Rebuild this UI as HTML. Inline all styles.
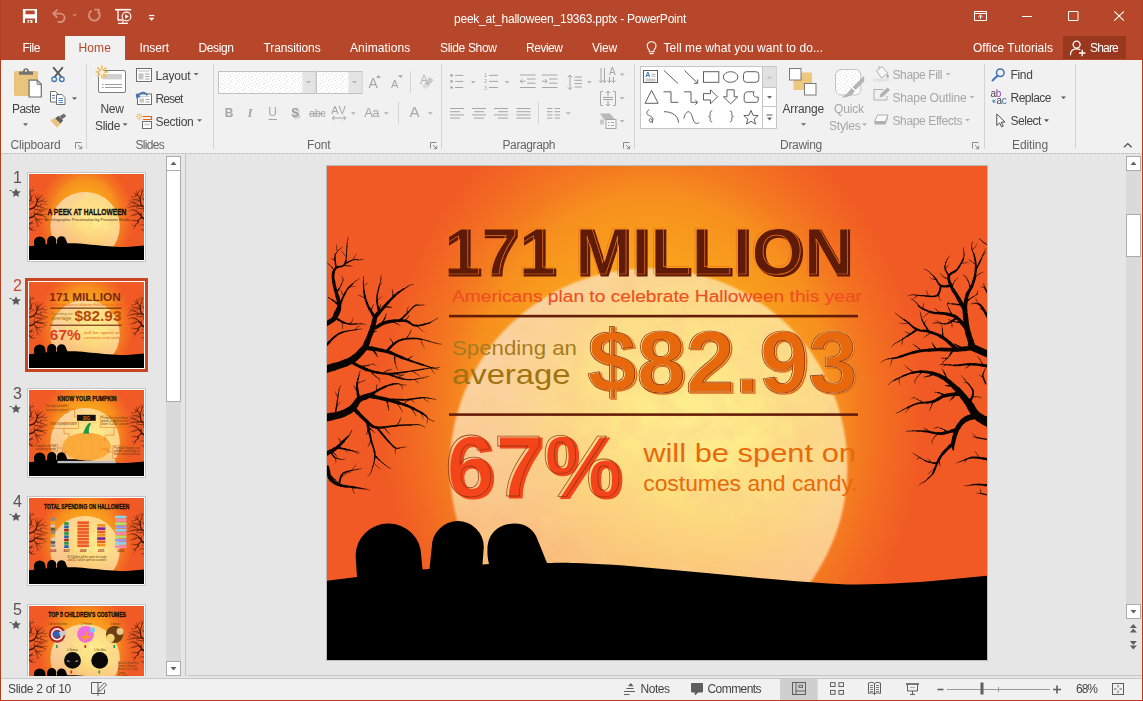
<!DOCTYPE html>
<html lang="en"><head><meta charset="utf-8"><title>peek_at_halloween_19363.pptx - PowerPoint</title>
<style>
html,body{margin:0;padding:0}
body{width:1143px;height:701px;overflow:hidden;background:#e6e6e6;font-family:"Liberation Sans",sans-serif;font-size:12px}
#app{position:relative;width:1143px;height:701px;overflow:hidden;background:#e6e6e6}
.a{position:absolute}
.t{position:absolute;white-space:nowrap;line-height:16px;height:16px}
#tb{left:0;top:0;width:1143px;height:60px;background:#b7472a}
#hometab{left:65px;top:36px;width:60px;height:24px;background:#f1f1f1}
#share{left:1063px;top:36px;width:63px;height:23px;background:#99371f}
#rib{left:0;top:60px;width:1143px;height:93px;background:#f1f1f1}
#ribline{left:1px;top:153px;width:1141px;height:1px;background:repeating-linear-gradient(90deg,#c4c4c4 0 3px,#dedede 3px 4px)}
#status{left:0;top:678px;width:1143px;height:22px;background:#f1f1f1;border-top:1px solid #c8c8c8}
#stline{left:188px;top:675px;width:955px;height:1px;background:#c6c6c6}
#stgap{left:0;top:676px;width:1143px;height:2px;background:#e6e6e6}
.bl{left:0;top:0;width:1px;height:701px;background:#b43f1f}
.br{left:1142px;top:0;width:1px;height:701px;background:#b43f1f}
.bb{left:0;top:700px;width:1143px;height:1px;background:#b43f1f}
.sep{position:absolute;width:1px;background:#d4d4d4}
.thumb{position:absolute;background:#fff;border:1px solid #c9c9c9;box-sizing:border-box}
.thumb svg{position:absolute;left:0;top:0;display:block}
svg text{font-family:"Liberation Sans",sans-serif}
</style></head><body><div id="app">
<div class="a" id="tb"></div><div class="a" id="hometab"></div><div class="a" id="share"></div>
<div class="a" id="rib"></div><div class="a" id="ribline"></div>

<div class="sep" style="left:86px;top:64px;height:85px"></div>
<div class="sep" style="left:213px;top:64px;height:85px"></div>
<div class="sep" style="left:441px;top:64px;height:85px"></div>
<div class="sep" style="left:634px;top:64px;height:85px"></div>
<div class="sep" style="left:984px;top:64px;height:85px"></div>
<div class="sep" style="left:1075px;top:64px;height:85px"></div>
<div class="sep" style="left:410px;top:71px;height:22px"></div>
<div class="sep" style="left:398px;top:102px;height:22px"></div>
<div class="sep" style="left:538px;top:102px;height:22px"></div>

<div class="a" style="left:27px;top:172px;width:119px;height:90px;background:#fff;border:1px solid #c4c4c4;box-sizing:border-box"></div><svg class="a" style="left:29px;top:174px" width="115" height="86" viewBox="0 0 660 493.6"><defs>
<radialGradient id="t0bg" gradientUnits="userSpaceOnUse" cx="325" cy="250" r="272" gradientTransform="translate(325 250) scale(1 1.21) translate(-325 -250)">
<stop offset="0" stop-color="#fbb034"/><stop offset="0.47" stop-color="#f9a11c"/><stop offset="0.667" stop-color="#f7901e"/><stop offset="0.765" stop-color="#f47b20"/><stop offset="0.86" stop-color="#f36c22"/><stop offset="1" stop-color="#f15a24"/>
</radialGradient>
<radialGradient id="t0mo" gradientUnits="userSpaceOnUse" cx="365" cy="262" r="215">
<stop offset="0" stop-color="#feef90"/><stop offset="0.3" stop-color="#fee988"/><stop offset="0.6" stop-color="#fdde84" stop-opacity="0.85"/><stop offset="0.85" stop-color="#fcd58c" stop-opacity="0.35"/><stop offset="1" stop-color="#fbd3a0" stop-opacity="0"/>
</radialGradient>
<linearGradient id="t0mv" gradientUnits="userSpaceOnUse" x1="360" y1="285" x2="295" y2="500">
<stop offset="0" stop-color="#f6923a" stop-opacity="0"/><stop offset="0.4" stop-color="#f6923a" stop-opacity="0.18"/><stop offset="0.75" stop-color="#f68e36" stop-opacity="0.42"/><stop offset="1" stop-color="#f58a32" stop-opacity="0.62"/>
</linearGradient>
<filter id="t0bl" x="-5%" y="-5%" width="110%" height="110%"><feGaussianBlur stdDeviation="1.2"/></filter>
<filter id="t0tx" x="0" y="0" width="100%" height="100%"><feTurbulence type="fractalNoise" baseFrequency="0.035" numOctaves="3" seed="4" result="n"/><feColorMatrix in="n" type="matrix" values="0 0 0 0 0.96  0 0 0 0 0.62  0 0 0 0 0.25  0.9 0.9 0 0 -0.72" result="c"/><feComposite in="c" in2="SourceGraphic" operator="in"/></filter>
</defs><rect x="0" y="0" width="660" height="495" fill="url(#t0bg)"/><g filter="url(#t0bl)"><circle cx="321.6" cy="301.3" r="198.7" fill="#fbd2a2"/><circle cx="321.6" cy="301.3" r="198.7" fill="url(#t0mo)"/><circle cx="321.6" cy="301.3" r="198.7" fill="url(#t0mv)"/></g><circle cx="321.6" cy="301.3" r="197" fill="#000" filter="url(#t0tx)"/><g opacity="0.8" fill="none" stroke="#0b0502" stroke-linecap="round" stroke-linejoin="round"><path d="M-2.0 203.8 L1.7 202.6 L7.1 201.0M7.1 201.0 L13.2 199.1 L19.1 197.0M-2.0 252.3 L0.6 251.7 L4.3 250.9M4.3 250.9 L8.5 250.0 L12.6 249.0 L16.0 247.9" stroke-width="7.5"/><path d="M19.1 197.0 L24.0 194.8 L27.7 192.2M16.0 247.9 L18.5 246.8 L20.7 245.7 L22.6 244.5" stroke-width="7.0"/><path d="M27.7 192.2 L31.1 189.3 L33.9 186.3M33.9 186.3 L36.2 183.6 L37.9 181.8M22.6 244.5 L24.3 243.3 L26.0 241.9M26.0 241.9 L27.3 240.4 L28.5 238.7" stroke-width="6.5"/><path d="M28.5 238.7 L29.5 236.9 L30.6 235.3 L31.9 233.9" stroke-width="6.0"/><path d="M37.9 181.8 L38.4 181.1 L39.1 180.2M37.9 181.8 L39.0 179.3 L40.4 175.6M40.4 175.6 L42.1 171.5 L43.7 167.3M31.9 233.9 L33.8 232.8 L36.1 231.9 L38.5 231.1M38.5 231.1 L40.5 230.4 L41.9 229.9" stroke-width="5.5"/><path d="M43.7 167.3 L44.9 163.8 L45.8 160.9M45.8 160.9 L46.6 158.0 L47.1 155.5M-2.0 158.8 L-0.5 158.0 L1.5 156.8 L3.9 155.3 L6.2 153.7" stroke-width="5.0"/><path d="M47.1 155.5 L47.6 153.4 L47.9 151.9M6.2 153.7 L8.0 151.9 L9.4 149.8 L10.5 147.6 L11.5 145.2 L12.1 142.6M41.9 229.9 L42.7 229.5 L43.7 228.9M0.0 301.8 L0.4 303.6 L1.0 306.0" stroke-width="4.5"/><path d="M39.1 180.2 L39.7 179.2 L40.3 178.2M37.9 181.8 L41.0 182.3 L45.2 182.9M47.9 151.9 L47.9 151.1 L47.9 150.1M12.1 142.6 L12.4 139.9 L12.1 136.9 L11.3 133.7 L10.3 130.3M41.9 229.9 L44.3 230.5 L47.7 231.2M47.7 231.2 L51.7 232.0 L55.9 232.9 L59.9 233.9M26.0 241.9 L27.9 244.0 L30.7 246.9M-2.0 288.8 L-0.3 287.9 L2.1 286.6M1.0 306.0 L1.8 308.9 L2.7 311.6 L4.0 313.8" stroke-width="4.0"/><path d="M45.2 182.9 L50.2 183.7 L55.3 184.7M47.9 151.9 L49.6 149.9 L51.9 147.1M44.9 163.8 L46.9 162.7 L49.7 161.1 L53.0 159.2M43.7 228.9 L44.7 228.2 L45.6 227.4M59.9 233.9 L63.8 235.0 L67.9 236.1 L72.1 237.3M30.7 246.9 L34.0 250.2 L37.2 253.4 L39.9 255.9M2.1 286.6 L4.9 285.1 L7.7 283.4M4.0 313.8 L5.5 315.5 L7.4 316.8 L9.4 318.0" stroke-width="3.5"/><path d="M40.3 178.2 L40.7 177.1 L41.1 176.3M55.3 184.7 L59.9 185.8 L64.0 187.1M47.9 150.1 L47.8 149.1 L47.8 148.0M47.9 151.9 L46.9 150.2 L45.5 147.9M51.9 147.1 L54.7 143.9 L57.4 140.6M53.0 159.2 L56.5 157.5 L59.9 156.3 L63.4 155.5M63.4 155.5 L67.3 154.9 L71.1 154.7 L74.7 154.6M10.3 130.3 L9.2 127.0 L8.4 123.9 L7.7 120.9 L7.0 117.9 L6.5 115.0M24.0 196.0 L26.1 197.1 L29.0 198.8M29.0 198.8 L32.5 200.7 L36.2 202.5 L39.9 204.0M72.1 237.3 L76.1 238.6 L79.9 239.9M31.9 233.9 L31.6 232.0 L31.1 229.2M39.9 255.9 L42.0 257.7 L43.7 259.3 L45.4 260.5M7.7 283.4 L10.0 281.9 L11.9 280.3M9.4 318.0 L11.6 319.0 L14.0 319.8" stroke-width="3.0"/><path d="M64.0 187.1 L67.8 188.7 L71.7 190.4 L75.7 192.1M45.5 147.9 L43.8 145.2 L42.2 142.5M42.2 142.5 L40.9 139.9 L40.0 137.5M57.4 140.6 L59.9 137.9 L62.0 135.6M62.0 135.6 L64.0 133.5 L66.0 131.5 L67.9 129.6M74.7 154.6 L77.9 154.9 L80.4 155.6 L82.3 156.7M59.9 185.0 L61.4 183.5 L63.5 181.3M63.5 181.3 L66.1 178.8 L68.9 176.5M6.5 115.0 L6.1 112.3 L6.0 109.9 L6.2 107.9 L6.6 106.1M8.0 151.9 L9.6 152.8 L11.8 154.1M-2.0 180.8 L-0.2 178.9 L2.4 176.1M39.9 204.0 L43.7 205.1 L47.6 206.2 L51.7 207.0M51.7 207.0 L55.8 207.6 L59.9 208.0M45.6 227.4 L46.5 226.6 L47.2 226.0M79.9 239.9 L83.5 241.5 L87.1 243.2M31.1 229.2 L30.6 225.9 L30.1 222.7M41.9 229.9 L43.9 228.8 L46.6 227.1M46.6 227.1 L49.8 225.2 L53.0 223.4M59.9 233.9 L62.7 234.0 L66.6 234.0M45.4 260.5 L47.3 261.3 L49.9 261.9M49.9 261.9 L53.3 262.0 L57.1 261.6M39.9 255.9 L40.5 258.4 L41.2 261.9M41.2 261.9 L42.1 266.0 L43.1 270.1M11.9 280.3 L13.6 278.6 L15.2 276.9 L16.7 275.3M14.0 319.8 L16.6 320.5 L19.5 320.9" stroke-width="2.5"/><path d="M75.7 192.1 L79.9 193.8 L84.8 195.5M45.2 182.9 L46.0 183.9 L47.0 185.3M43.7 167.3 L44.4 167.2 L45.5 167.0M47.6 153.4 L47.4 152.4 L47.2 150.9M47.8 148.0 L47.8 147.0 L47.8 146.3M40.0 137.5 L39.1 135.1 L38.4 132.7 L37.8 130.3M67.9 129.6 L69.9 127.9 L72.1 126.2M51.9 145.9 L51.5 144.0 L51.0 141.5M51.0 141.5 L50.4 138.4 L50.0 135.2M82.3 156.7 L84.1 158.0 L85.9 159.2 L87.9 159.8 L90.2 159.9M90.2 159.9 L92.8 159.6 L95.5 159.0 L97.9 158.4M71.9 155.5 L73.0 154.4 L74.5 153.0M68.9 176.5 L71.9 174.8 L75.1 173.8M6.6 106.1 L7.2 104.6 L8.1 103.2 L9.2 101.9 L10.7 101.1M6.2 153.7 L6.1 152.4 L6.1 150.5M12.4 139.9 L13.4 137.6 L14.8 134.3M14.8 134.3 L16.5 130.5 L18.3 126.9M11.8 154.1 L14.4 155.6 L17.2 156.9M2.4 176.1 L5.4 173.0 L8.7 170.1M59.9 208.0 L63.8 208.0 L67.7 207.7M59.9 208.0 L62.7 208.9 L66.6 210.3M87.1 243.2 L90.4 244.9 L93.4 246.5 L95.8 247.9M30.1 222.7 L30.0 220.0 L30.1 217.5M53.0 223.4 L55.9 222.0 L58.5 220.8M66.6 234.0 L71.2 234.1 L75.8 234.1M75.8 234.1 L79.9 233.9 L83.4 233.6M57.1 261.6 L61.3 261.0 L65.7 260.4 L69.9 259.9M43.1 270.1 L43.9 273.9 L44.8 277.2M49.9 261.9 L51.3 263.6 L53.3 266.0M53.3 266.0 L55.5 268.8 L57.8 271.5M16.7 275.3 L18.0 273.9 L19.2 272.7M10.0 281.9 L11.4 282.1 L13.3 282.5M13.3 282.5 L15.6 283.0 L17.9 283.4M19.5 320.9 L22.6 321.2 L25.5 321.5 L28.0 321.8M1.8 308.9 L2.5 310.1 L3.5 311.8M12.0 318.8 L12.4 317.2 L12.8 314.9M12.8 314.9 L13.5 312.2 L14.5 309.7" stroke-width="2.0"/><path d="M84.8 195.5 L90.3 197.4 L95.8 199.2M95.8 199.2 L100.5 200.7 L103.8 201.8M47.0 185.3 L48.0 186.7 L48.9 188.1M45.5 167.0 L46.5 166.6 L47.5 166.1M47.2 150.9 L47.0 149.5 L46.6 148.1M37.8 130.3 L37.3 127.9 L37.0 125.4M37.0 125.4 L36.7 122.7 L36.5 120.1M72.1 126.2 L74.5 124.6 L76.8 123.1M54.7 143.9 L55.9 143.2 L57.6 142.3M50.0 135.2 L49.9 131.9 L50.4 128.3M97.9 158.4 L99.8 157.8 L101.4 157.4 L102.6 157.0M53.0 159.2 L54.2 159.3 L55.9 159.4M74.5 153.0 L76.3 151.3 L78.1 149.5M78.1 149.5 L79.9 147.9 L81.5 146.2M81.5 146.2 L83.2 144.3 L84.9 142.5 L86.5 141.0M75.1 173.8 L78.6 173.1 L82.3 172.8 L86.1 172.7M86.1 172.7 L89.9 172.8 L93.9 173.4M10.7 101.1 L12.6 100.7 L14.7 100.4 L16.6 99.6 L18.0 97.9 L18.8 95.0M6.1 150.5 L6.2 148.6 L6.5 146.9M6.5 146.9 L7.0 145.3 L7.4 143.6 L7.5 141.8M9.2 127.0 L10.2 126.3 L11.6 125.2M18.3 126.9 L20.0 123.9 L21.7 121.6M17.2 156.9 L20.0 157.8 L22.9 158.2M8.7 170.1 L12.0 167.8 L15.6 166.4M15.6 166.4 L19.7 165.4 L23.9 164.7M9.2 101.9 L8.9 100.2 L8.5 97.7M8.5 97.7 L8.2 94.9 L7.9 92.2M18.0 97.9 L19.1 97.3 L20.7 96.4M20.7 96.4 L22.5 95.5 L24.4 94.6M67.7 207.7 L71.5 207.2 L75.6 206.6 L79.9 206.0M79.9 206.0 L84.9 205.2 L90.7 204.3 L96.4 203.4M66.6 210.3 L71.1 211.9 L75.8 213.2M75.8 213.2 L79.9 214.0 L83.7 214.0M95.8 247.9 L97.6 249.1 L98.9 250.1 L99.7 251.0M47.7 231.2 L48.5 232.3 L49.7 234.0M49.7 234.0 L50.7 235.7 L51.7 237.4M59.9 233.9 L61.0 233.5 L62.5 232.8M30.1 217.5 L30.6 215.2 L31.1 213.1M58.5 220.8 L61.1 219.8 L63.6 219.0 L65.9 218.4M65.9 218.4 L67.9 218.0 L69.6 217.9M83.4 233.6 L86.9 233.1 L90.2 232.6 L93.2 232.2M93.2 232.2 L95.8 231.9 L98.1 232.0M69.9 259.9 L74.4 259.6 L79.2 259.4 L83.9 259.2M34.0 250.2 L34.4 251.8 L35.0 254.0M44.8 277.2 L45.9 280.4 L46.9 283.5 L47.6 286.7M47.6 286.7 L47.9 289.8 L47.6 293.4M57.8 271.5 L59.9 273.9 L61.7 275.9M61.7 275.9 L63.5 277.9 L65.2 279.7 L66.8 281.2M47.9 289.8 L48.7 290.7 L49.9 291.9M49.9 291.9 L51.2 293.2 L52.6 294.6M8.0 249.9 L8.3 248.3 L8.6 246.1M8.6 246.1 L9.1 243.4 L9.6 240.6M19.2 272.7 L20.2 271.6 L21.1 270.7M4.9 285.1 L5.3 284.4 L5.8 283.4M17.9 283.4 L20.0 283.9 L21.9 284.3M4.0 286.9 L4.5 287.6 L5.2 288.6M5.2 288.6 L6.1 289.8 L7.0 291.0M28.0 321.8 L30.1 322.1 L32.1 322.5 L33.9 322.8M3.5 311.8 L4.7 313.4 L6.1 314.7M11.6 319.0 L12.8 318.5 L14.5 318.0M14.5 309.7 L16.0 307.8 L18.4 306.5" stroke-width="1.5"/><path d="M48.9 188.1 L49.8 189.6 L50.4 190.7M67.8 188.7 L67.8 190.4 L67.7 192.8M67.7 192.8 L67.9 195.1 L68.3 197.4M79.9 193.8 L80.5 195.1 L81.4 197.0M103.8 201.8 L104.7 202.2 L105.9 202.8M47.5 166.1 L48.4 165.6 L49.0 165.2M46.6 148.1 L46.2 146.6 L45.9 145.7M36.5 120.1 L36.4 117.9 L36.3 116.3M43.8 145.2 L43.8 144.2 L43.9 142.8M76.8 123.1 L78.9 121.8 L80.3 120.9M57.6 142.3 L59.4 141.4 L61.2 140.6M61.2 140.6 L63.0 139.8 L64.2 139.3M62.0 135.6 L62.2 134.4 L62.5 132.7M50.4 128.3 L51.3 124.1 L52.3 120.0M52.3 120.0 L53.3 116.4 L53.9 113.9M102.6 157.0 L103.5 156.5 L104.3 156.1 L104.8 155.9M55.9 159.4 L57.6 159.6 L59.3 160.0M59.3 160.0 L60.9 160.4 L62.1 160.8M86.5 141.0 L87.9 139.9 L89.1 139.3M89.1 139.3 L90.3 139.2 L91.4 139.2M91.4 139.2 L92.2 139.4 L92.9 139.5M93.9 173.4 L98.3 174.4 L102.6 175.6M102.6 175.6 L106.2 176.7 L108.8 177.4M66.1 178.8 L66.1 177.3 L66.3 175.2M66.3 175.2 L66.5 173.0 L67.1 171.0M18.8 95.0 L19.4 90.9 L19.6 86.5 L19.8 82.6 L20.0 80.0M7.5 141.8 L7.5 139.9 L7.5 138.5M11.6 125.2 L13.1 124.3 L14.6 123.5M7.0 117.9 L6.0 117.4 L4.6 116.7M4.6 116.7 L3.2 116.0 L1.8 115.3M7.2 104.6 L6.0 103.5 L4.2 102.0M21.7 121.6 L23.7 119.6 L25.6 117.9M25.6 117.9 L27.2 116.5 L28.4 115.5M22.9 158.2 L26.2 158.3 L29.5 158.1M29.5 158.1 L32.4 157.9 L34.3 157.8M11.8 154.1 L12.6 153.7 L13.9 153.1M23.9 164.7 L27.4 164.2 L30.0 163.8M5.4 173.0 L5.2 172.3 L4.9 171.2M7.9 92.2 L8.0 90.0 L8.5 88.3M8.5 88.3 L9.4 86.8 L10.4 85.6M10.4 85.6 L11.4 84.7 L12.0 84.0M24.4 94.6 L26.0 94.0 L27.4 93.7M27.4 93.7 L28.8 93.7 L30.1 93.8M30.1 93.8 L31.2 93.9 L31.9 94.0M96.4 203.4 L101.4 202.6 L104.8 202.0M43.7 205.1 L45.0 204.9 L46.9 204.5M46.9 204.5 L48.8 204.0 L50.5 203.7M55.8 207.6 L57.1 208.7 L58.8 210.2M58.8 210.2 L60.6 211.7 L62.4 213.2M71.5 207.2 L72.6 206.4 L74.3 205.2M83.7 214.0 L87.7 213.6 L91.4 213.0M91.4 213.0 L94.6 212.4 L96.8 212.0M99.7 251.0 L100.3 251.8 L100.8 252.3M51.7 237.4 L52.5 239.3 L53.0 240.6M62.5 232.8 L64.0 232.0 L65.4 231.3M67.9 236.1 L69.2 235.6 L71.0 234.9M71.0 234.9 L72.7 234.0 L74.2 232.9M31.1 213.1 L31.6 211.3 L31.9 210.0M30.6 225.9 L30.1 225.5 L29.3 224.8M29.3 224.8 L28.6 224.2 L27.8 223.6M69.6 217.9 L71.2 218.0 L72.5 218.4M72.5 218.4 L73.5 218.7 L74.3 219.0M49.8 225.2 L51.1 225.7 L52.9 226.3M98.1 232.0 L100.2 232.2 L101.8 232.5M101.8 232.5 L103.2 232.8 L104.2 232.9M83.9 259.2 L88.0 259.0 L90.9 258.9M35.0 254.0 L35.5 256.3 L35.8 258.6M35.8 258.6 L36.0 260.9 L36.1 262.5M43.7 259.3 L43.0 260.9 L41.9 263.3M41.9 263.3 L40.7 265.5 L39.1 267.5M57.1 261.6 L58.4 260.5 L60.1 258.9M47.6 293.4 L46.9 297.2 L45.9 300.8M45.9 300.8 L44.9 304.0 L44.3 306.2M42.1 266.0 L43.4 266.8 L45.2 268.1M45.2 268.1 L46.9 269.4 L48.5 270.9M44.8 277.2 L44.4 278.3 L43.9 279.8M66.8 281.2 L68.3 282.3 L69.7 282.7M69.7 282.7 L71.1 282.7 L72.4 282.4M72.4 282.4 L73.5 282.1 L74.3 281.9M52.6 294.6 L53.9 295.8 L55.2 297.0M55.2 297.0 L56.6 298.1 L57.9 299.2M57.9 299.2 L59.1 300.2 L59.9 300.8M9.6 240.6 L10.0 237.9 L10.4 235.0M10.4 235.0 L10.9 231.8 L11.3 228.6M11.3 228.6 L11.7 225.9 L12.0 224.0M21.1 270.7 L21.8 270.0 L22.4 269.5M5.8 283.4 L6.2 282.5 L6.4 281.4M6.4 281.4 L6.5 280.3 L6.5 279.6M11.9 280.3 L12.5 280.0 L13.5 279.6M13.5 279.6 L14.4 279.3 L15.4 279.2M21.9 284.3 L23.8 284.8 L25.7 285.2M25.7 285.2 L27.2 285.6 L28.4 285.9M7.0 291.0 L8.0 291.8 L9.2 292.5M9.2 292.5 L10.5 293.0 L11.9 293.3M11.9 293.3 L13.1 293.6 L14.0 293.8M33.9 322.8 L35.3 323.0 L36.3 323.2M6.1 314.7 L7.6 316.0 L8.7 316.9M14.5 318.0 L16.2 317.5 L17.9 317.3M18.4 306.5 L21.5 305.5 L24.9 304.8M24.9 304.8 L27.9 304.3 L30.0 303.8" stroke-width="1.0"/><path d="M68.3 197.4 L68.9 199.7 L69.3 201.3M81.4 197.0 L82.1 199.0 L82.6 201.0M82.6 201.0 L82.8 203.1 L83.0 204.6M105.9 202.8 L107.2 203.4 L108.5 203.8M108.5 203.8 L109.8 204.3 L110.7 204.6M43.9 142.8 L44.1 141.4 L44.4 140.0M44.4 140.0 L44.8 138.6 L45.2 137.6M62.5 132.7 L62.7 131.0 L62.5 129.3M62.5 129.3 L62.2 127.6 L61.9 126.4M67.1 171.0 L67.8 169.0 L68.3 167.6M14.6 123.5 L16.2 122.8 L17.4 122.3M1.8 115.3 L0.4 114.6 L-0.6 114.1M4.2 102.0 L2.5 100.4 L1.2 98.5M1.2 98.5 L0.0 96.5 L-0.8 95.1M13.9 153.1 L15.1 152.5 L16.3 152.0M16.3 152.0 L17.6 151.6 L18.5 151.3M4.9 171.2 L4.5 170.2 L3.9 169.3M3.9 169.3 L3.3 168.4 L2.8 167.8M50.5 203.7 L52.2 203.2 L53.8 202.7 L55.6 201.9M55.6 201.9 L57.3 200.9 L58.5 200.3M62.4 213.2 L64.2 214.7 L65.4 215.7M74.3 205.2 L75.9 204.2 L77.7 203.4M77.7 203.4 L79.6 202.7 L80.9 202.2M65.4 231.3 L66.8 230.4 L67.8 229.8M74.2 232.9 L75.7 231.6 L76.7 230.7M27.8 223.6 L26.9 223.1 L26.3 222.8M52.9 226.3 L54.6 227.0 L56.2 228.0M56.2 228.0 L57.8 229.0 L58.9 229.8M39.1 267.5 L37.4 269.5 L36.2 270.8M60.1 258.9 L61.7 257.2 L63.1 255.3M63.1 255.3 L64.3 253.3 L65.1 251.9M48.5 270.9 L50.1 272.4 L51.2 273.4M43.9 279.8 L43.3 281.3 L42.8 282.9M42.8 282.9 L42.2 284.4 L41.9 285.5M15.4 279.2 L16.4 279.2 L17.1 279.1M17.9 317.3 L19.7 317.2 L20.9 317.1" stroke-width="0.5"/></g><g opacity="0.8" fill="none" stroke="#0b0502" stroke-linecap="round" stroke-linejoin="round"><path d="M662.8 257.5 L661.0 256.5 L658.3 255.2" stroke-width="9.5"/><path d="M658.3 255.2 L655.3 253.6 L652.3 251.8" stroke-width="8.5"/><path d="M652.3 251.8 L649.8 249.9 L647.9 247.8" stroke-width="8.0"/><path d="M647.9 247.8 L646.3 245.3 L644.8 242.8 L643.4 240.3" stroke-width="7.5"/><path d="M661.8 188.8 L645.8 181.8M643.4 240.3 L641.9 237.9 L640.1 235.6" stroke-width="7.0"/><path d="M640.1 235.6 L638.3 233.3 L636.5 231.1" stroke-width="6.5"/><path d="M645.8 181.8 L645.3 181.5 L644.6 180.9M645.8 181.8 L645.0 179.4 L643.9 176.0M636.5 231.1 L635.0 229.3 L633.9 227.9M649.8 249.9 L648.1 250.4 L645.7 250.9" stroke-width="6.0"/><path d="M643.9 176.0 L642.5 172.0 L641.3 167.8M641.3 167.8 L640.3 163.8 L639.5 159.7M645.7 250.9 L642.9 251.7 L640.2 252.7M640.2 252.7 L637.9 253.9 L635.9 255.5" stroke-width="5.5"/><path d="M645.8 181.8 L643.7 182.1 L640.8 182.6 L637.3 183.1M639.5 159.7 L639.0 155.0 L638.5 150.5M638.5 150.5 L638.1 146.6 L637.9 143.9M633.9 227.9 L633.2 227.4 L632.4 226.7M633.9 227.9 L632.2 226.2 L629.9 223.8 L627.3 221.0M635.9 255.5 L634.2 257.3 L632.6 259.3 L631.2 261.5" stroke-width="5.0"/><path d="M644.6 180.9 L643.9 180.4 L643.2 179.8M637.3 183.1 L633.6 183.5 L629.9 183.8 L626.1 183.9M627.3 221.0 L624.5 218.2 L621.9 216.0 L619.5 214.2M631.2 261.5 L629.9 263.9 L628.8 266.7" stroke-width="4.5"/><path d="M626.1 183.9 L622.2 183.9 L618.1 183.8 L614.0 183.7M637.9 143.9 L637.6 143.2 L637.2 142.1M637.9 143.9 L638.1 141.9 L638.3 139.2 L638.7 136.0M637.9 143.9 L636.7 141.9 L635.1 139.1 L633.3 135.9 L631.5 132.7M640.3 163.8 L638.9 162.1 L636.9 159.5 L634.6 156.7M632.4 226.7 L631.6 225.9 L630.9 225.0M619.5 214.2 L617.2 212.6 L614.8 211.2 L612.4 210.0M633.9 227.9 L631.6 228.2 L628.4 228.4M628.8 266.7 L627.8 269.9 L627.0 273.1M627.0 273.1 L626.4 275.9 L625.9 277.9" stroke-width="4.0"/><path d="M638.7 136.0 L639.2 132.8 L639.9 129.9 L640.8 127.4M631.5 132.7 L629.9 129.9 L628.5 127.6 L627.1 125.6 L625.9 123.7M634.6 156.7 L632.2 153.9 L629.9 151.9 L627.6 150.5M629.9 183.8 L628.0 182.1 L625.3 179.6 L622.2 176.8M612.4 210.0 L609.9 209.0 L607.2 208.0 L604.5 207.3M628.4 228.4 L624.8 228.8 L621.1 229.3 L617.9 229.9M625.9 277.9 L625.6 278.6 L625.3 279.7M629.9 263.9 L627.7 264.5 L624.5 265.5" stroke-width="3.5"/><path d="M643.2 179.8 L642.6 179.1 L642.2 178.6M614.0 183.7 L609.9 183.8 L605.9 184.0 L601.9 184.3M637.2 142.1 L636.8 141.1 L636.5 140.0M640.8 127.4 L642.1 125.1 L643.5 122.8 L644.8 120.4M625.9 123.7 L624.8 121.8 L623.9 119.9 L623.1 117.8M627.6 150.5 L625.2 149.5 L622.8 148.9 L620.3 148.3M622.2 176.8 L618.9 174.0 L615.9 171.8 L613.1 170.2M613.1 170.2 L610.2 168.8 L607.4 167.7 L604.6 166.7M661.8 152.9 L660.7 150.9 L659.1 148.1M661.8 200.4 L659.3 200.1 L655.7 199.6M604.5 207.3 L601.6 206.6 L598.8 206.2 L595.9 206.0 L593.1 206.0M617.9 229.9 L615.3 230.9 L613.0 232.2 L610.8 233.6M625.9 277.9 L624.5 279.2 L622.4 281.1M622.4 281.1 L620.1 283.4 L617.8 285.7 L615.9 287.8M624.5 265.5 L620.9 266.5 L617.2 267.4" stroke-width="3.0"/><path d="M601.9 184.3 L597.9 184.6 L593.9 185.1 L589.9 185.8 L585.8 186.8M639.0 155.0 L639.8 154.3 L641.1 153.3M644.8 120.4 L645.8 117.9 L646.7 115.2 L647.5 112.4M647.5 112.4 L648.1 109.5 L648.5 106.6 L648.8 103.9 L648.9 101.4M623.1 117.8 L622.3 115.7 L621.8 113.6 L621.6 111.7 L621.9 109.9M621.9 109.9 L622.9 108.5 L624.5 107.4 L626.3 106.4 L628.2 105.3M623.9 119.9 L622.5 120.0 L620.4 120.3M620.3 148.3 L617.9 147.9 L615.5 147.5 L613.1 147.4M613.1 147.4 L610.7 147.4 L608.3 147.3 L605.9 146.9 L603.4 146.1M604.6 166.7 L601.9 165.8 L599.4 165.3 L596.9 165.0M659.1 148.1 L657.2 144.9 L655.4 142.0M655.7 199.6 L651.6 199.1 L647.5 198.6M647.5 198.6 L643.8 198.4 L640.8 198.5M630.9 225.0 L630.2 224.1 L629.8 223.4M593.1 206.0 L590.4 206.2 L587.6 206.6 L584.8 207.2M610.8 233.6 L608.5 234.9 L605.9 235.9M605.9 235.9 L602.9 236.5 L599.7 236.8M641.9 237.9 L642.7 236.3 L643.9 234.0M625.3 279.7 L624.9 280.7 L624.5 281.8M615.9 287.8 L614.4 289.8 L613.1 291.8 L612.0 293.8M612.0 293.8 L610.9 295.8 L609.9 297.8M617.2 267.4 L613.9 267.9 L611.0 267.8M611.0 267.8 L608.2 267.5 L605.4 266.9 L602.7 266.3M661.8 293.8 L659.6 293.5 L656.4 292.9" stroke-width="2.5"/><path d="M585.8 186.8 L581.4 188.1 L577.1 189.6 L573.2 190.8M637.3 183.1 L636.0 182.6 L634.1 181.9M636.5 140.0 L636.1 139.0 L635.9 138.3M648.9 101.4 L648.8 98.9 L648.6 96.4 L648.2 94.1M628.2 105.3 L629.9 103.9 L631.3 102.1 L632.6 100.0M620.4 120.3 L618.1 120.5 L615.8 120.4M615.8 120.4 L613.9 119.9 L612.5 118.8M613.9 119.9 L613.5 121.4 L613.1 123.7M613.1 123.7 L612.4 126.1 L611.4 128.4M603.4 146.1 L600.8 145.2 L598.2 144.1 L595.8 142.9M629.9 151.9 L628.5 152.8 L626.6 154.2M596.9 165.0 L594.5 164.9 L592.2 164.6 L589.9 163.8 L587.7 162.6M587.7 162.6 L585.6 160.9 L583.6 159.0 L581.7 157.3M601.9 165.8 L601.0 164.4 L599.8 162.4M589.9 163.8 L588.3 165.0 L585.9 166.6M655.4 142.0 L653.8 139.9 L652.6 138.7M640.8 198.5 L637.8 198.7 L635.1 199.1 L632.4 199.4M621.9 216.0 L620.2 216.3 L617.9 216.7M599.7 236.8 L596.4 237.0 L593.1 237.3 L589.9 237.9M643.9 234.0 L645.2 231.3 L646.1 228.5M627.8 269.9 L626.9 270.3 L625.7 271.0M609.9 297.8 L609.0 299.9 L608.4 301.9M602.7 266.3 L599.9 265.9 L596.8 265.6M609.9 297.8 L608.6 297.6 L606.6 297.4M656.4 292.9 L652.7 292.3 L649.0 291.9M661.8 319.8 L660.1 319.6 L657.7 319.4M657.7 319.4 L654.9 319.1 L652.2 318.9" stroke-width="2.0"/><path d="M573.2 190.8 L570.0 191.8 L567.4 192.4 L565.4 192.7M634.1 181.9 L632.3 181.1 L630.5 180.1M626.1 183.9 L625.5 185.1 L624.5 186.7M624.5 186.7 L623.5 188.3 L622.6 189.7M609.9 183.8 L608.6 183.4 L606.7 182.8M597.9 184.6 L597.3 185.8 L596.4 187.4M641.1 153.3 L642.2 152.2 L643.2 151.0M648.2 94.1 L647.8 92.0 L647.3 89.8 L646.6 87.7M642.1 125.1 L643.0 124.7 L644.4 124.3M632.6 100.0 L633.9 97.8 L635.0 95.7 L635.9 94.0 L636.4 92.6M628.5 127.6 L628.6 126.5 L628.8 125.0M612.5 118.8 L611.2 117.2 L610.1 115.4 L609.1 113.5M609.1 113.5 L607.9 111.9 L606.6 110.4M611.4 128.4 L609.9 129.9 L607.7 130.5M607.7 130.5 L604.8 130.7 L601.7 130.4 L598.6 130.1M621.9 109.9 L621.2 108.8 L620.3 107.3M620.3 107.3 L619.2 105.5 L618.4 103.7M595.8 142.9 L593.9 141.9 L592.5 140.8 L591.4 139.6M626.6 154.2 L624.4 155.7 L622.0 157.0M622.0 157.0 L619.9 157.8 L617.7 158.1M581.7 157.3 L580.0 155.9 L578.4 154.7 L577.0 153.8M622.2 176.8 L622.1 175.5 L622.2 173.7M599.8 162.4 L598.3 160.0 L597.0 157.8M597.0 157.8 L595.9 155.9 L595.2 154.3M585.9 166.6 L583.2 168.4 L580.4 170.2M580.4 170.2 L578.0 171.8 L575.7 173.2M648.8 103.9 L649.6 102.5 L650.6 100.5M650.6 100.5 L651.7 98.2 L652.9 95.9M652.6 138.7 L651.4 138.0 L650.3 137.8M661.8 129.9 L657.8 121.9M632.4 199.4 L629.9 199.6 L627.3 199.5M627.3 199.5 L624.7 199.4 L622.3 199.2M584.8 207.2 L581.9 208.0 L578.9 209.1 L575.5 210.5M617.9 216.7 L615.6 217.2 L613.3 217.8M609.9 209.0 L608.4 209.7 L606.2 210.6M589.9 237.9 L586.7 239.0 L583.4 240.5 L580.2 242.0M646.1 228.5 L646.2 225.9 L645.3 223.4M645.3 223.4 L643.4 220.6 L641.2 217.9M625.7 271.0 L624.5 271.6 L623.2 272.1M624.5 281.8 L624.2 282.8 L623.9 283.6M608.4 301.9 L607.7 304.0 L606.9 305.9 L605.9 307.8M605.9 307.8 L604.4 309.7 L602.6 311.5 L600.7 313.3M596.8 265.6 L593.5 265.4 L590.3 265.3M606.6 297.4 L604.4 297.0 L602.1 296.5M602.1 296.5 L599.9 295.8 L597.7 294.8M649.0 291.9 L645.8 291.8 L643.0 292.3M643.0 292.3 L640.2 293.2 L637.6 294.2M652.2 318.9 L649.8 318.8 L647.9 318.9M661.8 273.9 L649.8 271.9M661.8 329.8 L653.8 327.8M658.8 218.0 L658.3 216.8 L657.6 215.2M657.6 215.2 L656.8 213.4 L656.2 211.6" stroke-width="1.5"/><path d="M565.4 192.7 L563.8 192.8 L562.5 192.9 L561.6 193.0M630.5 180.1 L628.9 179.0 L627.7 178.3M622.6 189.7 L621.6 191.1 L620.5 192.4 L619.1 193.7M619.1 193.7 L617.6 194.9 L616.5 195.7M620.5 192.4 L619.7 192.5 L618.5 192.6M606.7 182.8 L604.9 182.2 L603.0 181.6M596.4 187.4 L595.7 189.1 L595.1 190.9M585.8 186.8 L585.2 187.9 L584.3 189.4M643.2 151.0 L644.2 149.6 L644.8 148.7M646.6 87.7 L645.9 85.8 L645.3 84.1 L644.8 83.0M644.4 124.3 L645.7 123.9 L647.1 123.7M646.7 115.2 L646.3 114.1 L645.6 112.5M636.4 92.6 L636.7 91.4 L636.9 90.4 L637.0 89.6 L637.1 89.0M628.8 125.0 L629.1 123.4 L629.6 121.9M623.1 117.8 L621.8 117.4 L620.0 116.8M620.0 116.8 L618.3 116.0 L616.8 114.9M606.6 110.4 L605.1 108.9 L603.6 107.6M603.6 107.6 L602.4 106.4 L601.5 105.5M615.8 120.4 L615.2 119.5 L614.4 118.2M598.6 130.1 L595.9 129.9 L593.5 129.7M593.5 129.7 L591.2 129.5 L589.0 129.3M589.0 129.3 L587.2 129.0 L585.9 128.9M612.4 126.1 L613.3 127.2 L614.5 128.6M618.4 103.7 L617.9 101.9 L617.9 100.2M617.9 100.2 L618.4 98.4 L618.9 96.6M618.9 96.6 L619.5 95.0 L619.9 94.0M591.4 139.6 L590.6 138.5 L590.0 137.6 L589.5 136.9M622.8 148.9 L622.5 147.8 L622.2 146.2M622.2 146.2 L621.8 144.6 L621.3 143.1M610.7 147.4 L609.8 148.2 L608.5 149.4M617.7 158.1 L615.4 157.9 L613.2 157.5M613.2 157.5 L611.3 157.1 L609.9 156.9M577.0 153.8 L575.7 153.0 L574.7 152.3 L574.0 151.9M622.2 173.7 L622.3 171.9 L622.8 170.1M613.1 170.2 L611.7 170.1 L609.8 170.0M609.8 170.0 L607.9 169.7 L606.0 169.3M604.6 166.7 L604.3 165.6 L604.0 164.0M604.0 164.0 L603.8 162.4 L603.8 160.8M595.2 154.3 L594.7 152.9 L594.4 151.6M594.4 151.6 L594.1 150.6 L593.9 149.9M575.7 173.2 L573.3 174.7 L571.2 175.9M571.2 175.9 L569.3 177.0 L568.0 177.8M652.9 95.9 L653.8 94.0 L654.6 92.3M654.6 92.3 L655.3 90.6 L655.9 89.1M655.9 89.1 L656.5 87.9 L656.8 87.0M650.3 137.8 L649.5 137.6 L648.8 137.5M657.2 144.9 L657.7 144.4 L658.5 143.6M661.8 80.0 L655.8 76.0M622.3 199.2 L620.3 198.9 L618.9 198.8M655.7 199.6 L655.2 198.9 L654.5 197.9M654.5 197.9 L653.9 196.9 L653.5 195.8M643.8 198.4 L642.9 199.1 L641.6 200.2M575.5 210.5 L572.3 212.1 L569.5 213.4 L567.6 214.4M613.3 217.8 L611.0 218.4 L609.4 218.9M606.2 210.6 L604.0 211.4 L601.7 212.0M580.2 242.0 L577.5 243.4 L575.6 244.3M615.3 230.9 L614.0 230.3 L612.2 229.4M612.2 229.4 L610.3 228.4 L608.5 227.5M602.9 236.5 L601.8 235.8 L600.3 234.7M641.2 217.9 L639.2 215.6 L637.9 214.0M645.2 231.3 L644.6 230.4 L643.7 229.2M623.2 272.1 L621.8 272.5 L620.9 272.7M600.7 313.3 L599.1 314.8 L597.9 315.8M620.1 283.4 L618.6 284.0 L616.6 284.9M616.6 284.9 L614.6 286.0 L612.7 287.2M613.1 291.8 L613.5 292.7 L613.9 293.9M590.3 265.3 L587.5 265.2 L585.5 265.1M611.0 267.8 L610.4 268.4 L609.5 269.2M609.5 269.2 L608.7 270.1 L607.8 270.9M597.7 294.8 L595.3 293.4 L593.0 292.0M593.0 292.0 L591.0 290.7 L589.5 289.8M637.6 294.2 L635.4 295.2 L633.9 295.8M647.9 318.9 L646.0 319.1 L644.3 319.4M644.3 319.4 L642.9 319.6 L641.9 319.8M656.2 211.6 L655.8 210.0 L655.9 208.6M655.9 208.6 L656.4 207.1 L656.9 205.9M656.9 205.9 L657.5 204.8 L657.8 204.0" stroke-width="1.0"/><path d="M618.5 192.6 L617.4 192.6 L616.2 192.5M616.2 192.5 L615.1 192.4 L614.3 192.2M603.0 181.6 L601.1 181.0 L599.8 180.6M595.1 190.9 L594.6 192.7 L594.3 194.0M584.3 189.4 L583.6 190.9 L583.1 192.5M583.1 192.5 L582.8 194.2 L582.5 195.4M647.1 123.7 L648.4 123.5 L649.4 123.3M645.6 112.5 L645.0 110.9 L644.3 109.3M644.3 109.3 L643.6 107.7 L643.1 106.6M629.6 121.9 L630.1 120.4 L630.5 119.3M616.8 114.9 L615.3 113.6 L614.3 112.7M614.4 118.2 L613.6 116.8 L612.8 115.5M612.8 115.5 L612.0 114.2 L611.4 113.2M614.5 128.6 L615.8 130.1 L617.0 131.6M617.0 131.6 L618.2 133.1 L619.0 134.2M621.3 143.1 L620.8 141.6 L620.4 140.5M608.5 149.4 L607.3 150.5 L606.0 151.6M606.0 151.6 L604.6 152.7 L603.7 153.5M622.8 170.1 L623.4 168.4 L623.9 167.2M606.0 169.3 L604.2 168.8 L602.9 168.4M603.8 160.8 L603.9 159.2 L604.0 158.0M658.5 143.6 L659.4 142.8 L660.2 142.1M660.2 142.1 L661.1 141.5 L661.8 141.0M653.5 195.8 L653.1 194.6 L652.9 193.8M641.6 200.2 L640.3 201.2 L639.0 202.2M639.0 202.2 L637.6 203.2 L636.7 203.9M601.7 212.0 L599.4 212.4 L597.8 212.7M608.5 227.5 L606.6 226.7 L605.3 226.0M600.3 234.7 L598.7 233.5 L597.3 232.2M597.3 232.2 L596.0 230.9 L595.1 229.9M643.7 229.2 L642.9 227.9 L642.3 226.5M642.3 226.5 L641.6 225.1 L641.2 224.1M612.7 287.2 L610.9 288.5 L609.6 289.4M613.9 293.9 L614.5 295.1 L615.0 296.3M615.0 296.3 L615.5 297.5 L615.9 298.3M607.8 270.9 L606.9 271.7 L606.3 272.3" stroke-width="0.5"/></g><path d="M-2 415.5 L30 411.5 L28.6 390 A32.8 32 0 0 1 94.2 390 L95.5 404 L102.5 403.5 L104.800 381.500 A26 26 0 0 1 156.800 381.500 L155.5 399 L162 398.5 C160.500 392 160.300 388 160.500 385 C160 368 172 358 187.5 358 C199 358 206 364 209.5 371.5 L220 397.5 C232 397 240 397 246 397.5 C270 398 300 400 330 403 C400 409 470 417 520 419 C580 419 620 414 662 410 L662 497 L-2 497Z" fill="#000"/><text x="105.6" y="235.3" font-size="48.2" font-weight="bold" fill="#120a05" textLength="453.4" lengthAdjust="spacingAndGlyphs" stroke="#120a05" stroke-width="1.6">A PEEK AT HALLOWEEN</text><text x="90.1" y="271.5" font-size="19.5" font-weight="normal" fill="#5a3212" textLength="489.6" lengthAdjust="spacingAndGlyphs" >An Infographic Presentation by Presenter Media</text></svg><div class="a" style="left:25px;top:278px;width:123px;height:94px;background:#c8451f"></div><div class="a" style="left:28px;top:281px;width:117px;height:88px;background:#fff"></div><svg class="a" style="left:29px;top:282px" width="115" height="86" viewBox="0 0 660 493.6"><defs>
<radialGradient id="t1bg" gradientUnits="userSpaceOnUse" cx="325" cy="250" r="272" gradientTransform="translate(325 250) scale(1 1.21) translate(-325 -250)">
<stop offset="0" stop-color="#fbb034"/><stop offset="0.47" stop-color="#f9a11c"/><stop offset="0.667" stop-color="#f7901e"/><stop offset="0.765" stop-color="#f47b20"/><stop offset="0.86" stop-color="#f36c22"/><stop offset="1" stop-color="#f15a24"/>
</radialGradient>
<radialGradient id="t1mo" gradientUnits="userSpaceOnUse" cx="365" cy="262" r="215">
<stop offset="0" stop-color="#feef90"/><stop offset="0.3" stop-color="#fee988"/><stop offset="0.6" stop-color="#fdde84" stop-opacity="0.85"/><stop offset="0.85" stop-color="#fcd58c" stop-opacity="0.35"/><stop offset="1" stop-color="#fbd3a0" stop-opacity="0"/>
</radialGradient>
<linearGradient id="t1mv" gradientUnits="userSpaceOnUse" x1="360" y1="285" x2="295" y2="500">
<stop offset="0" stop-color="#f6923a" stop-opacity="0"/><stop offset="0.4" stop-color="#f6923a" stop-opacity="0.18"/><stop offset="0.75" stop-color="#f68e36" stop-opacity="0.42"/><stop offset="1" stop-color="#f58a32" stop-opacity="0.62"/>
</linearGradient>
<filter id="t1bl" x="-5%" y="-5%" width="110%" height="110%"><feGaussianBlur stdDeviation="1.2"/></filter>
<filter id="t1tx" x="0" y="0" width="100%" height="100%"><feTurbulence type="fractalNoise" baseFrequency="0.035" numOctaves="3" seed="4" result="n"/><feColorMatrix in="n" type="matrix" values="0 0 0 0 0.96  0 0 0 0 0.62  0 0 0 0 0.25  0.9 0.9 0 0 -0.72" result="c"/><feComposite in="c" in2="SourceGraphic" operator="in"/></filter>
</defs><rect x="0" y="0" width="660" height="495" fill="url(#t1bg)"/><g filter="url(#t1bl)"><circle cx="321.6" cy="301.3" r="198.7" fill="#fbd2a2"/><circle cx="321.6" cy="301.3" r="198.7" fill="url(#t1mo)"/><circle cx="321.6" cy="301.3" r="198.7" fill="url(#t1mv)"/></g><circle cx="321.6" cy="301.3" r="197" fill="#000" filter="url(#t1tx)"/><g opacity="0.8" fill="none" stroke="#0b0502" stroke-linecap="round" stroke-linejoin="round"><path d="M-2.0 203.8 L1.7 202.6 L7.1 201.0M7.1 201.0 L13.2 199.1 L19.1 197.0M-2.0 252.3 L0.6 251.7 L4.3 250.9M4.3 250.9 L8.5 250.0 L12.6 249.0 L16.0 247.9" stroke-width="7.5"/><path d="M19.1 197.0 L24.0 194.8 L27.7 192.2M16.0 247.9 L18.5 246.8 L20.7 245.7 L22.6 244.5" stroke-width="7.0"/><path d="M27.7 192.2 L31.1 189.3 L33.9 186.3M33.9 186.3 L36.2 183.6 L37.9 181.8M22.6 244.5 L24.3 243.3 L26.0 241.9M26.0 241.9 L27.3 240.4 L28.5 238.7" stroke-width="6.5"/><path d="M28.5 238.7 L29.5 236.9 L30.6 235.3 L31.9 233.9" stroke-width="6.0"/><path d="M37.9 181.8 L38.4 181.1 L39.1 180.2M37.9 181.8 L39.0 179.3 L40.4 175.6M40.4 175.6 L42.1 171.5 L43.7 167.3M31.9 233.9 L33.8 232.8 L36.1 231.9 L38.5 231.1M38.5 231.1 L40.5 230.4 L41.9 229.9" stroke-width="5.5"/><path d="M43.7 167.3 L44.9 163.8 L45.8 160.9M45.8 160.9 L46.6 158.0 L47.1 155.5M-2.0 158.8 L-0.5 158.0 L1.5 156.8 L3.9 155.3 L6.2 153.7" stroke-width="5.0"/><path d="M47.1 155.5 L47.6 153.4 L47.9 151.9M6.2 153.7 L8.0 151.9 L9.4 149.8 L10.5 147.6 L11.5 145.2 L12.1 142.6M41.9 229.9 L42.7 229.5 L43.7 228.9M0.0 301.8 L0.4 303.6 L1.0 306.0" stroke-width="4.5"/><path d="M39.1 180.2 L39.7 179.2 L40.3 178.2M37.9 181.8 L41.0 182.3 L45.2 182.9M47.9 151.9 L47.9 151.1 L47.9 150.1M12.1 142.6 L12.4 139.9 L12.1 136.9 L11.3 133.7 L10.3 130.3M41.9 229.9 L44.3 230.5 L47.7 231.2M47.7 231.2 L51.7 232.0 L55.9 232.9 L59.9 233.9M26.0 241.9 L27.9 244.0 L30.7 246.9M-2.0 288.8 L-0.3 287.9 L2.1 286.6M1.0 306.0 L1.8 308.9 L2.7 311.6 L4.0 313.8" stroke-width="4.0"/><path d="M45.2 182.9 L50.2 183.7 L55.3 184.7M47.9 151.9 L49.6 149.9 L51.9 147.1M44.9 163.8 L46.9 162.7 L49.7 161.1 L53.0 159.2M43.7 228.9 L44.7 228.2 L45.6 227.4M59.9 233.9 L63.8 235.0 L67.9 236.1 L72.1 237.3M30.7 246.9 L34.0 250.2 L37.2 253.4 L39.9 255.9M2.1 286.6 L4.9 285.1 L7.7 283.4M4.0 313.8 L5.5 315.5 L7.4 316.8 L9.4 318.0" stroke-width="3.5"/><path d="M40.3 178.2 L40.7 177.1 L41.1 176.3M55.3 184.7 L59.9 185.8 L64.0 187.1M47.9 150.1 L47.8 149.1 L47.8 148.0M47.9 151.9 L46.9 150.2 L45.5 147.9M51.9 147.1 L54.7 143.9 L57.4 140.6M53.0 159.2 L56.5 157.5 L59.9 156.3 L63.4 155.5M63.4 155.5 L67.3 154.9 L71.1 154.7 L74.7 154.6M10.3 130.3 L9.2 127.0 L8.4 123.9 L7.7 120.9 L7.0 117.9 L6.5 115.0M24.0 196.0 L26.1 197.1 L29.0 198.8M29.0 198.8 L32.5 200.7 L36.2 202.5 L39.9 204.0M72.1 237.3 L76.1 238.6 L79.9 239.9M31.9 233.9 L31.6 232.0 L31.1 229.2M39.9 255.9 L42.0 257.7 L43.7 259.3 L45.4 260.5M7.7 283.4 L10.0 281.9 L11.9 280.3M9.4 318.0 L11.6 319.0 L14.0 319.8" stroke-width="3.0"/><path d="M64.0 187.1 L67.8 188.7 L71.7 190.4 L75.7 192.1M45.5 147.9 L43.8 145.2 L42.2 142.5M42.2 142.5 L40.9 139.9 L40.0 137.5M57.4 140.6 L59.9 137.9 L62.0 135.6M62.0 135.6 L64.0 133.5 L66.0 131.5 L67.9 129.6M74.7 154.6 L77.9 154.9 L80.4 155.6 L82.3 156.7M59.9 185.0 L61.4 183.5 L63.5 181.3M63.5 181.3 L66.1 178.8 L68.9 176.5M6.5 115.0 L6.1 112.3 L6.0 109.9 L6.2 107.9 L6.6 106.1M8.0 151.9 L9.6 152.8 L11.8 154.1M-2.0 180.8 L-0.2 178.9 L2.4 176.1M39.9 204.0 L43.7 205.1 L47.6 206.2 L51.7 207.0M51.7 207.0 L55.8 207.6 L59.9 208.0M45.6 227.4 L46.5 226.6 L47.2 226.0M79.9 239.9 L83.5 241.5 L87.1 243.2M31.1 229.2 L30.6 225.9 L30.1 222.7M41.9 229.9 L43.9 228.8 L46.6 227.1M46.6 227.1 L49.8 225.2 L53.0 223.4M59.9 233.9 L62.7 234.0 L66.6 234.0M45.4 260.5 L47.3 261.3 L49.9 261.9M49.9 261.9 L53.3 262.0 L57.1 261.6M39.9 255.9 L40.5 258.4 L41.2 261.9M41.2 261.9 L42.1 266.0 L43.1 270.1M11.9 280.3 L13.6 278.6 L15.2 276.9 L16.7 275.3M14.0 319.8 L16.6 320.5 L19.5 320.9" stroke-width="2.5"/><path d="M75.7 192.1 L79.9 193.8 L84.8 195.5M45.2 182.9 L46.0 183.9 L47.0 185.3M43.7 167.3 L44.4 167.2 L45.5 167.0M47.6 153.4 L47.4 152.4 L47.2 150.9M47.8 148.0 L47.8 147.0 L47.8 146.3M40.0 137.5 L39.1 135.1 L38.4 132.7 L37.8 130.3M67.9 129.6 L69.9 127.9 L72.1 126.2M51.9 145.9 L51.5 144.0 L51.0 141.5M51.0 141.5 L50.4 138.4 L50.0 135.2M82.3 156.7 L84.1 158.0 L85.9 159.2 L87.9 159.8 L90.2 159.9M90.2 159.9 L92.8 159.6 L95.5 159.0 L97.9 158.4M71.9 155.5 L73.0 154.4 L74.5 153.0M68.9 176.5 L71.9 174.8 L75.1 173.8M6.6 106.1 L7.2 104.6 L8.1 103.2 L9.2 101.9 L10.7 101.1M6.2 153.7 L6.1 152.4 L6.1 150.5M12.4 139.9 L13.4 137.6 L14.8 134.3M14.8 134.3 L16.5 130.5 L18.3 126.9M11.8 154.1 L14.4 155.6 L17.2 156.9M2.4 176.1 L5.4 173.0 L8.7 170.1M59.9 208.0 L63.8 208.0 L67.7 207.7M59.9 208.0 L62.7 208.9 L66.6 210.3M87.1 243.2 L90.4 244.9 L93.4 246.5 L95.8 247.9M30.1 222.7 L30.0 220.0 L30.1 217.5M53.0 223.4 L55.9 222.0 L58.5 220.8M66.6 234.0 L71.2 234.1 L75.8 234.1M75.8 234.1 L79.9 233.9 L83.4 233.6M57.1 261.6 L61.3 261.0 L65.7 260.4 L69.9 259.9M43.1 270.1 L43.9 273.9 L44.8 277.2M49.9 261.9 L51.3 263.6 L53.3 266.0M53.3 266.0 L55.5 268.8 L57.8 271.5M16.7 275.3 L18.0 273.9 L19.2 272.7M10.0 281.9 L11.4 282.1 L13.3 282.5M13.3 282.5 L15.6 283.0 L17.9 283.4M19.5 320.9 L22.6 321.2 L25.5 321.5 L28.0 321.8M1.8 308.9 L2.5 310.1 L3.5 311.8M12.0 318.8 L12.4 317.2 L12.8 314.9M12.8 314.9 L13.5 312.2 L14.5 309.7" stroke-width="2.0"/><path d="M84.8 195.5 L90.3 197.4 L95.8 199.2M95.8 199.2 L100.5 200.7 L103.8 201.8M47.0 185.3 L48.0 186.7 L48.9 188.1M45.5 167.0 L46.5 166.6 L47.5 166.1M47.2 150.9 L47.0 149.5 L46.6 148.1M37.8 130.3 L37.3 127.9 L37.0 125.4M37.0 125.4 L36.7 122.7 L36.5 120.1M72.1 126.2 L74.5 124.6 L76.8 123.1M54.7 143.9 L55.9 143.2 L57.6 142.3M50.0 135.2 L49.9 131.9 L50.4 128.3M97.9 158.4 L99.8 157.8 L101.4 157.4 L102.6 157.0M53.0 159.2 L54.2 159.3 L55.9 159.4M74.5 153.0 L76.3 151.3 L78.1 149.5M78.1 149.5 L79.9 147.9 L81.5 146.2M81.5 146.2 L83.2 144.3 L84.9 142.5 L86.5 141.0M75.1 173.8 L78.6 173.1 L82.3 172.8 L86.1 172.7M86.1 172.7 L89.9 172.8 L93.9 173.4M10.7 101.1 L12.6 100.7 L14.7 100.4 L16.6 99.6 L18.0 97.9 L18.8 95.0M6.1 150.5 L6.2 148.6 L6.5 146.9M6.5 146.9 L7.0 145.3 L7.4 143.6 L7.5 141.8M9.2 127.0 L10.2 126.3 L11.6 125.2M18.3 126.9 L20.0 123.9 L21.7 121.6M17.2 156.9 L20.0 157.8 L22.9 158.2M8.7 170.1 L12.0 167.8 L15.6 166.4M15.6 166.4 L19.7 165.4 L23.9 164.7M9.2 101.9 L8.9 100.2 L8.5 97.7M8.5 97.7 L8.2 94.9 L7.9 92.2M18.0 97.9 L19.1 97.3 L20.7 96.4M20.7 96.4 L22.5 95.5 L24.4 94.6M67.7 207.7 L71.5 207.2 L75.6 206.6 L79.9 206.0M79.9 206.0 L84.9 205.2 L90.7 204.3 L96.4 203.4M66.6 210.3 L71.1 211.9 L75.8 213.2M75.8 213.2 L79.9 214.0 L83.7 214.0M95.8 247.9 L97.6 249.1 L98.9 250.1 L99.7 251.0M47.7 231.2 L48.5 232.3 L49.7 234.0M49.7 234.0 L50.7 235.7 L51.7 237.4M59.9 233.9 L61.0 233.5 L62.5 232.8M30.1 217.5 L30.6 215.2 L31.1 213.1M58.5 220.8 L61.1 219.8 L63.6 219.0 L65.9 218.4M65.9 218.4 L67.9 218.0 L69.6 217.9M83.4 233.6 L86.9 233.1 L90.2 232.6 L93.2 232.2M93.2 232.2 L95.8 231.9 L98.1 232.0M69.9 259.9 L74.4 259.6 L79.2 259.4 L83.9 259.2M34.0 250.2 L34.4 251.8 L35.0 254.0M44.8 277.2 L45.9 280.4 L46.9 283.5 L47.6 286.7M47.6 286.7 L47.9 289.8 L47.6 293.4M57.8 271.5 L59.9 273.9 L61.7 275.9M61.7 275.9 L63.5 277.9 L65.2 279.7 L66.8 281.2M47.9 289.8 L48.7 290.7 L49.9 291.9M49.9 291.9 L51.2 293.2 L52.6 294.6M8.0 249.9 L8.3 248.3 L8.6 246.1M8.6 246.1 L9.1 243.4 L9.6 240.6M19.2 272.7 L20.2 271.6 L21.1 270.7M4.9 285.1 L5.3 284.4 L5.8 283.4M17.9 283.4 L20.0 283.9 L21.9 284.3M4.0 286.9 L4.5 287.6 L5.2 288.6M5.2 288.6 L6.1 289.8 L7.0 291.0M28.0 321.8 L30.1 322.1 L32.1 322.5 L33.9 322.8M3.5 311.8 L4.7 313.4 L6.1 314.7M11.6 319.0 L12.8 318.5 L14.5 318.0M14.5 309.7 L16.0 307.8 L18.4 306.5" stroke-width="1.5"/><path d="M48.9 188.1 L49.8 189.6 L50.4 190.7M67.8 188.7 L67.8 190.4 L67.7 192.8M67.7 192.8 L67.9 195.1 L68.3 197.4M79.9 193.8 L80.5 195.1 L81.4 197.0M103.8 201.8 L104.7 202.2 L105.9 202.8M47.5 166.1 L48.4 165.6 L49.0 165.2M46.6 148.1 L46.2 146.6 L45.9 145.7M36.5 120.1 L36.4 117.9 L36.3 116.3M43.8 145.2 L43.8 144.2 L43.9 142.8M76.8 123.1 L78.9 121.8 L80.3 120.9M57.6 142.3 L59.4 141.4 L61.2 140.6M61.2 140.6 L63.0 139.8 L64.2 139.3M62.0 135.6 L62.2 134.4 L62.5 132.7M50.4 128.3 L51.3 124.1 L52.3 120.0M52.3 120.0 L53.3 116.4 L53.9 113.9M102.6 157.0 L103.5 156.5 L104.3 156.1 L104.8 155.9M55.9 159.4 L57.6 159.6 L59.3 160.0M59.3 160.0 L60.9 160.4 L62.1 160.8M86.5 141.0 L87.9 139.9 L89.1 139.3M89.1 139.3 L90.3 139.2 L91.4 139.2M91.4 139.2 L92.2 139.4 L92.9 139.5M93.9 173.4 L98.3 174.4 L102.6 175.6M102.6 175.6 L106.2 176.7 L108.8 177.4M66.1 178.8 L66.1 177.3 L66.3 175.2M66.3 175.2 L66.5 173.0 L67.1 171.0M18.8 95.0 L19.4 90.9 L19.6 86.5 L19.8 82.6 L20.0 80.0M7.5 141.8 L7.5 139.9 L7.5 138.5M11.6 125.2 L13.1 124.3 L14.6 123.5M7.0 117.9 L6.0 117.4 L4.6 116.7M4.6 116.7 L3.2 116.0 L1.8 115.3M7.2 104.6 L6.0 103.5 L4.2 102.0M21.7 121.6 L23.7 119.6 L25.6 117.9M25.6 117.9 L27.2 116.5 L28.4 115.5M22.9 158.2 L26.2 158.3 L29.5 158.1M29.5 158.1 L32.4 157.9 L34.3 157.8M11.8 154.1 L12.6 153.7 L13.9 153.1M23.9 164.7 L27.4 164.2 L30.0 163.8M5.4 173.0 L5.2 172.3 L4.9 171.2M7.9 92.2 L8.0 90.0 L8.5 88.3M8.5 88.3 L9.4 86.8 L10.4 85.6M10.4 85.6 L11.4 84.7 L12.0 84.0M24.4 94.6 L26.0 94.0 L27.4 93.7M27.4 93.7 L28.8 93.7 L30.1 93.8M30.1 93.8 L31.2 93.9 L31.9 94.0M96.4 203.4 L101.4 202.6 L104.8 202.0M43.7 205.1 L45.0 204.9 L46.9 204.5M46.9 204.5 L48.8 204.0 L50.5 203.7M55.8 207.6 L57.1 208.7 L58.8 210.2M58.8 210.2 L60.6 211.7 L62.4 213.2M71.5 207.2 L72.6 206.4 L74.3 205.2M83.7 214.0 L87.7 213.6 L91.4 213.0M91.4 213.0 L94.6 212.4 L96.8 212.0M99.7 251.0 L100.3 251.8 L100.8 252.3M51.7 237.4 L52.5 239.3 L53.0 240.6M62.5 232.8 L64.0 232.0 L65.4 231.3M67.9 236.1 L69.2 235.6 L71.0 234.9M71.0 234.9 L72.7 234.0 L74.2 232.9M31.1 213.1 L31.6 211.3 L31.9 210.0M30.6 225.9 L30.1 225.5 L29.3 224.8M29.3 224.8 L28.6 224.2 L27.8 223.6M69.6 217.9 L71.2 218.0 L72.5 218.4M72.5 218.4 L73.5 218.7 L74.3 219.0M49.8 225.2 L51.1 225.7 L52.9 226.3M98.1 232.0 L100.2 232.2 L101.8 232.5M101.8 232.5 L103.2 232.8 L104.2 232.9M83.9 259.2 L88.0 259.0 L90.9 258.9M35.0 254.0 L35.5 256.3 L35.8 258.6M35.8 258.6 L36.0 260.9 L36.1 262.5M43.7 259.3 L43.0 260.9 L41.9 263.3M41.9 263.3 L40.7 265.5 L39.1 267.5M57.1 261.6 L58.4 260.5 L60.1 258.9M47.6 293.4 L46.9 297.2 L45.9 300.8M45.9 300.8 L44.9 304.0 L44.3 306.2M42.1 266.0 L43.4 266.8 L45.2 268.1M45.2 268.1 L46.9 269.4 L48.5 270.9M44.8 277.2 L44.4 278.3 L43.9 279.8M66.8 281.2 L68.3 282.3 L69.7 282.7M69.7 282.7 L71.1 282.7 L72.4 282.4M72.4 282.4 L73.5 282.1 L74.3 281.9M52.6 294.6 L53.9 295.8 L55.2 297.0M55.2 297.0 L56.6 298.1 L57.9 299.2M57.9 299.2 L59.1 300.2 L59.9 300.8M9.6 240.6 L10.0 237.9 L10.4 235.0M10.4 235.0 L10.9 231.8 L11.3 228.6M11.3 228.6 L11.7 225.9 L12.0 224.0M21.1 270.7 L21.8 270.0 L22.4 269.5M5.8 283.4 L6.2 282.5 L6.4 281.4M6.4 281.4 L6.5 280.3 L6.5 279.6M11.9 280.3 L12.5 280.0 L13.5 279.6M13.5 279.6 L14.4 279.3 L15.4 279.2M21.9 284.3 L23.8 284.8 L25.7 285.2M25.7 285.2 L27.2 285.6 L28.4 285.9M7.0 291.0 L8.0 291.8 L9.2 292.5M9.2 292.5 L10.5 293.0 L11.9 293.3M11.9 293.3 L13.1 293.6 L14.0 293.8M33.9 322.8 L35.3 323.0 L36.3 323.2M6.1 314.7 L7.6 316.0 L8.7 316.9M14.5 318.0 L16.2 317.5 L17.9 317.3M18.4 306.5 L21.5 305.5 L24.9 304.8M24.9 304.8 L27.9 304.3 L30.0 303.8" stroke-width="1.0"/><path d="M68.3 197.4 L68.9 199.7 L69.3 201.3M81.4 197.0 L82.1 199.0 L82.6 201.0M82.6 201.0 L82.8 203.1 L83.0 204.6M105.9 202.8 L107.2 203.4 L108.5 203.8M108.5 203.8 L109.8 204.3 L110.7 204.6M43.9 142.8 L44.1 141.4 L44.4 140.0M44.4 140.0 L44.8 138.6 L45.2 137.6M62.5 132.7 L62.7 131.0 L62.5 129.3M62.5 129.3 L62.2 127.6 L61.9 126.4M67.1 171.0 L67.8 169.0 L68.3 167.6M14.6 123.5 L16.2 122.8 L17.4 122.3M1.8 115.3 L0.4 114.6 L-0.6 114.1M4.2 102.0 L2.5 100.4 L1.2 98.5M1.2 98.5 L0.0 96.5 L-0.8 95.1M13.9 153.1 L15.1 152.5 L16.3 152.0M16.3 152.0 L17.6 151.6 L18.5 151.3M4.9 171.2 L4.5 170.2 L3.9 169.3M3.9 169.3 L3.3 168.4 L2.8 167.8M50.5 203.7 L52.2 203.2 L53.8 202.7 L55.6 201.9M55.6 201.9 L57.3 200.9 L58.5 200.3M62.4 213.2 L64.2 214.7 L65.4 215.7M74.3 205.2 L75.9 204.2 L77.7 203.4M77.7 203.4 L79.6 202.7 L80.9 202.2M65.4 231.3 L66.8 230.4 L67.8 229.8M74.2 232.9 L75.7 231.6 L76.7 230.7M27.8 223.6 L26.9 223.1 L26.3 222.8M52.9 226.3 L54.6 227.0 L56.2 228.0M56.2 228.0 L57.8 229.0 L58.9 229.8M39.1 267.5 L37.4 269.5 L36.2 270.8M60.1 258.9 L61.7 257.2 L63.1 255.3M63.1 255.3 L64.3 253.3 L65.1 251.9M48.5 270.9 L50.1 272.4 L51.2 273.4M43.9 279.8 L43.3 281.3 L42.8 282.9M42.8 282.9 L42.2 284.4 L41.9 285.5M15.4 279.2 L16.4 279.2 L17.1 279.1M17.9 317.3 L19.7 317.2 L20.9 317.1" stroke-width="0.5"/></g><g opacity="0.8" fill="none" stroke="#0b0502" stroke-linecap="round" stroke-linejoin="round"><path d="M662.8 257.5 L661.0 256.5 L658.3 255.2" stroke-width="9.5"/><path d="M658.3 255.2 L655.3 253.6 L652.3 251.8" stroke-width="8.5"/><path d="M652.3 251.8 L649.8 249.9 L647.9 247.8" stroke-width="8.0"/><path d="M647.9 247.8 L646.3 245.3 L644.8 242.8 L643.4 240.3" stroke-width="7.5"/><path d="M661.8 188.8 L645.8 181.8M643.4 240.3 L641.9 237.9 L640.1 235.6" stroke-width="7.0"/><path d="M640.1 235.6 L638.3 233.3 L636.5 231.1" stroke-width="6.5"/><path d="M645.8 181.8 L645.3 181.5 L644.6 180.9M645.8 181.8 L645.0 179.4 L643.9 176.0M636.5 231.1 L635.0 229.3 L633.9 227.9M649.8 249.9 L648.1 250.4 L645.7 250.9" stroke-width="6.0"/><path d="M643.9 176.0 L642.5 172.0 L641.3 167.8M641.3 167.8 L640.3 163.8 L639.5 159.7M645.7 250.9 L642.9 251.7 L640.2 252.7M640.2 252.7 L637.9 253.9 L635.9 255.5" stroke-width="5.5"/><path d="M645.8 181.8 L643.7 182.1 L640.8 182.6 L637.3 183.1M639.5 159.7 L639.0 155.0 L638.5 150.5M638.5 150.5 L638.1 146.6 L637.9 143.9M633.9 227.9 L633.2 227.4 L632.4 226.7M633.9 227.9 L632.2 226.2 L629.9 223.8 L627.3 221.0M635.9 255.5 L634.2 257.3 L632.6 259.3 L631.2 261.5" stroke-width="5.0"/><path d="M644.6 180.9 L643.9 180.4 L643.2 179.8M637.3 183.1 L633.6 183.5 L629.9 183.8 L626.1 183.9M627.3 221.0 L624.5 218.2 L621.9 216.0 L619.5 214.2M631.2 261.5 L629.9 263.9 L628.8 266.7" stroke-width="4.5"/><path d="M626.1 183.9 L622.2 183.9 L618.1 183.8 L614.0 183.7M637.9 143.9 L637.6 143.2 L637.2 142.1M637.9 143.9 L638.1 141.9 L638.3 139.2 L638.7 136.0M637.9 143.9 L636.7 141.9 L635.1 139.1 L633.3 135.9 L631.5 132.7M640.3 163.8 L638.9 162.1 L636.9 159.5 L634.6 156.7M632.4 226.7 L631.6 225.9 L630.9 225.0M619.5 214.2 L617.2 212.6 L614.8 211.2 L612.4 210.0M633.9 227.9 L631.6 228.2 L628.4 228.4M628.8 266.7 L627.8 269.9 L627.0 273.1M627.0 273.1 L626.4 275.9 L625.9 277.9" stroke-width="4.0"/><path d="M638.7 136.0 L639.2 132.8 L639.9 129.9 L640.8 127.4M631.5 132.7 L629.9 129.9 L628.5 127.6 L627.1 125.6 L625.9 123.7M634.6 156.7 L632.2 153.9 L629.9 151.9 L627.6 150.5M629.9 183.8 L628.0 182.1 L625.3 179.6 L622.2 176.8M612.4 210.0 L609.9 209.0 L607.2 208.0 L604.5 207.3M628.4 228.4 L624.8 228.8 L621.1 229.3 L617.9 229.9M625.9 277.9 L625.6 278.6 L625.3 279.7M629.9 263.9 L627.7 264.5 L624.5 265.5" stroke-width="3.5"/><path d="M643.2 179.8 L642.6 179.1 L642.2 178.6M614.0 183.7 L609.9 183.8 L605.9 184.0 L601.9 184.3M637.2 142.1 L636.8 141.1 L636.5 140.0M640.8 127.4 L642.1 125.1 L643.5 122.8 L644.8 120.4M625.9 123.7 L624.8 121.8 L623.9 119.9 L623.1 117.8M627.6 150.5 L625.2 149.5 L622.8 148.9 L620.3 148.3M622.2 176.8 L618.9 174.0 L615.9 171.8 L613.1 170.2M613.1 170.2 L610.2 168.8 L607.4 167.7 L604.6 166.7M661.8 152.9 L660.7 150.9 L659.1 148.1M661.8 200.4 L659.3 200.1 L655.7 199.6M604.5 207.3 L601.6 206.6 L598.8 206.2 L595.9 206.0 L593.1 206.0M617.9 229.9 L615.3 230.9 L613.0 232.2 L610.8 233.6M625.9 277.9 L624.5 279.2 L622.4 281.1M622.4 281.1 L620.1 283.4 L617.8 285.7 L615.9 287.8M624.5 265.5 L620.9 266.5 L617.2 267.4" stroke-width="3.0"/><path d="M601.9 184.3 L597.9 184.6 L593.9 185.1 L589.9 185.8 L585.8 186.8M639.0 155.0 L639.8 154.3 L641.1 153.3M644.8 120.4 L645.8 117.9 L646.7 115.2 L647.5 112.4M647.5 112.4 L648.1 109.5 L648.5 106.6 L648.8 103.9 L648.9 101.4M623.1 117.8 L622.3 115.7 L621.8 113.6 L621.6 111.7 L621.9 109.9M621.9 109.9 L622.9 108.5 L624.5 107.4 L626.3 106.4 L628.2 105.3M623.9 119.9 L622.5 120.0 L620.4 120.3M620.3 148.3 L617.9 147.9 L615.5 147.5 L613.1 147.4M613.1 147.4 L610.7 147.4 L608.3 147.3 L605.9 146.9 L603.4 146.1M604.6 166.7 L601.9 165.8 L599.4 165.3 L596.9 165.0M659.1 148.1 L657.2 144.9 L655.4 142.0M655.7 199.6 L651.6 199.1 L647.5 198.6M647.5 198.6 L643.8 198.4 L640.8 198.5M630.9 225.0 L630.2 224.1 L629.8 223.4M593.1 206.0 L590.4 206.2 L587.6 206.6 L584.8 207.2M610.8 233.6 L608.5 234.9 L605.9 235.9M605.9 235.9 L602.9 236.5 L599.7 236.8M641.9 237.9 L642.7 236.3 L643.9 234.0M625.3 279.7 L624.9 280.7 L624.5 281.8M615.9 287.8 L614.4 289.8 L613.1 291.8 L612.0 293.8M612.0 293.8 L610.9 295.8 L609.9 297.8M617.2 267.4 L613.9 267.9 L611.0 267.8M611.0 267.8 L608.2 267.5 L605.4 266.9 L602.7 266.3M661.8 293.8 L659.6 293.5 L656.4 292.9" stroke-width="2.5"/><path d="M585.8 186.8 L581.4 188.1 L577.1 189.6 L573.2 190.8M637.3 183.1 L636.0 182.6 L634.1 181.9M636.5 140.0 L636.1 139.0 L635.9 138.3M648.9 101.4 L648.8 98.9 L648.6 96.4 L648.2 94.1M628.2 105.3 L629.9 103.9 L631.3 102.1 L632.6 100.0M620.4 120.3 L618.1 120.5 L615.8 120.4M615.8 120.4 L613.9 119.9 L612.5 118.8M613.9 119.9 L613.5 121.4 L613.1 123.7M613.1 123.7 L612.4 126.1 L611.4 128.4M603.4 146.1 L600.8 145.2 L598.2 144.1 L595.8 142.9M629.9 151.9 L628.5 152.8 L626.6 154.2M596.9 165.0 L594.5 164.9 L592.2 164.6 L589.9 163.8 L587.7 162.6M587.7 162.6 L585.6 160.9 L583.6 159.0 L581.7 157.3M601.9 165.8 L601.0 164.4 L599.8 162.4M589.9 163.8 L588.3 165.0 L585.9 166.6M655.4 142.0 L653.8 139.9 L652.6 138.7M640.8 198.5 L637.8 198.7 L635.1 199.1 L632.4 199.4M621.9 216.0 L620.2 216.3 L617.9 216.7M599.7 236.8 L596.4 237.0 L593.1 237.3 L589.9 237.9M643.9 234.0 L645.2 231.3 L646.1 228.5M627.8 269.9 L626.9 270.3 L625.7 271.0M609.9 297.8 L609.0 299.9 L608.4 301.9M602.7 266.3 L599.9 265.9 L596.8 265.6M609.9 297.8 L608.6 297.6 L606.6 297.4M656.4 292.9 L652.7 292.3 L649.0 291.9M661.8 319.8 L660.1 319.6 L657.7 319.4M657.7 319.4 L654.9 319.1 L652.2 318.9" stroke-width="2.0"/><path d="M573.2 190.8 L570.0 191.8 L567.4 192.4 L565.4 192.7M634.1 181.9 L632.3 181.1 L630.5 180.1M626.1 183.9 L625.5 185.1 L624.5 186.7M624.5 186.7 L623.5 188.3 L622.6 189.7M609.9 183.8 L608.6 183.4 L606.7 182.8M597.9 184.6 L597.3 185.8 L596.4 187.4M641.1 153.3 L642.2 152.2 L643.2 151.0M648.2 94.1 L647.8 92.0 L647.3 89.8 L646.6 87.7M642.1 125.1 L643.0 124.7 L644.4 124.3M632.6 100.0 L633.9 97.8 L635.0 95.7 L635.9 94.0 L636.4 92.6M628.5 127.6 L628.6 126.5 L628.8 125.0M612.5 118.8 L611.2 117.2 L610.1 115.4 L609.1 113.5M609.1 113.5 L607.9 111.9 L606.6 110.4M611.4 128.4 L609.9 129.9 L607.7 130.5M607.7 130.5 L604.8 130.7 L601.7 130.4 L598.6 130.1M621.9 109.9 L621.2 108.8 L620.3 107.3M620.3 107.3 L619.2 105.5 L618.4 103.7M595.8 142.9 L593.9 141.9 L592.5 140.8 L591.4 139.6M626.6 154.2 L624.4 155.7 L622.0 157.0M622.0 157.0 L619.9 157.8 L617.7 158.1M581.7 157.3 L580.0 155.9 L578.4 154.7 L577.0 153.8M622.2 176.8 L622.1 175.5 L622.2 173.7M599.8 162.4 L598.3 160.0 L597.0 157.8M597.0 157.8 L595.9 155.9 L595.2 154.3M585.9 166.6 L583.2 168.4 L580.4 170.2M580.4 170.2 L578.0 171.8 L575.7 173.2M648.8 103.9 L649.6 102.5 L650.6 100.5M650.6 100.5 L651.7 98.2 L652.9 95.9M652.6 138.7 L651.4 138.0 L650.3 137.8M661.8 129.9 L657.8 121.9M632.4 199.4 L629.9 199.6 L627.3 199.5M627.3 199.5 L624.7 199.4 L622.3 199.2M584.8 207.2 L581.9 208.0 L578.9 209.1 L575.5 210.5M617.9 216.7 L615.6 217.2 L613.3 217.8M609.9 209.0 L608.4 209.7 L606.2 210.6M589.9 237.9 L586.7 239.0 L583.4 240.5 L580.2 242.0M646.1 228.5 L646.2 225.9 L645.3 223.4M645.3 223.4 L643.4 220.6 L641.2 217.9M625.7 271.0 L624.5 271.6 L623.2 272.1M624.5 281.8 L624.2 282.8 L623.9 283.6M608.4 301.9 L607.7 304.0 L606.9 305.9 L605.9 307.8M605.9 307.8 L604.4 309.7 L602.6 311.5 L600.7 313.3M596.8 265.6 L593.5 265.4 L590.3 265.3M606.6 297.4 L604.4 297.0 L602.1 296.5M602.1 296.5 L599.9 295.8 L597.7 294.8M649.0 291.9 L645.8 291.8 L643.0 292.3M643.0 292.3 L640.2 293.2 L637.6 294.2M652.2 318.9 L649.8 318.8 L647.9 318.9M661.8 273.9 L649.8 271.9M661.8 329.8 L653.8 327.8M658.8 218.0 L658.3 216.8 L657.6 215.2M657.6 215.2 L656.8 213.4 L656.2 211.6" stroke-width="1.5"/><path d="M565.4 192.7 L563.8 192.8 L562.5 192.9 L561.6 193.0M630.5 180.1 L628.9 179.0 L627.7 178.3M622.6 189.7 L621.6 191.1 L620.5 192.4 L619.1 193.7M619.1 193.7 L617.6 194.9 L616.5 195.7M620.5 192.4 L619.7 192.5 L618.5 192.6M606.7 182.8 L604.9 182.2 L603.0 181.6M596.4 187.4 L595.7 189.1 L595.1 190.9M585.8 186.8 L585.2 187.9 L584.3 189.4M643.2 151.0 L644.2 149.6 L644.8 148.7M646.6 87.7 L645.9 85.8 L645.3 84.1 L644.8 83.0M644.4 124.3 L645.7 123.9 L647.1 123.7M646.7 115.2 L646.3 114.1 L645.6 112.5M636.4 92.6 L636.7 91.4 L636.9 90.4 L637.0 89.6 L637.1 89.0M628.8 125.0 L629.1 123.4 L629.6 121.9M623.1 117.8 L621.8 117.4 L620.0 116.8M620.0 116.8 L618.3 116.0 L616.8 114.9M606.6 110.4 L605.1 108.9 L603.6 107.6M603.6 107.6 L602.4 106.4 L601.5 105.5M615.8 120.4 L615.2 119.5 L614.4 118.2M598.6 130.1 L595.9 129.9 L593.5 129.7M593.5 129.7 L591.2 129.5 L589.0 129.3M589.0 129.3 L587.2 129.0 L585.9 128.9M612.4 126.1 L613.3 127.2 L614.5 128.6M618.4 103.7 L617.9 101.9 L617.9 100.2M617.9 100.2 L618.4 98.4 L618.9 96.6M618.9 96.6 L619.5 95.0 L619.9 94.0M591.4 139.6 L590.6 138.5 L590.0 137.6 L589.5 136.9M622.8 148.9 L622.5 147.8 L622.2 146.2M622.2 146.2 L621.8 144.6 L621.3 143.1M610.7 147.4 L609.8 148.2 L608.5 149.4M617.7 158.1 L615.4 157.9 L613.2 157.5M613.2 157.5 L611.3 157.1 L609.9 156.9M577.0 153.8 L575.7 153.0 L574.7 152.3 L574.0 151.9M622.2 173.7 L622.3 171.9 L622.8 170.1M613.1 170.2 L611.7 170.1 L609.8 170.0M609.8 170.0 L607.9 169.7 L606.0 169.3M604.6 166.7 L604.3 165.6 L604.0 164.0M604.0 164.0 L603.8 162.4 L603.8 160.8M595.2 154.3 L594.7 152.9 L594.4 151.6M594.4 151.6 L594.1 150.6 L593.9 149.9M575.7 173.2 L573.3 174.7 L571.2 175.9M571.2 175.9 L569.3 177.0 L568.0 177.8M652.9 95.9 L653.8 94.0 L654.6 92.3M654.6 92.3 L655.3 90.6 L655.9 89.1M655.9 89.1 L656.5 87.9 L656.8 87.0M650.3 137.8 L649.5 137.6 L648.8 137.5M657.2 144.9 L657.7 144.4 L658.5 143.6M661.8 80.0 L655.8 76.0M622.3 199.2 L620.3 198.9 L618.9 198.8M655.7 199.6 L655.2 198.9 L654.5 197.9M654.5 197.9 L653.9 196.9 L653.5 195.8M643.8 198.4 L642.9 199.1 L641.6 200.2M575.5 210.5 L572.3 212.1 L569.5 213.4 L567.6 214.4M613.3 217.8 L611.0 218.4 L609.4 218.9M606.2 210.6 L604.0 211.4 L601.7 212.0M580.2 242.0 L577.5 243.4 L575.6 244.3M615.3 230.9 L614.0 230.3 L612.2 229.4M612.2 229.4 L610.3 228.4 L608.5 227.5M602.9 236.5 L601.8 235.8 L600.3 234.7M641.2 217.9 L639.2 215.6 L637.9 214.0M645.2 231.3 L644.6 230.4 L643.7 229.2M623.2 272.1 L621.8 272.5 L620.9 272.7M600.7 313.3 L599.1 314.8 L597.9 315.8M620.1 283.4 L618.6 284.0 L616.6 284.9M616.6 284.9 L614.6 286.0 L612.7 287.2M613.1 291.8 L613.5 292.7 L613.9 293.9M590.3 265.3 L587.5 265.2 L585.5 265.1M611.0 267.8 L610.4 268.4 L609.5 269.2M609.5 269.2 L608.7 270.1 L607.8 270.9M597.7 294.8 L595.3 293.4 L593.0 292.0M593.0 292.0 L591.0 290.7 L589.5 289.8M637.6 294.2 L635.4 295.2 L633.9 295.8M647.9 318.9 L646.0 319.1 L644.3 319.4M644.3 319.4 L642.9 319.6 L641.9 319.8M656.2 211.6 L655.8 210.0 L655.9 208.6M655.9 208.6 L656.4 207.1 L656.9 205.9M656.9 205.9 L657.5 204.8 L657.8 204.0" stroke-width="1.0"/><path d="M618.5 192.6 L617.4 192.6 L616.2 192.5M616.2 192.5 L615.1 192.4 L614.3 192.2M603.0 181.6 L601.1 181.0 L599.8 180.6M595.1 190.9 L594.6 192.7 L594.3 194.0M584.3 189.4 L583.6 190.9 L583.1 192.5M583.1 192.5 L582.8 194.2 L582.5 195.4M647.1 123.7 L648.4 123.5 L649.4 123.3M645.6 112.5 L645.0 110.9 L644.3 109.3M644.3 109.3 L643.6 107.7 L643.1 106.6M629.6 121.9 L630.1 120.4 L630.5 119.3M616.8 114.9 L615.3 113.6 L614.3 112.7M614.4 118.2 L613.6 116.8 L612.8 115.5M612.8 115.5 L612.0 114.2 L611.4 113.2M614.5 128.6 L615.8 130.1 L617.0 131.6M617.0 131.6 L618.2 133.1 L619.0 134.2M621.3 143.1 L620.8 141.6 L620.4 140.5M608.5 149.4 L607.3 150.5 L606.0 151.6M606.0 151.6 L604.6 152.7 L603.7 153.5M622.8 170.1 L623.4 168.4 L623.9 167.2M606.0 169.3 L604.2 168.8 L602.9 168.4M603.8 160.8 L603.9 159.2 L604.0 158.0M658.5 143.6 L659.4 142.8 L660.2 142.1M660.2 142.1 L661.1 141.5 L661.8 141.0M653.5 195.8 L653.1 194.6 L652.9 193.8M641.6 200.2 L640.3 201.2 L639.0 202.2M639.0 202.2 L637.6 203.2 L636.7 203.9M601.7 212.0 L599.4 212.4 L597.8 212.7M608.5 227.5 L606.6 226.7 L605.3 226.0M600.3 234.7 L598.7 233.5 L597.3 232.2M597.3 232.2 L596.0 230.9 L595.1 229.9M643.7 229.2 L642.9 227.9 L642.3 226.5M642.3 226.5 L641.6 225.1 L641.2 224.1M612.7 287.2 L610.9 288.5 L609.6 289.4M613.9 293.9 L614.5 295.1 L615.0 296.3M615.0 296.3 L615.5 297.5 L615.9 298.3M607.8 270.9 L606.9 271.7 L606.3 272.3" stroke-width="0.5"/></g><path d="M-2 415.5 L30 411.5 L28.6 390 A32.8 32 0 0 1 94.2 390 L95.5 404 L102.5 403.5 L104.800 381.500 A26 26 0 0 1 156.800 381.500 L155.5 399 L162 398.5 C160.500 392 160.300 388 160.500 385 C160 368 172 358 187.5 358 C199 358 206 364 209.5 371.5 L220 397.5 C232 397 240 397 246 397.5 C270 398 300 400 330 403 C400 409 470 417 520 419 C580 419 620 414 662 410 L662 497 L-2 497Z" fill="#000"/><text x="116.69999999999999" y="110.60000000000002" font-size="66" font-weight="bold" fill="#7a2a0a" textLength="409.3" lengthAdjust="spacingAndGlyphs" >171 MILLION</text><text x="125" y="136.60000000000002" font-size="17" font-weight="normal" fill="#f1592a" textLength="410.0" lengthAdjust="spacingAndGlyphs" >Americans plan to celebrate Halloween this year</text><rect x="122" y="147" width="409" height="6" fill="#651d0a"/><rect x="122" y="245" width="409" height="6" fill="#651d0a"/><text x="125" y="189.39999999999998" font-size="20" font-weight="normal" fill="#a67c1e" textLength="125.0" lengthAdjust="spacingAndGlyphs" >Spending an</text><text x="125" y="218.7" font-size="28.5" font-weight="normal" fill="#9f7212" textLength="118.5" lengthAdjust="spacingAndGlyphs" >average</text><text x="260.6" y="226.39999999999998" font-size="88" font-weight="bold" fill="#b5480c" textLength="270.2" lengthAdjust="spacingAndGlyphs" >$82.93</text><text x="119.80000000000001" y="331.1" font-size="88" font-weight="bold" fill="#d8401a" textLength="176.4" lengthAdjust="spacingAndGlyphs" >67%</text><text x="316.20000000000005" y="296.1" font-size="25" font-weight="normal" fill="#e8690b" textLength="212.8" lengthAdjust="spacingAndGlyphs" >will be spent on</text><text x="316.20000000000005" y="325.5" font-size="21.5" font-weight="normal" fill="#e8690b" textLength="214.4" lengthAdjust="spacingAndGlyphs" >costumes and candy.</text></svg><div class="a" style="left:27px;top:388px;width:119px;height:90px;background:#fff;border:1px solid #c4c4c4;box-sizing:border-box"></div><svg class="a" style="left:29px;top:390px" width="115" height="86" viewBox="0 0 660 493.6"><defs>
<radialGradient id="t2bg" gradientUnits="userSpaceOnUse" cx="325" cy="250" r="272" gradientTransform="translate(325 250) scale(1 1.21) translate(-325 -250)">
<stop offset="0" stop-color="#fbb034"/><stop offset="0.47" stop-color="#f9a11c"/><stop offset="0.667" stop-color="#f7901e"/><stop offset="0.765" stop-color="#f47b20"/><stop offset="0.86" stop-color="#f36c22"/><stop offset="1" stop-color="#f15a24"/>
</radialGradient>
<radialGradient id="t2mo" gradientUnits="userSpaceOnUse" cx="365" cy="262" r="215">
<stop offset="0" stop-color="#feef90"/><stop offset="0.3" stop-color="#fee988"/><stop offset="0.6" stop-color="#fdde84" stop-opacity="0.85"/><stop offset="0.85" stop-color="#fcd58c" stop-opacity="0.35"/><stop offset="1" stop-color="#fbd3a0" stop-opacity="0"/>
</radialGradient>
<linearGradient id="t2mv" gradientUnits="userSpaceOnUse" x1="360" y1="285" x2="295" y2="500">
<stop offset="0" stop-color="#f6923a" stop-opacity="0"/><stop offset="0.4" stop-color="#f6923a" stop-opacity="0.18"/><stop offset="0.75" stop-color="#f68e36" stop-opacity="0.42"/><stop offset="1" stop-color="#f58a32" stop-opacity="0.62"/>
</linearGradient>
<filter id="t2bl" x="-5%" y="-5%" width="110%" height="110%"><feGaussianBlur stdDeviation="1.2"/></filter>
<filter id="t2tx" x="0" y="0" width="100%" height="100%"><feTurbulence type="fractalNoise" baseFrequency="0.035" numOctaves="3" seed="4" result="n"/><feColorMatrix in="n" type="matrix" values="0 0 0 0 0.96  0 0 0 0 0.62  0 0 0 0 0.25  0.9 0.9 0 0 -0.72" result="c"/><feComposite in="c" in2="SourceGraphic" operator="in"/></filter>
</defs><rect x="0" y="0" width="660" height="495" fill="url(#t2bg)"/><g filter="url(#t2bl)"><circle cx="321.6" cy="301.3" r="198.7" fill="#fbd2a2"/><circle cx="321.6" cy="301.3" r="198.7" fill="url(#t2mo)"/><circle cx="321.6" cy="301.3" r="198.7" fill="url(#t2mv)"/></g><circle cx="321.6" cy="301.3" r="197" fill="#000" filter="url(#t2tx)"/><g opacity="0.8" fill="none" stroke="#0b0502" stroke-linecap="round" stroke-linejoin="round"><path d="M-2.0 203.8 L1.7 202.6 L7.1 201.0M7.1 201.0 L13.2 199.1 L19.1 197.0M-2.0 252.3 L0.6 251.7 L4.3 250.9M4.3 250.9 L8.5 250.0 L12.6 249.0 L16.0 247.9" stroke-width="7.5"/><path d="M19.1 197.0 L24.0 194.8 L27.7 192.2M16.0 247.9 L18.5 246.8 L20.7 245.7 L22.6 244.5" stroke-width="7.0"/><path d="M27.7 192.2 L31.1 189.3 L33.9 186.3M33.9 186.3 L36.2 183.6 L37.9 181.8M22.6 244.5 L24.3 243.3 L26.0 241.9M26.0 241.9 L27.3 240.4 L28.5 238.7" stroke-width="6.5"/><path d="M28.5 238.7 L29.5 236.9 L30.6 235.3 L31.9 233.9" stroke-width="6.0"/><path d="M37.9 181.8 L38.4 181.1 L39.1 180.2M37.9 181.8 L39.0 179.3 L40.4 175.6M40.4 175.6 L42.1 171.5 L43.7 167.3M31.9 233.9 L33.8 232.8 L36.1 231.9 L38.5 231.1M38.5 231.1 L40.5 230.4 L41.9 229.9" stroke-width="5.5"/><path d="M43.7 167.3 L44.9 163.8 L45.8 160.9M45.8 160.9 L46.6 158.0 L47.1 155.5M-2.0 158.8 L-0.5 158.0 L1.5 156.8 L3.9 155.3 L6.2 153.7" stroke-width="5.0"/><path d="M47.1 155.5 L47.6 153.4 L47.9 151.9M6.2 153.7 L8.0 151.9 L9.4 149.8 L10.5 147.6 L11.5 145.2 L12.1 142.6M41.9 229.9 L42.7 229.5 L43.7 228.9M0.0 301.8 L0.4 303.6 L1.0 306.0" stroke-width="4.5"/><path d="M39.1 180.2 L39.7 179.2 L40.3 178.2M37.9 181.8 L41.0 182.3 L45.2 182.9M47.9 151.9 L47.9 151.1 L47.9 150.1M12.1 142.6 L12.4 139.9 L12.1 136.9 L11.3 133.7 L10.3 130.3M41.9 229.9 L44.3 230.5 L47.7 231.2M47.7 231.2 L51.7 232.0 L55.9 232.9 L59.9 233.9M26.0 241.9 L27.9 244.0 L30.7 246.9M-2.0 288.8 L-0.3 287.9 L2.1 286.6M1.0 306.0 L1.8 308.9 L2.7 311.6 L4.0 313.8" stroke-width="4.0"/><path d="M45.2 182.9 L50.2 183.7 L55.3 184.7M47.9 151.9 L49.6 149.9 L51.9 147.1M44.9 163.8 L46.9 162.7 L49.7 161.1 L53.0 159.2M43.7 228.9 L44.7 228.2 L45.6 227.4M59.9 233.9 L63.8 235.0 L67.9 236.1 L72.1 237.3M30.7 246.9 L34.0 250.2 L37.2 253.4 L39.9 255.9M2.1 286.6 L4.9 285.1 L7.7 283.4M4.0 313.8 L5.5 315.5 L7.4 316.8 L9.4 318.0" stroke-width="3.5"/><path d="M40.3 178.2 L40.7 177.1 L41.1 176.3M55.3 184.7 L59.9 185.8 L64.0 187.1M47.9 150.1 L47.8 149.1 L47.8 148.0M47.9 151.9 L46.9 150.2 L45.5 147.9M51.9 147.1 L54.7 143.9 L57.4 140.6M53.0 159.2 L56.5 157.5 L59.9 156.3 L63.4 155.5M63.4 155.5 L67.3 154.9 L71.1 154.7 L74.7 154.6M10.3 130.3 L9.2 127.0 L8.4 123.9 L7.7 120.9 L7.0 117.9 L6.5 115.0M24.0 196.0 L26.1 197.1 L29.0 198.8M29.0 198.8 L32.5 200.7 L36.2 202.5 L39.9 204.0M72.1 237.3 L76.1 238.6 L79.9 239.9M31.9 233.9 L31.6 232.0 L31.1 229.2M39.9 255.9 L42.0 257.7 L43.7 259.3 L45.4 260.5M7.7 283.4 L10.0 281.9 L11.9 280.3M9.4 318.0 L11.6 319.0 L14.0 319.8" stroke-width="3.0"/><path d="M64.0 187.1 L67.8 188.7 L71.7 190.4 L75.7 192.1M45.5 147.9 L43.8 145.2 L42.2 142.5M42.2 142.5 L40.9 139.9 L40.0 137.5M57.4 140.6 L59.9 137.9 L62.0 135.6M62.0 135.6 L64.0 133.5 L66.0 131.5 L67.9 129.6M74.7 154.6 L77.9 154.9 L80.4 155.6 L82.3 156.7M59.9 185.0 L61.4 183.5 L63.5 181.3M63.5 181.3 L66.1 178.8 L68.9 176.5M6.5 115.0 L6.1 112.3 L6.0 109.9 L6.2 107.9 L6.6 106.1M8.0 151.9 L9.6 152.8 L11.8 154.1M-2.0 180.8 L-0.2 178.9 L2.4 176.1M39.9 204.0 L43.7 205.1 L47.6 206.2 L51.7 207.0M51.7 207.0 L55.8 207.6 L59.9 208.0M45.6 227.4 L46.5 226.6 L47.2 226.0M79.9 239.9 L83.5 241.5 L87.1 243.2M31.1 229.2 L30.6 225.9 L30.1 222.7M41.9 229.9 L43.9 228.8 L46.6 227.1M46.6 227.1 L49.8 225.2 L53.0 223.4M59.9 233.9 L62.7 234.0 L66.6 234.0M45.4 260.5 L47.3 261.3 L49.9 261.9M49.9 261.9 L53.3 262.0 L57.1 261.6M39.9 255.9 L40.5 258.4 L41.2 261.9M41.2 261.9 L42.1 266.0 L43.1 270.1M11.9 280.3 L13.6 278.6 L15.2 276.9 L16.7 275.3M14.0 319.8 L16.6 320.5 L19.5 320.9" stroke-width="2.5"/><path d="M75.7 192.1 L79.9 193.8 L84.8 195.5M45.2 182.9 L46.0 183.9 L47.0 185.3M43.7 167.3 L44.4 167.2 L45.5 167.0M47.6 153.4 L47.4 152.4 L47.2 150.9M47.8 148.0 L47.8 147.0 L47.8 146.3M40.0 137.5 L39.1 135.1 L38.4 132.7 L37.8 130.3M67.9 129.6 L69.9 127.9 L72.1 126.2M51.9 145.9 L51.5 144.0 L51.0 141.5M51.0 141.5 L50.4 138.4 L50.0 135.2M82.3 156.7 L84.1 158.0 L85.9 159.2 L87.9 159.8 L90.2 159.9M90.2 159.9 L92.8 159.6 L95.5 159.0 L97.9 158.4M71.9 155.5 L73.0 154.4 L74.5 153.0M68.9 176.5 L71.9 174.8 L75.1 173.8M6.6 106.1 L7.2 104.6 L8.1 103.2 L9.2 101.9 L10.7 101.1M6.2 153.7 L6.1 152.4 L6.1 150.5M12.4 139.9 L13.4 137.6 L14.8 134.3M14.8 134.3 L16.5 130.5 L18.3 126.9M11.8 154.1 L14.4 155.6 L17.2 156.9M2.4 176.1 L5.4 173.0 L8.7 170.1M59.9 208.0 L63.8 208.0 L67.7 207.7M59.9 208.0 L62.7 208.9 L66.6 210.3M87.1 243.2 L90.4 244.9 L93.4 246.5 L95.8 247.9M30.1 222.7 L30.0 220.0 L30.1 217.5M53.0 223.4 L55.9 222.0 L58.5 220.8M66.6 234.0 L71.2 234.1 L75.8 234.1M75.8 234.1 L79.9 233.9 L83.4 233.6M57.1 261.6 L61.3 261.0 L65.7 260.4 L69.9 259.9M43.1 270.1 L43.9 273.9 L44.8 277.2M49.9 261.9 L51.3 263.6 L53.3 266.0M53.3 266.0 L55.5 268.8 L57.8 271.5M16.7 275.3 L18.0 273.9 L19.2 272.7M10.0 281.9 L11.4 282.1 L13.3 282.5M13.3 282.5 L15.6 283.0 L17.9 283.4M19.5 320.9 L22.6 321.2 L25.5 321.5 L28.0 321.8M1.8 308.9 L2.5 310.1 L3.5 311.8M12.0 318.8 L12.4 317.2 L12.8 314.9M12.8 314.9 L13.5 312.2 L14.5 309.7" stroke-width="2.0"/><path d="M84.8 195.5 L90.3 197.4 L95.8 199.2M95.8 199.2 L100.5 200.7 L103.8 201.8M47.0 185.3 L48.0 186.7 L48.9 188.1M45.5 167.0 L46.5 166.6 L47.5 166.1M47.2 150.9 L47.0 149.5 L46.6 148.1M37.8 130.3 L37.3 127.9 L37.0 125.4M37.0 125.4 L36.7 122.7 L36.5 120.1M72.1 126.2 L74.5 124.6 L76.8 123.1M54.7 143.9 L55.9 143.2 L57.6 142.3M50.0 135.2 L49.9 131.9 L50.4 128.3M97.9 158.4 L99.8 157.8 L101.4 157.4 L102.6 157.0M53.0 159.2 L54.2 159.3 L55.9 159.4M74.5 153.0 L76.3 151.3 L78.1 149.5M78.1 149.5 L79.9 147.9 L81.5 146.2M81.5 146.2 L83.2 144.3 L84.9 142.5 L86.5 141.0M75.1 173.8 L78.6 173.1 L82.3 172.8 L86.1 172.7M86.1 172.7 L89.9 172.8 L93.9 173.4M10.7 101.1 L12.6 100.7 L14.7 100.4 L16.6 99.6 L18.0 97.9 L18.8 95.0M6.1 150.5 L6.2 148.6 L6.5 146.9M6.5 146.9 L7.0 145.3 L7.4 143.6 L7.5 141.8M9.2 127.0 L10.2 126.3 L11.6 125.2M18.3 126.9 L20.0 123.9 L21.7 121.6M17.2 156.9 L20.0 157.8 L22.9 158.2M8.7 170.1 L12.0 167.8 L15.6 166.4M15.6 166.4 L19.7 165.4 L23.9 164.7M9.2 101.9 L8.9 100.2 L8.5 97.7M8.5 97.7 L8.2 94.9 L7.9 92.2M18.0 97.9 L19.1 97.3 L20.7 96.4M20.7 96.4 L22.5 95.5 L24.4 94.6M67.7 207.7 L71.5 207.2 L75.6 206.6 L79.9 206.0M79.9 206.0 L84.9 205.2 L90.7 204.3 L96.4 203.4M66.6 210.3 L71.1 211.9 L75.8 213.2M75.8 213.2 L79.9 214.0 L83.7 214.0M95.8 247.9 L97.6 249.1 L98.9 250.1 L99.7 251.0M47.7 231.2 L48.5 232.3 L49.7 234.0M49.7 234.0 L50.7 235.7 L51.7 237.4M59.9 233.9 L61.0 233.5 L62.5 232.8M30.1 217.5 L30.6 215.2 L31.1 213.1M58.5 220.8 L61.1 219.8 L63.6 219.0 L65.9 218.4M65.9 218.4 L67.9 218.0 L69.6 217.9M83.4 233.6 L86.9 233.1 L90.2 232.6 L93.2 232.2M93.2 232.2 L95.8 231.9 L98.1 232.0M69.9 259.9 L74.4 259.6 L79.2 259.4 L83.9 259.2M34.0 250.2 L34.4 251.8 L35.0 254.0M44.8 277.2 L45.9 280.4 L46.9 283.5 L47.6 286.7M47.6 286.7 L47.9 289.8 L47.6 293.4M57.8 271.5 L59.9 273.9 L61.7 275.9M61.7 275.9 L63.5 277.9 L65.2 279.7 L66.8 281.2M47.9 289.8 L48.7 290.7 L49.9 291.9M49.9 291.9 L51.2 293.2 L52.6 294.6M8.0 249.9 L8.3 248.3 L8.6 246.1M8.6 246.1 L9.1 243.4 L9.6 240.6M19.2 272.7 L20.2 271.6 L21.1 270.7M4.9 285.1 L5.3 284.4 L5.8 283.4M17.9 283.4 L20.0 283.9 L21.9 284.3M4.0 286.9 L4.5 287.6 L5.2 288.6M5.2 288.6 L6.1 289.8 L7.0 291.0M28.0 321.8 L30.1 322.1 L32.1 322.5 L33.9 322.8M3.5 311.8 L4.7 313.4 L6.1 314.7M11.6 319.0 L12.8 318.5 L14.5 318.0M14.5 309.7 L16.0 307.8 L18.4 306.5" stroke-width="1.5"/><path d="M48.9 188.1 L49.8 189.6 L50.4 190.7M67.8 188.7 L67.8 190.4 L67.7 192.8M67.7 192.8 L67.9 195.1 L68.3 197.4M79.9 193.8 L80.5 195.1 L81.4 197.0M103.8 201.8 L104.7 202.2 L105.9 202.8M47.5 166.1 L48.4 165.6 L49.0 165.2M46.6 148.1 L46.2 146.6 L45.9 145.7M36.5 120.1 L36.4 117.9 L36.3 116.3M43.8 145.2 L43.8 144.2 L43.9 142.8M76.8 123.1 L78.9 121.8 L80.3 120.9M57.6 142.3 L59.4 141.4 L61.2 140.6M61.2 140.6 L63.0 139.8 L64.2 139.3M62.0 135.6 L62.2 134.4 L62.5 132.7M50.4 128.3 L51.3 124.1 L52.3 120.0M52.3 120.0 L53.3 116.4 L53.9 113.9M102.6 157.0 L103.5 156.5 L104.3 156.1 L104.8 155.9M55.9 159.4 L57.6 159.6 L59.3 160.0M59.3 160.0 L60.9 160.4 L62.1 160.8M86.5 141.0 L87.9 139.9 L89.1 139.3M89.1 139.3 L90.3 139.2 L91.4 139.2M91.4 139.2 L92.2 139.4 L92.9 139.5M93.9 173.4 L98.3 174.4 L102.6 175.6M102.6 175.6 L106.2 176.7 L108.8 177.4M66.1 178.8 L66.1 177.3 L66.3 175.2M66.3 175.2 L66.5 173.0 L67.1 171.0M18.8 95.0 L19.4 90.9 L19.6 86.5 L19.8 82.6 L20.0 80.0M7.5 141.8 L7.5 139.9 L7.5 138.5M11.6 125.2 L13.1 124.3 L14.6 123.5M7.0 117.9 L6.0 117.4 L4.6 116.7M4.6 116.7 L3.2 116.0 L1.8 115.3M7.2 104.6 L6.0 103.5 L4.2 102.0M21.7 121.6 L23.7 119.6 L25.6 117.9M25.6 117.9 L27.2 116.5 L28.4 115.5M22.9 158.2 L26.2 158.3 L29.5 158.1M29.5 158.1 L32.4 157.9 L34.3 157.8M11.8 154.1 L12.6 153.7 L13.9 153.1M23.9 164.7 L27.4 164.2 L30.0 163.8M5.4 173.0 L5.2 172.3 L4.9 171.2M7.9 92.2 L8.0 90.0 L8.5 88.3M8.5 88.3 L9.4 86.8 L10.4 85.6M10.4 85.6 L11.4 84.7 L12.0 84.0M24.4 94.6 L26.0 94.0 L27.4 93.7M27.4 93.7 L28.8 93.7 L30.1 93.8M30.1 93.8 L31.2 93.9 L31.9 94.0M96.4 203.4 L101.4 202.6 L104.8 202.0M43.7 205.1 L45.0 204.9 L46.9 204.5M46.9 204.5 L48.8 204.0 L50.5 203.7M55.8 207.6 L57.1 208.7 L58.8 210.2M58.8 210.2 L60.6 211.7 L62.4 213.2M71.5 207.2 L72.6 206.4 L74.3 205.2M83.7 214.0 L87.7 213.6 L91.4 213.0M91.4 213.0 L94.6 212.4 L96.8 212.0M99.7 251.0 L100.3 251.8 L100.8 252.3M51.7 237.4 L52.5 239.3 L53.0 240.6M62.5 232.8 L64.0 232.0 L65.4 231.3M67.9 236.1 L69.2 235.6 L71.0 234.9M71.0 234.9 L72.7 234.0 L74.2 232.9M31.1 213.1 L31.6 211.3 L31.9 210.0M30.6 225.9 L30.1 225.5 L29.3 224.8M29.3 224.8 L28.6 224.2 L27.8 223.6M69.6 217.9 L71.2 218.0 L72.5 218.4M72.5 218.4 L73.5 218.7 L74.3 219.0M49.8 225.2 L51.1 225.7 L52.9 226.3M98.1 232.0 L100.2 232.2 L101.8 232.5M101.8 232.5 L103.2 232.8 L104.2 232.9M83.9 259.2 L88.0 259.0 L90.9 258.9M35.0 254.0 L35.5 256.3 L35.8 258.6M35.8 258.6 L36.0 260.9 L36.1 262.5M43.7 259.3 L43.0 260.9 L41.9 263.3M41.9 263.3 L40.7 265.5 L39.1 267.5M57.1 261.6 L58.4 260.5 L60.1 258.9M47.6 293.4 L46.9 297.2 L45.9 300.8M45.9 300.8 L44.9 304.0 L44.3 306.2M42.1 266.0 L43.4 266.8 L45.2 268.1M45.2 268.1 L46.9 269.4 L48.5 270.9M44.8 277.2 L44.4 278.3 L43.9 279.8M66.8 281.2 L68.3 282.3 L69.7 282.7M69.7 282.7 L71.1 282.7 L72.4 282.4M72.4 282.4 L73.5 282.1 L74.3 281.9M52.6 294.6 L53.9 295.8 L55.2 297.0M55.2 297.0 L56.6 298.1 L57.9 299.2M57.9 299.2 L59.1 300.2 L59.9 300.8M9.6 240.6 L10.0 237.9 L10.4 235.0M10.4 235.0 L10.9 231.8 L11.3 228.6M11.3 228.6 L11.7 225.9 L12.0 224.0M21.1 270.7 L21.8 270.0 L22.4 269.5M5.8 283.4 L6.2 282.5 L6.4 281.4M6.4 281.4 L6.5 280.3 L6.5 279.6M11.9 280.3 L12.5 280.0 L13.5 279.6M13.5 279.6 L14.4 279.3 L15.4 279.2M21.9 284.3 L23.8 284.8 L25.7 285.2M25.7 285.2 L27.2 285.6 L28.4 285.9M7.0 291.0 L8.0 291.8 L9.2 292.5M9.2 292.5 L10.5 293.0 L11.9 293.3M11.9 293.3 L13.1 293.6 L14.0 293.8M33.9 322.8 L35.3 323.0 L36.3 323.2M6.1 314.7 L7.6 316.0 L8.7 316.9M14.5 318.0 L16.2 317.5 L17.9 317.3M18.4 306.5 L21.5 305.5 L24.9 304.8M24.9 304.8 L27.9 304.3 L30.0 303.8" stroke-width="1.0"/><path d="M68.3 197.4 L68.9 199.7 L69.3 201.3M81.4 197.0 L82.1 199.0 L82.6 201.0M82.6 201.0 L82.8 203.1 L83.0 204.6M105.9 202.8 L107.2 203.4 L108.5 203.8M108.5 203.8 L109.8 204.3 L110.7 204.6M43.9 142.8 L44.1 141.4 L44.4 140.0M44.4 140.0 L44.8 138.6 L45.2 137.6M62.5 132.7 L62.7 131.0 L62.5 129.3M62.5 129.3 L62.2 127.6 L61.9 126.4M67.1 171.0 L67.8 169.0 L68.3 167.6M14.6 123.5 L16.2 122.8 L17.4 122.3M1.8 115.3 L0.4 114.6 L-0.6 114.1M4.2 102.0 L2.5 100.4 L1.2 98.5M1.2 98.5 L0.0 96.5 L-0.8 95.1M13.9 153.1 L15.1 152.5 L16.3 152.0M16.3 152.0 L17.6 151.6 L18.5 151.3M4.9 171.2 L4.5 170.2 L3.9 169.3M3.9 169.3 L3.3 168.4 L2.8 167.8M50.5 203.7 L52.2 203.2 L53.8 202.7 L55.6 201.9M55.6 201.9 L57.3 200.9 L58.5 200.3M62.4 213.2 L64.2 214.7 L65.4 215.7M74.3 205.2 L75.9 204.2 L77.7 203.4M77.7 203.4 L79.6 202.7 L80.9 202.2M65.4 231.3 L66.8 230.4 L67.8 229.8M74.2 232.9 L75.7 231.6 L76.7 230.7M27.8 223.6 L26.9 223.1 L26.3 222.8M52.9 226.3 L54.6 227.0 L56.2 228.0M56.2 228.0 L57.8 229.0 L58.9 229.8M39.1 267.5 L37.4 269.5 L36.2 270.8M60.1 258.9 L61.7 257.2 L63.1 255.3M63.1 255.3 L64.3 253.3 L65.1 251.9M48.5 270.9 L50.1 272.4 L51.2 273.4M43.9 279.8 L43.3 281.3 L42.8 282.9M42.8 282.9 L42.2 284.4 L41.9 285.5M15.4 279.2 L16.4 279.2 L17.1 279.1M17.9 317.3 L19.7 317.2 L20.9 317.1" stroke-width="0.5"/></g><g opacity="0.8" fill="none" stroke="#0b0502" stroke-linecap="round" stroke-linejoin="round"><path d="M662.8 257.5 L661.0 256.5 L658.3 255.2" stroke-width="9.5"/><path d="M658.3 255.2 L655.3 253.6 L652.3 251.8" stroke-width="8.5"/><path d="M652.3 251.8 L649.8 249.9 L647.9 247.8" stroke-width="8.0"/><path d="M647.9 247.8 L646.3 245.3 L644.8 242.8 L643.4 240.3" stroke-width="7.5"/><path d="M661.8 188.8 L645.8 181.8M643.4 240.3 L641.9 237.9 L640.1 235.6" stroke-width="7.0"/><path d="M640.1 235.6 L638.3 233.3 L636.5 231.1" stroke-width="6.5"/><path d="M645.8 181.8 L645.3 181.5 L644.6 180.9M645.8 181.8 L645.0 179.4 L643.9 176.0M636.5 231.1 L635.0 229.3 L633.9 227.9M649.8 249.9 L648.1 250.4 L645.7 250.9" stroke-width="6.0"/><path d="M643.9 176.0 L642.5 172.0 L641.3 167.8M641.3 167.8 L640.3 163.8 L639.5 159.7M645.7 250.9 L642.9 251.7 L640.2 252.7M640.2 252.7 L637.9 253.9 L635.9 255.5" stroke-width="5.5"/><path d="M645.8 181.8 L643.7 182.1 L640.8 182.6 L637.3 183.1M639.5 159.7 L639.0 155.0 L638.5 150.5M638.5 150.5 L638.1 146.6 L637.9 143.9M633.9 227.9 L633.2 227.4 L632.4 226.7M633.9 227.9 L632.2 226.2 L629.9 223.8 L627.3 221.0M635.9 255.5 L634.2 257.3 L632.6 259.3 L631.2 261.5" stroke-width="5.0"/><path d="M644.6 180.9 L643.9 180.4 L643.2 179.8M637.3 183.1 L633.6 183.5 L629.9 183.8 L626.1 183.9M627.3 221.0 L624.5 218.2 L621.9 216.0 L619.5 214.2M631.2 261.5 L629.9 263.9 L628.8 266.7" stroke-width="4.5"/><path d="M626.1 183.9 L622.2 183.9 L618.1 183.8 L614.0 183.7M637.9 143.9 L637.6 143.2 L637.2 142.1M637.9 143.9 L638.1 141.9 L638.3 139.2 L638.7 136.0M637.9 143.9 L636.7 141.9 L635.1 139.1 L633.3 135.9 L631.5 132.7M640.3 163.8 L638.9 162.1 L636.9 159.5 L634.6 156.7M632.4 226.7 L631.6 225.9 L630.9 225.0M619.5 214.2 L617.2 212.6 L614.8 211.2 L612.4 210.0M633.9 227.9 L631.6 228.2 L628.4 228.4M628.8 266.7 L627.8 269.9 L627.0 273.1M627.0 273.1 L626.4 275.9 L625.9 277.9" stroke-width="4.0"/><path d="M638.7 136.0 L639.2 132.8 L639.9 129.9 L640.8 127.4M631.5 132.7 L629.9 129.9 L628.5 127.6 L627.1 125.6 L625.9 123.7M634.6 156.7 L632.2 153.9 L629.9 151.9 L627.6 150.5M629.9 183.8 L628.0 182.1 L625.3 179.6 L622.2 176.8M612.4 210.0 L609.9 209.0 L607.2 208.0 L604.5 207.3M628.4 228.4 L624.8 228.8 L621.1 229.3 L617.9 229.9M625.9 277.9 L625.6 278.6 L625.3 279.7M629.9 263.9 L627.7 264.5 L624.5 265.5" stroke-width="3.5"/><path d="M643.2 179.8 L642.6 179.1 L642.2 178.6M614.0 183.7 L609.9 183.8 L605.9 184.0 L601.9 184.3M637.2 142.1 L636.8 141.1 L636.5 140.0M640.8 127.4 L642.1 125.1 L643.5 122.8 L644.8 120.4M625.9 123.7 L624.8 121.8 L623.9 119.9 L623.1 117.8M627.6 150.5 L625.2 149.5 L622.8 148.9 L620.3 148.3M622.2 176.8 L618.9 174.0 L615.9 171.8 L613.1 170.2M613.1 170.2 L610.2 168.8 L607.4 167.7 L604.6 166.7M661.8 152.9 L660.7 150.9 L659.1 148.1M661.8 200.4 L659.3 200.1 L655.7 199.6M604.5 207.3 L601.6 206.6 L598.8 206.2 L595.9 206.0 L593.1 206.0M617.9 229.9 L615.3 230.9 L613.0 232.2 L610.8 233.6M625.9 277.9 L624.5 279.2 L622.4 281.1M622.4 281.1 L620.1 283.4 L617.8 285.7 L615.9 287.8M624.5 265.5 L620.9 266.5 L617.2 267.4" stroke-width="3.0"/><path d="M601.9 184.3 L597.9 184.6 L593.9 185.1 L589.9 185.8 L585.8 186.8M639.0 155.0 L639.8 154.3 L641.1 153.3M644.8 120.4 L645.8 117.9 L646.7 115.2 L647.5 112.4M647.5 112.4 L648.1 109.5 L648.5 106.6 L648.8 103.9 L648.9 101.4M623.1 117.8 L622.3 115.7 L621.8 113.6 L621.6 111.7 L621.9 109.9M621.9 109.9 L622.9 108.5 L624.5 107.4 L626.3 106.4 L628.2 105.3M623.9 119.9 L622.5 120.0 L620.4 120.3M620.3 148.3 L617.9 147.9 L615.5 147.5 L613.1 147.4M613.1 147.4 L610.7 147.4 L608.3 147.3 L605.9 146.9 L603.4 146.1M604.6 166.7 L601.9 165.8 L599.4 165.3 L596.9 165.0M659.1 148.1 L657.2 144.9 L655.4 142.0M655.7 199.6 L651.6 199.1 L647.5 198.6M647.5 198.6 L643.8 198.4 L640.8 198.5M630.9 225.0 L630.2 224.1 L629.8 223.4M593.1 206.0 L590.4 206.2 L587.6 206.6 L584.8 207.2M610.8 233.6 L608.5 234.9 L605.9 235.9M605.9 235.9 L602.9 236.5 L599.7 236.8M641.9 237.9 L642.7 236.3 L643.9 234.0M625.3 279.7 L624.9 280.7 L624.5 281.8M615.9 287.8 L614.4 289.8 L613.1 291.8 L612.0 293.8M612.0 293.8 L610.9 295.8 L609.9 297.8M617.2 267.4 L613.9 267.9 L611.0 267.8M611.0 267.8 L608.2 267.5 L605.4 266.9 L602.7 266.3M661.8 293.8 L659.6 293.5 L656.4 292.9" stroke-width="2.5"/><path d="M585.8 186.8 L581.4 188.1 L577.1 189.6 L573.2 190.8M637.3 183.1 L636.0 182.6 L634.1 181.9M636.5 140.0 L636.1 139.0 L635.9 138.3M648.9 101.4 L648.8 98.9 L648.6 96.4 L648.2 94.1M628.2 105.3 L629.9 103.9 L631.3 102.1 L632.6 100.0M620.4 120.3 L618.1 120.5 L615.8 120.4M615.8 120.4 L613.9 119.9 L612.5 118.8M613.9 119.9 L613.5 121.4 L613.1 123.7M613.1 123.7 L612.4 126.1 L611.4 128.4M603.4 146.1 L600.8 145.2 L598.2 144.1 L595.8 142.9M629.9 151.9 L628.5 152.8 L626.6 154.2M596.9 165.0 L594.5 164.9 L592.2 164.6 L589.9 163.8 L587.7 162.6M587.7 162.6 L585.6 160.9 L583.6 159.0 L581.7 157.3M601.9 165.8 L601.0 164.4 L599.8 162.4M589.9 163.8 L588.3 165.0 L585.9 166.6M655.4 142.0 L653.8 139.9 L652.6 138.7M640.8 198.5 L637.8 198.7 L635.1 199.1 L632.4 199.4M621.9 216.0 L620.2 216.3 L617.9 216.7M599.7 236.8 L596.4 237.0 L593.1 237.3 L589.9 237.9M643.9 234.0 L645.2 231.3 L646.1 228.5M627.8 269.9 L626.9 270.3 L625.7 271.0M609.9 297.8 L609.0 299.9 L608.4 301.9M602.7 266.3 L599.9 265.9 L596.8 265.6M609.9 297.8 L608.6 297.6 L606.6 297.4M656.4 292.9 L652.7 292.3 L649.0 291.9M661.8 319.8 L660.1 319.6 L657.7 319.4M657.7 319.4 L654.9 319.1 L652.2 318.9" stroke-width="2.0"/><path d="M573.2 190.8 L570.0 191.8 L567.4 192.4 L565.4 192.7M634.1 181.9 L632.3 181.1 L630.5 180.1M626.1 183.9 L625.5 185.1 L624.5 186.7M624.5 186.7 L623.5 188.3 L622.6 189.7M609.9 183.8 L608.6 183.4 L606.7 182.8M597.9 184.6 L597.3 185.8 L596.4 187.4M641.1 153.3 L642.2 152.2 L643.2 151.0M648.2 94.1 L647.8 92.0 L647.3 89.8 L646.6 87.7M642.1 125.1 L643.0 124.7 L644.4 124.3M632.6 100.0 L633.9 97.8 L635.0 95.7 L635.9 94.0 L636.4 92.6M628.5 127.6 L628.6 126.5 L628.8 125.0M612.5 118.8 L611.2 117.2 L610.1 115.4 L609.1 113.5M609.1 113.5 L607.9 111.9 L606.6 110.4M611.4 128.4 L609.9 129.9 L607.7 130.5M607.7 130.5 L604.8 130.7 L601.7 130.4 L598.6 130.1M621.9 109.9 L621.2 108.8 L620.3 107.3M620.3 107.3 L619.2 105.5 L618.4 103.7M595.8 142.9 L593.9 141.9 L592.5 140.8 L591.4 139.6M626.6 154.2 L624.4 155.7 L622.0 157.0M622.0 157.0 L619.9 157.8 L617.7 158.1M581.7 157.3 L580.0 155.9 L578.4 154.7 L577.0 153.8M622.2 176.8 L622.1 175.5 L622.2 173.7M599.8 162.4 L598.3 160.0 L597.0 157.8M597.0 157.8 L595.9 155.9 L595.2 154.3M585.9 166.6 L583.2 168.4 L580.4 170.2M580.4 170.2 L578.0 171.8 L575.7 173.2M648.8 103.9 L649.6 102.5 L650.6 100.5M650.6 100.5 L651.7 98.2 L652.9 95.9M652.6 138.7 L651.4 138.0 L650.3 137.8M661.8 129.9 L657.8 121.9M632.4 199.4 L629.9 199.6 L627.3 199.5M627.3 199.5 L624.7 199.4 L622.3 199.2M584.8 207.2 L581.9 208.0 L578.9 209.1 L575.5 210.5M617.9 216.7 L615.6 217.2 L613.3 217.8M609.9 209.0 L608.4 209.7 L606.2 210.6M589.9 237.9 L586.7 239.0 L583.4 240.5 L580.2 242.0M646.1 228.5 L646.2 225.9 L645.3 223.4M645.3 223.4 L643.4 220.6 L641.2 217.9M625.7 271.0 L624.5 271.6 L623.2 272.1M624.5 281.8 L624.2 282.8 L623.9 283.6M608.4 301.9 L607.7 304.0 L606.9 305.9 L605.9 307.8M605.9 307.8 L604.4 309.7 L602.6 311.5 L600.7 313.3M596.8 265.6 L593.5 265.4 L590.3 265.3M606.6 297.4 L604.4 297.0 L602.1 296.5M602.1 296.5 L599.9 295.8 L597.7 294.8M649.0 291.9 L645.8 291.8 L643.0 292.3M643.0 292.3 L640.2 293.2 L637.6 294.2M652.2 318.9 L649.8 318.8 L647.9 318.9M661.8 273.9 L649.8 271.9M661.8 329.8 L653.8 327.8M658.8 218.0 L658.3 216.8 L657.6 215.2M657.6 215.2 L656.8 213.4 L656.2 211.6" stroke-width="1.5"/><path d="M565.4 192.7 L563.8 192.8 L562.5 192.9 L561.6 193.0M630.5 180.1 L628.9 179.0 L627.7 178.3M622.6 189.7 L621.6 191.1 L620.5 192.4 L619.1 193.7M619.1 193.7 L617.6 194.9 L616.5 195.7M620.5 192.4 L619.7 192.5 L618.5 192.6M606.7 182.8 L604.9 182.2 L603.0 181.6M596.4 187.4 L595.7 189.1 L595.1 190.9M585.8 186.8 L585.2 187.9 L584.3 189.4M643.2 151.0 L644.2 149.6 L644.8 148.7M646.6 87.7 L645.9 85.8 L645.3 84.1 L644.8 83.0M644.4 124.3 L645.7 123.9 L647.1 123.7M646.7 115.2 L646.3 114.1 L645.6 112.5M636.4 92.6 L636.7 91.4 L636.9 90.4 L637.0 89.6 L637.1 89.0M628.8 125.0 L629.1 123.4 L629.6 121.9M623.1 117.8 L621.8 117.4 L620.0 116.8M620.0 116.8 L618.3 116.0 L616.8 114.9M606.6 110.4 L605.1 108.9 L603.6 107.6M603.6 107.6 L602.4 106.4 L601.5 105.5M615.8 120.4 L615.2 119.5 L614.4 118.2M598.6 130.1 L595.9 129.9 L593.5 129.7M593.5 129.7 L591.2 129.5 L589.0 129.3M589.0 129.3 L587.2 129.0 L585.9 128.9M612.4 126.1 L613.3 127.2 L614.5 128.6M618.4 103.7 L617.9 101.9 L617.9 100.2M617.9 100.2 L618.4 98.4 L618.9 96.6M618.9 96.6 L619.5 95.0 L619.9 94.0M591.4 139.6 L590.6 138.5 L590.0 137.6 L589.5 136.9M622.8 148.9 L622.5 147.8 L622.2 146.2M622.2 146.2 L621.8 144.6 L621.3 143.1M610.7 147.4 L609.8 148.2 L608.5 149.4M617.7 158.1 L615.4 157.9 L613.2 157.5M613.2 157.5 L611.3 157.1 L609.9 156.9M577.0 153.8 L575.7 153.0 L574.7 152.3 L574.0 151.9M622.2 173.7 L622.3 171.9 L622.8 170.1M613.1 170.2 L611.7 170.1 L609.8 170.0M609.8 170.0 L607.9 169.7 L606.0 169.3M604.6 166.7 L604.3 165.6 L604.0 164.0M604.0 164.0 L603.8 162.4 L603.8 160.8M595.2 154.3 L594.7 152.9 L594.4 151.6M594.4 151.6 L594.1 150.6 L593.9 149.9M575.7 173.2 L573.3 174.7 L571.2 175.9M571.2 175.9 L569.3 177.0 L568.0 177.8M652.9 95.9 L653.8 94.0 L654.6 92.3M654.6 92.3 L655.3 90.6 L655.9 89.1M655.9 89.1 L656.5 87.9 L656.8 87.0M650.3 137.8 L649.5 137.6 L648.8 137.5M657.2 144.9 L657.7 144.4 L658.5 143.6M661.8 80.0 L655.8 76.0M622.3 199.2 L620.3 198.9 L618.9 198.8M655.7 199.6 L655.2 198.9 L654.5 197.9M654.5 197.9 L653.9 196.9 L653.5 195.8M643.8 198.4 L642.9 199.1 L641.6 200.2M575.5 210.5 L572.3 212.1 L569.5 213.4 L567.6 214.4M613.3 217.8 L611.0 218.4 L609.4 218.9M606.2 210.6 L604.0 211.4 L601.7 212.0M580.2 242.0 L577.5 243.4 L575.6 244.3M615.3 230.9 L614.0 230.3 L612.2 229.4M612.2 229.4 L610.3 228.4 L608.5 227.5M602.9 236.5 L601.8 235.8 L600.3 234.7M641.2 217.9 L639.2 215.6 L637.9 214.0M645.2 231.3 L644.6 230.4 L643.7 229.2M623.2 272.1 L621.8 272.5 L620.9 272.7M600.7 313.3 L599.1 314.8 L597.9 315.8M620.1 283.4 L618.6 284.0 L616.6 284.9M616.6 284.9 L614.6 286.0 L612.7 287.2M613.1 291.8 L613.5 292.7 L613.9 293.9M590.3 265.3 L587.5 265.2 L585.5 265.1M611.0 267.8 L610.4 268.4 L609.5 269.2M609.5 269.2 L608.7 270.1 L607.8 270.9M597.7 294.8 L595.3 293.4 L593.0 292.0M593.0 292.0 L591.0 290.7 L589.5 289.8M637.6 294.2 L635.4 295.2 L633.9 295.8M647.9 318.9 L646.0 319.1 L644.3 319.4M644.3 319.4 L642.9 319.6 L641.9 319.8M656.2 211.6 L655.8 210.0 L655.9 208.6M655.9 208.6 L656.4 207.1 L656.9 205.9M656.9 205.9 L657.5 204.8 L657.8 204.0" stroke-width="1.0"/><path d="M618.5 192.6 L617.4 192.6 L616.2 192.5M616.2 192.5 L615.1 192.4 L614.3 192.2M603.0 181.6 L601.1 181.0 L599.8 180.6M595.1 190.9 L594.6 192.7 L594.3 194.0M584.3 189.4 L583.6 190.9 L583.1 192.5M583.1 192.5 L582.8 194.2 L582.5 195.4M647.1 123.7 L648.4 123.5 L649.4 123.3M645.6 112.5 L645.0 110.9 L644.3 109.3M644.3 109.3 L643.6 107.7 L643.1 106.6M629.6 121.9 L630.1 120.4 L630.5 119.3M616.8 114.9 L615.3 113.6 L614.3 112.7M614.4 118.2 L613.6 116.8 L612.8 115.5M612.8 115.5 L612.0 114.2 L611.4 113.2M614.5 128.6 L615.8 130.1 L617.0 131.6M617.0 131.6 L618.2 133.1 L619.0 134.2M621.3 143.1 L620.8 141.6 L620.4 140.5M608.5 149.4 L607.3 150.5 L606.0 151.6M606.0 151.6 L604.6 152.7 L603.7 153.5M622.8 170.1 L623.4 168.4 L623.9 167.2M606.0 169.3 L604.2 168.8 L602.9 168.4M603.8 160.8 L603.9 159.2 L604.0 158.0M658.5 143.6 L659.4 142.8 L660.2 142.1M660.2 142.1 L661.1 141.5 L661.8 141.0M653.5 195.8 L653.1 194.6 L652.9 193.8M641.6 200.2 L640.3 201.2 L639.0 202.2M639.0 202.2 L637.6 203.2 L636.7 203.9M601.7 212.0 L599.4 212.4 L597.8 212.7M608.5 227.5 L606.6 226.7 L605.3 226.0M600.3 234.7 L598.7 233.5 L597.3 232.2M597.3 232.2 L596.0 230.9 L595.1 229.9M643.7 229.2 L642.9 227.9 L642.3 226.5M642.3 226.5 L641.6 225.1 L641.2 224.1M612.7 287.2 L610.9 288.5 L609.6 289.4M613.9 293.9 L614.5 295.1 L615.0 296.3M615.0 296.3 L615.5 297.5 L615.9 298.3M607.8 270.9 L606.9 271.7 L606.3 272.3" stroke-width="0.5"/></g><path d="M-2 415.5 L30 411.5 L28.6 390 A32.8 32 0 0 1 94.2 390 L95.5 404 L102.5 403.5 L104.800 381.500 A26 26 0 0 1 156.800 381.500 L155.5 399 L162 398.5 C160.500 392 160.300 388 160.500 385 C160 368 172 358 187.5 358 C199 358 206 364 209.5 371.5 L220 397.5 C232 397 240 397 246 397.5 C270 398 300 400 330 403 C400 409 470 417 520 419 C580 419 620 414 662 410 L662 497 L-2 497Z" fill="#000"/><text x="163.6" y="64.9" font-size="43.6" font-weight="bold" fill="#120a05" textLength="339.1" lengthAdjust="spacingAndGlyphs" stroke="#120a05" stroke-width="1.6">KNOW YOUR PUMPKIN</text><g transform="scale(5.7391)"><ellipse cx="57.7" cy="56.7" rx="24.3" ry="13.9" fill="#fbaa3c"/><ellipse cx="57.7" cy="56.7" rx="14" ry="13.5" fill="none" stroke="#f59a2a" stroke-width="0.4"/><ellipse cx="57.7" cy="56.7" rx="6" ry="13.5" fill="none" stroke="#f59a2a" stroke-width="0.4"/><path d="M54 43.500c1.500-4 3-8 6.500-11l1.500 1.200c-2 3-2.500 6.500-2 10z" fill="#1a9a4a"/><rect x="48" y="24.800" width="18.700" height="6" fill="#111"/><rect x="28.500" y="70.900" width="58.400" height="2.300" fill="#bdbdbd"/><rect x="15.7" y="14.7" width="24.0" height="7.5" fill="none" stroke="#e8690b" stroke-width="0.5"/><rect x="21" y="32.7" width="28.4" height="6.0" fill="none" stroke="#e8690b" stroke-width="0.5"/><rect x="5.2" y="54.4" width="23.3" height="6.8" fill="none" stroke="#e8690b" stroke-width="0.5"/><rect x="71.2" y="26" width="29.2" height="11.2" fill="none" stroke="#e8690b" stroke-width="0.5"/><rect x="83.9" y="55.9" width="28.5" height="12.8" fill="none" stroke="#e8690b" stroke-width="0.5"/><path d="M39.700 19h6v8h3M35 38.700v5h5v4M28.500 58h5v4h5M85 37.200v8h-9v6M83.900 62h-5v-3h-6" fill="none" stroke="#d8600b" stroke-width="0.5"/></g><text x="309.9" y="171.0" font-size="26.4" font-weight="bold" fill="#e8690b" textLength="40.2" lengthAdjust="spacingAndGlyphs" >BIG</text><text x="95.8" y="100.4" font-size="14.9" font-weight="normal" fill="#6a3a12" textLength="123.4" lengthAdjust="spacingAndGlyphs" >The largest pumpkin</text><text x="95.8" y="118.8" font-size="14.9" font-weight="normal" fill="#6a3a12" textLength="123.4" lengthAdjust="spacingAndGlyphs" >ever grown weighed</text><text x="126.3" y="203.7" font-size="14.9" font-weight="normal" fill="#6a3a12" textLength="148.6" lengthAdjust="spacingAndGlyphs" >80% of pumpkins sold in</text><text x="35.6" y="328.3" font-size="14.9" font-weight="normal" fill="#6a3a12" textLength="119.4" lengthAdjust="spacingAndGlyphs" >Pumpkins are fruit</text><text x="35.6" y="346.6" font-size="14.9" font-weight="normal" fill="#6a3a12" textLength="119.4" lengthAdjust="spacingAndGlyphs" >containing seeds</text><text x="414.4" y="165.3" font-size="14.9" font-weight="normal" fill="#6a3a12" textLength="153.2" lengthAdjust="spacingAndGlyphs" >Pumpkins have been</text><text x="414.4" y="183.7" font-size="14.9" font-weight="normal" fill="#6a3a12" textLength="153.2" lengthAdjust="spacingAndGlyphs" >grown in America for</text><text x="414.4" y="202.0" font-size="14.9" font-weight="normal" fill="#6a3a12" textLength="153.2" lengthAdjust="spacingAndGlyphs" >over 5,000 years</text><text x="487.3" y="336.9" font-size="14.9" font-weight="normal" fill="#6a3a12" textLength="149.2" lengthAdjust="spacingAndGlyphs" >Pumpkin flowers are</text><text x="487.3" y="355.3" font-size="14.9" font-weight="normal" fill="#6a3a12" textLength="149.2" lengthAdjust="spacingAndGlyphs" >edible and high in</text><text x="487.3" y="373.6" font-size="14.9" font-weight="normal" fill="#6a3a12" textLength="149.2" lengthAdjust="spacingAndGlyphs" >fiber and potassium</text></svg><div class="a" style="left:27px;top:496px;width:119px;height:90px;background:#fff;border:1px solid #c4c4c4;box-sizing:border-box"></div><svg class="a" style="left:29px;top:498px" width="115" height="86" viewBox="0 0 660 493.6"><defs>
<radialGradient id="t3bg" gradientUnits="userSpaceOnUse" cx="325" cy="250" r="272" gradientTransform="translate(325 250) scale(1 1.21) translate(-325 -250)">
<stop offset="0" stop-color="#fbb034"/><stop offset="0.47" stop-color="#f9a11c"/><stop offset="0.667" stop-color="#f7901e"/><stop offset="0.765" stop-color="#f47b20"/><stop offset="0.86" stop-color="#f36c22"/><stop offset="1" stop-color="#f15a24"/>
</radialGradient>
<radialGradient id="t3mo" gradientUnits="userSpaceOnUse" cx="365" cy="262" r="215">
<stop offset="0" stop-color="#feef90"/><stop offset="0.3" stop-color="#fee988"/><stop offset="0.6" stop-color="#fdde84" stop-opacity="0.85"/><stop offset="0.85" stop-color="#fcd58c" stop-opacity="0.35"/><stop offset="1" stop-color="#fbd3a0" stop-opacity="0"/>
</radialGradient>
<linearGradient id="t3mv" gradientUnits="userSpaceOnUse" x1="360" y1="285" x2="295" y2="500">
<stop offset="0" stop-color="#f6923a" stop-opacity="0"/><stop offset="0.4" stop-color="#f6923a" stop-opacity="0.18"/><stop offset="0.75" stop-color="#f68e36" stop-opacity="0.42"/><stop offset="1" stop-color="#f58a32" stop-opacity="0.62"/>
</linearGradient>
<filter id="t3bl" x="-5%" y="-5%" width="110%" height="110%"><feGaussianBlur stdDeviation="1.2"/></filter>
<filter id="t3tx" x="0" y="0" width="100%" height="100%"><feTurbulence type="fractalNoise" baseFrequency="0.035" numOctaves="3" seed="4" result="n"/><feColorMatrix in="n" type="matrix" values="0 0 0 0 0.96  0 0 0 0 0.62  0 0 0 0 0.25  0.9 0.9 0 0 -0.72" result="c"/><feComposite in="c" in2="SourceGraphic" operator="in"/></filter>
</defs><rect x="0" y="0" width="660" height="495" fill="url(#t3bg)"/><g filter="url(#t3bl)"><circle cx="321.6" cy="301.3" r="198.7" fill="#fbd2a2"/><circle cx="321.6" cy="301.3" r="198.7" fill="url(#t3mo)"/><circle cx="321.6" cy="301.3" r="198.7" fill="url(#t3mv)"/></g><circle cx="321.6" cy="301.3" r="197" fill="#000" filter="url(#t3tx)"/><g opacity="0.8" fill="none" stroke="#0b0502" stroke-linecap="round" stroke-linejoin="round"><path d="M-2.0 203.8 L1.7 202.6 L7.1 201.0M7.1 201.0 L13.2 199.1 L19.1 197.0M-2.0 252.3 L0.6 251.7 L4.3 250.9M4.3 250.9 L8.5 250.0 L12.6 249.0 L16.0 247.9" stroke-width="7.5"/><path d="M19.1 197.0 L24.0 194.8 L27.7 192.2M16.0 247.9 L18.5 246.8 L20.7 245.7 L22.6 244.5" stroke-width="7.0"/><path d="M27.7 192.2 L31.1 189.3 L33.9 186.3M33.9 186.3 L36.2 183.6 L37.9 181.8M22.6 244.5 L24.3 243.3 L26.0 241.9M26.0 241.9 L27.3 240.4 L28.5 238.7" stroke-width="6.5"/><path d="M28.5 238.7 L29.5 236.9 L30.6 235.3 L31.9 233.9" stroke-width="6.0"/><path d="M37.9 181.8 L38.4 181.1 L39.1 180.2M37.9 181.8 L39.0 179.3 L40.4 175.6M40.4 175.6 L42.1 171.5 L43.7 167.3M31.9 233.9 L33.8 232.8 L36.1 231.9 L38.5 231.1M38.5 231.1 L40.5 230.4 L41.9 229.9" stroke-width="5.5"/><path d="M43.7 167.3 L44.9 163.8 L45.8 160.9M45.8 160.9 L46.6 158.0 L47.1 155.5M-2.0 158.8 L-0.5 158.0 L1.5 156.8 L3.9 155.3 L6.2 153.7" stroke-width="5.0"/><path d="M47.1 155.5 L47.6 153.4 L47.9 151.9M6.2 153.7 L8.0 151.9 L9.4 149.8 L10.5 147.6 L11.5 145.2 L12.1 142.6M41.9 229.9 L42.7 229.5 L43.7 228.9M0.0 301.8 L0.4 303.6 L1.0 306.0" stroke-width="4.5"/><path d="M39.1 180.2 L39.7 179.2 L40.3 178.2M37.9 181.8 L41.0 182.3 L45.2 182.9M47.9 151.9 L47.9 151.1 L47.9 150.1M12.1 142.6 L12.4 139.9 L12.1 136.9 L11.3 133.7 L10.3 130.3M41.9 229.9 L44.3 230.5 L47.7 231.2M47.7 231.2 L51.7 232.0 L55.9 232.9 L59.9 233.9M26.0 241.9 L27.9 244.0 L30.7 246.9M-2.0 288.8 L-0.3 287.9 L2.1 286.6M1.0 306.0 L1.8 308.9 L2.7 311.6 L4.0 313.8" stroke-width="4.0"/><path d="M45.2 182.9 L50.2 183.7 L55.3 184.7M47.9 151.9 L49.6 149.9 L51.9 147.1M44.9 163.8 L46.9 162.7 L49.7 161.1 L53.0 159.2M43.7 228.9 L44.7 228.2 L45.6 227.4M59.9 233.9 L63.8 235.0 L67.9 236.1 L72.1 237.3M30.7 246.9 L34.0 250.2 L37.2 253.4 L39.9 255.9M2.1 286.6 L4.9 285.1 L7.7 283.4M4.0 313.8 L5.5 315.5 L7.4 316.8 L9.4 318.0" stroke-width="3.5"/><path d="M40.3 178.2 L40.7 177.1 L41.1 176.3M55.3 184.7 L59.9 185.8 L64.0 187.1M47.9 150.1 L47.8 149.1 L47.8 148.0M47.9 151.9 L46.9 150.2 L45.5 147.9M51.9 147.1 L54.7 143.9 L57.4 140.6M53.0 159.2 L56.5 157.5 L59.9 156.3 L63.4 155.5M63.4 155.5 L67.3 154.9 L71.1 154.7 L74.7 154.6M10.3 130.3 L9.2 127.0 L8.4 123.9 L7.7 120.9 L7.0 117.9 L6.5 115.0M24.0 196.0 L26.1 197.1 L29.0 198.8M29.0 198.8 L32.5 200.7 L36.2 202.5 L39.9 204.0M72.1 237.3 L76.1 238.6 L79.9 239.9M31.9 233.9 L31.6 232.0 L31.1 229.2M39.9 255.9 L42.0 257.7 L43.7 259.3 L45.4 260.5M7.7 283.4 L10.0 281.9 L11.9 280.3M9.4 318.0 L11.6 319.0 L14.0 319.8" stroke-width="3.0"/><path d="M64.0 187.1 L67.8 188.7 L71.7 190.4 L75.7 192.1M45.5 147.9 L43.8 145.2 L42.2 142.5M42.2 142.5 L40.9 139.9 L40.0 137.5M57.4 140.6 L59.9 137.9 L62.0 135.6M62.0 135.6 L64.0 133.5 L66.0 131.5 L67.9 129.6M74.7 154.6 L77.9 154.9 L80.4 155.6 L82.3 156.7M59.9 185.0 L61.4 183.5 L63.5 181.3M63.5 181.3 L66.1 178.8 L68.9 176.5M6.5 115.0 L6.1 112.3 L6.0 109.9 L6.2 107.9 L6.6 106.1M8.0 151.9 L9.6 152.8 L11.8 154.1M-2.0 180.8 L-0.2 178.9 L2.4 176.1M39.9 204.0 L43.7 205.1 L47.6 206.2 L51.7 207.0M51.7 207.0 L55.8 207.6 L59.9 208.0M45.6 227.4 L46.5 226.6 L47.2 226.0M79.9 239.9 L83.5 241.5 L87.1 243.2M31.1 229.2 L30.6 225.9 L30.1 222.7M41.9 229.9 L43.9 228.8 L46.6 227.1M46.6 227.1 L49.8 225.2 L53.0 223.4M59.9 233.9 L62.7 234.0 L66.6 234.0M45.4 260.5 L47.3 261.3 L49.9 261.9M49.9 261.9 L53.3 262.0 L57.1 261.6M39.9 255.9 L40.5 258.4 L41.2 261.9M41.2 261.9 L42.1 266.0 L43.1 270.1M11.9 280.3 L13.6 278.6 L15.2 276.9 L16.7 275.3M14.0 319.8 L16.6 320.5 L19.5 320.9" stroke-width="2.5"/><path d="M75.7 192.1 L79.9 193.8 L84.8 195.5M45.2 182.9 L46.0 183.9 L47.0 185.3M43.7 167.3 L44.4 167.2 L45.5 167.0M47.6 153.4 L47.4 152.4 L47.2 150.9M47.8 148.0 L47.8 147.0 L47.8 146.3M40.0 137.5 L39.1 135.1 L38.4 132.7 L37.8 130.3M67.9 129.6 L69.9 127.9 L72.1 126.2M51.9 145.9 L51.5 144.0 L51.0 141.5M51.0 141.5 L50.4 138.4 L50.0 135.2M82.3 156.7 L84.1 158.0 L85.9 159.2 L87.9 159.8 L90.2 159.9M90.2 159.9 L92.8 159.6 L95.5 159.0 L97.9 158.4M71.9 155.5 L73.0 154.4 L74.5 153.0M68.9 176.5 L71.9 174.8 L75.1 173.8M6.6 106.1 L7.2 104.6 L8.1 103.2 L9.2 101.9 L10.7 101.1M6.2 153.7 L6.1 152.4 L6.1 150.5M12.4 139.9 L13.4 137.6 L14.8 134.3M14.8 134.3 L16.5 130.5 L18.3 126.9M11.8 154.1 L14.4 155.6 L17.2 156.9M2.4 176.1 L5.4 173.0 L8.7 170.1M59.9 208.0 L63.8 208.0 L67.7 207.7M59.9 208.0 L62.7 208.9 L66.6 210.3M87.1 243.2 L90.4 244.9 L93.4 246.5 L95.8 247.9M30.1 222.7 L30.0 220.0 L30.1 217.5M53.0 223.4 L55.9 222.0 L58.5 220.8M66.6 234.0 L71.2 234.1 L75.8 234.1M75.8 234.1 L79.9 233.9 L83.4 233.6M57.1 261.6 L61.3 261.0 L65.7 260.4 L69.9 259.9M43.1 270.1 L43.9 273.9 L44.8 277.2M49.9 261.9 L51.3 263.6 L53.3 266.0M53.3 266.0 L55.5 268.8 L57.8 271.5M16.7 275.3 L18.0 273.9 L19.2 272.7M10.0 281.9 L11.4 282.1 L13.3 282.5M13.3 282.5 L15.6 283.0 L17.9 283.4M19.5 320.9 L22.6 321.2 L25.5 321.5 L28.0 321.8M1.8 308.9 L2.5 310.1 L3.5 311.8M12.0 318.8 L12.4 317.2 L12.8 314.9M12.8 314.9 L13.5 312.2 L14.5 309.7" stroke-width="2.0"/><path d="M84.8 195.5 L90.3 197.4 L95.8 199.2M95.8 199.2 L100.5 200.7 L103.8 201.8M47.0 185.3 L48.0 186.7 L48.9 188.1M45.5 167.0 L46.5 166.6 L47.5 166.1M47.2 150.9 L47.0 149.5 L46.6 148.1M37.8 130.3 L37.3 127.9 L37.0 125.4M37.0 125.4 L36.7 122.7 L36.5 120.1M72.1 126.2 L74.5 124.6 L76.8 123.1M54.7 143.9 L55.9 143.2 L57.6 142.3M50.0 135.2 L49.9 131.9 L50.4 128.3M97.9 158.4 L99.8 157.8 L101.4 157.4 L102.6 157.0M53.0 159.2 L54.2 159.3 L55.9 159.4M74.5 153.0 L76.3 151.3 L78.1 149.5M78.1 149.5 L79.9 147.9 L81.5 146.2M81.5 146.2 L83.2 144.3 L84.9 142.5 L86.5 141.0M75.1 173.8 L78.6 173.1 L82.3 172.8 L86.1 172.7M86.1 172.7 L89.9 172.8 L93.9 173.4M10.7 101.1 L12.6 100.7 L14.7 100.4 L16.6 99.6 L18.0 97.9 L18.8 95.0M6.1 150.5 L6.2 148.6 L6.5 146.9M6.5 146.9 L7.0 145.3 L7.4 143.6 L7.5 141.8M9.2 127.0 L10.2 126.3 L11.6 125.2M18.3 126.9 L20.0 123.9 L21.7 121.6M17.2 156.9 L20.0 157.8 L22.9 158.2M8.7 170.1 L12.0 167.8 L15.6 166.4M15.6 166.4 L19.7 165.4 L23.9 164.7M9.2 101.9 L8.9 100.2 L8.5 97.7M8.5 97.7 L8.2 94.9 L7.9 92.2M18.0 97.9 L19.1 97.3 L20.7 96.4M20.7 96.4 L22.5 95.5 L24.4 94.6M67.7 207.7 L71.5 207.2 L75.6 206.6 L79.9 206.0M79.9 206.0 L84.9 205.2 L90.7 204.3 L96.4 203.4M66.6 210.3 L71.1 211.9 L75.8 213.2M75.8 213.2 L79.9 214.0 L83.7 214.0M95.8 247.9 L97.6 249.1 L98.9 250.1 L99.7 251.0M47.7 231.2 L48.5 232.3 L49.7 234.0M49.7 234.0 L50.7 235.7 L51.7 237.4M59.9 233.9 L61.0 233.5 L62.5 232.8M30.1 217.5 L30.6 215.2 L31.1 213.1M58.5 220.8 L61.1 219.8 L63.6 219.0 L65.9 218.4M65.9 218.4 L67.9 218.0 L69.6 217.9M83.4 233.6 L86.9 233.1 L90.2 232.6 L93.2 232.2M93.2 232.2 L95.8 231.9 L98.1 232.0M69.9 259.9 L74.4 259.6 L79.2 259.4 L83.9 259.2M34.0 250.2 L34.4 251.8 L35.0 254.0M44.8 277.2 L45.9 280.4 L46.9 283.5 L47.6 286.7M47.6 286.7 L47.9 289.8 L47.6 293.4M57.8 271.5 L59.9 273.9 L61.7 275.9M61.7 275.9 L63.5 277.9 L65.2 279.7 L66.8 281.2M47.9 289.8 L48.7 290.7 L49.9 291.9M49.9 291.9 L51.2 293.2 L52.6 294.6M8.0 249.9 L8.3 248.3 L8.6 246.1M8.6 246.1 L9.1 243.4 L9.6 240.6M19.2 272.7 L20.2 271.6 L21.1 270.7M4.9 285.1 L5.3 284.4 L5.8 283.4M17.9 283.4 L20.0 283.9 L21.9 284.3M4.0 286.9 L4.5 287.6 L5.2 288.6M5.2 288.6 L6.1 289.8 L7.0 291.0M28.0 321.8 L30.1 322.1 L32.1 322.5 L33.9 322.8M3.5 311.8 L4.7 313.4 L6.1 314.7M11.6 319.0 L12.8 318.5 L14.5 318.0M14.5 309.7 L16.0 307.8 L18.4 306.5" stroke-width="1.5"/><path d="M48.9 188.1 L49.8 189.6 L50.4 190.7M67.8 188.7 L67.8 190.4 L67.7 192.8M67.7 192.8 L67.9 195.1 L68.3 197.4M79.9 193.8 L80.5 195.1 L81.4 197.0M103.8 201.8 L104.7 202.2 L105.9 202.8M47.5 166.1 L48.4 165.6 L49.0 165.2M46.6 148.1 L46.2 146.6 L45.9 145.7M36.5 120.1 L36.4 117.9 L36.3 116.3M43.8 145.2 L43.8 144.2 L43.9 142.8M76.8 123.1 L78.9 121.8 L80.3 120.9M57.6 142.3 L59.4 141.4 L61.2 140.6M61.2 140.6 L63.0 139.8 L64.2 139.3M62.0 135.6 L62.2 134.4 L62.5 132.7M50.4 128.3 L51.3 124.1 L52.3 120.0M52.3 120.0 L53.3 116.4 L53.9 113.9M102.6 157.0 L103.5 156.5 L104.3 156.1 L104.8 155.9M55.9 159.4 L57.6 159.6 L59.3 160.0M59.3 160.0 L60.9 160.4 L62.1 160.8M86.5 141.0 L87.9 139.9 L89.1 139.3M89.1 139.3 L90.3 139.2 L91.4 139.2M91.4 139.2 L92.2 139.4 L92.9 139.5M93.9 173.4 L98.3 174.4 L102.6 175.6M102.6 175.6 L106.2 176.7 L108.8 177.4M66.1 178.8 L66.1 177.3 L66.3 175.2M66.3 175.2 L66.5 173.0 L67.1 171.0M18.8 95.0 L19.4 90.9 L19.6 86.5 L19.8 82.6 L20.0 80.0M7.5 141.8 L7.5 139.9 L7.5 138.5M11.6 125.2 L13.1 124.3 L14.6 123.5M7.0 117.9 L6.0 117.4 L4.6 116.7M4.6 116.7 L3.2 116.0 L1.8 115.3M7.2 104.6 L6.0 103.5 L4.2 102.0M21.7 121.6 L23.7 119.6 L25.6 117.9M25.6 117.9 L27.2 116.5 L28.4 115.5M22.9 158.2 L26.2 158.3 L29.5 158.1M29.5 158.1 L32.4 157.9 L34.3 157.8M11.8 154.1 L12.6 153.7 L13.9 153.1M23.9 164.7 L27.4 164.2 L30.0 163.8M5.4 173.0 L5.2 172.3 L4.9 171.2M7.9 92.2 L8.0 90.0 L8.5 88.3M8.5 88.3 L9.4 86.8 L10.4 85.6M10.4 85.6 L11.4 84.7 L12.0 84.0M24.4 94.6 L26.0 94.0 L27.4 93.7M27.4 93.7 L28.8 93.7 L30.1 93.8M30.1 93.8 L31.2 93.9 L31.9 94.0M96.4 203.4 L101.4 202.6 L104.8 202.0M43.7 205.1 L45.0 204.9 L46.9 204.5M46.9 204.5 L48.8 204.0 L50.5 203.7M55.8 207.6 L57.1 208.7 L58.8 210.2M58.8 210.2 L60.6 211.7 L62.4 213.2M71.5 207.2 L72.6 206.4 L74.3 205.2M83.7 214.0 L87.7 213.6 L91.4 213.0M91.4 213.0 L94.6 212.4 L96.8 212.0M99.7 251.0 L100.3 251.8 L100.8 252.3M51.7 237.4 L52.5 239.3 L53.0 240.6M62.5 232.8 L64.0 232.0 L65.4 231.3M67.9 236.1 L69.2 235.6 L71.0 234.9M71.0 234.9 L72.7 234.0 L74.2 232.9M31.1 213.1 L31.6 211.3 L31.9 210.0M30.6 225.9 L30.1 225.5 L29.3 224.8M29.3 224.8 L28.6 224.2 L27.8 223.6M69.6 217.9 L71.2 218.0 L72.5 218.4M72.5 218.4 L73.5 218.7 L74.3 219.0M49.8 225.2 L51.1 225.7 L52.9 226.3M98.1 232.0 L100.2 232.2 L101.8 232.5M101.8 232.5 L103.2 232.8 L104.2 232.9M83.9 259.2 L88.0 259.0 L90.9 258.9M35.0 254.0 L35.5 256.3 L35.8 258.6M35.8 258.6 L36.0 260.9 L36.1 262.5M43.7 259.3 L43.0 260.9 L41.9 263.3M41.9 263.3 L40.7 265.5 L39.1 267.5M57.1 261.6 L58.4 260.5 L60.1 258.9M47.6 293.4 L46.9 297.2 L45.9 300.8M45.9 300.8 L44.9 304.0 L44.3 306.2M42.1 266.0 L43.4 266.8 L45.2 268.1M45.2 268.1 L46.9 269.4 L48.5 270.9M44.8 277.2 L44.4 278.3 L43.9 279.8M66.8 281.2 L68.3 282.3 L69.7 282.7M69.7 282.7 L71.1 282.7 L72.4 282.4M72.4 282.4 L73.5 282.1 L74.3 281.9M52.6 294.6 L53.9 295.8 L55.2 297.0M55.2 297.0 L56.6 298.1 L57.9 299.2M57.9 299.2 L59.1 300.2 L59.9 300.8M9.6 240.6 L10.0 237.9 L10.4 235.0M10.4 235.0 L10.9 231.8 L11.3 228.6M11.3 228.6 L11.7 225.9 L12.0 224.0M21.1 270.7 L21.8 270.0 L22.4 269.5M5.8 283.4 L6.2 282.5 L6.4 281.4M6.4 281.4 L6.5 280.3 L6.5 279.6M11.9 280.3 L12.5 280.0 L13.5 279.6M13.5 279.6 L14.4 279.3 L15.4 279.2M21.9 284.3 L23.8 284.8 L25.7 285.2M25.7 285.2 L27.2 285.6 L28.4 285.9M7.0 291.0 L8.0 291.8 L9.2 292.5M9.2 292.5 L10.5 293.0 L11.9 293.3M11.9 293.3 L13.1 293.6 L14.0 293.8M33.9 322.8 L35.3 323.0 L36.3 323.2M6.1 314.7 L7.6 316.0 L8.7 316.9M14.5 318.0 L16.2 317.5 L17.9 317.3M18.4 306.5 L21.5 305.5 L24.9 304.8M24.9 304.8 L27.9 304.3 L30.0 303.8" stroke-width="1.0"/><path d="M68.3 197.4 L68.9 199.7 L69.3 201.3M81.4 197.0 L82.1 199.0 L82.6 201.0M82.6 201.0 L82.8 203.1 L83.0 204.6M105.9 202.8 L107.2 203.4 L108.5 203.8M108.5 203.8 L109.8 204.3 L110.7 204.6M43.9 142.8 L44.1 141.4 L44.4 140.0M44.4 140.0 L44.8 138.6 L45.2 137.6M62.5 132.7 L62.7 131.0 L62.5 129.3M62.5 129.3 L62.2 127.6 L61.9 126.4M67.1 171.0 L67.8 169.0 L68.3 167.6M14.6 123.5 L16.2 122.8 L17.4 122.3M1.8 115.3 L0.4 114.6 L-0.6 114.1M4.2 102.0 L2.5 100.4 L1.2 98.5M1.2 98.5 L0.0 96.5 L-0.8 95.1M13.9 153.1 L15.1 152.5 L16.3 152.0M16.3 152.0 L17.6 151.6 L18.5 151.3M4.9 171.2 L4.5 170.2 L3.9 169.3M3.9 169.3 L3.3 168.4 L2.8 167.8M50.5 203.7 L52.2 203.2 L53.8 202.7 L55.6 201.9M55.6 201.9 L57.3 200.9 L58.5 200.3M62.4 213.2 L64.2 214.7 L65.4 215.7M74.3 205.2 L75.9 204.2 L77.7 203.4M77.7 203.4 L79.6 202.7 L80.9 202.2M65.4 231.3 L66.8 230.4 L67.8 229.8M74.2 232.9 L75.7 231.6 L76.7 230.7M27.8 223.6 L26.9 223.1 L26.3 222.8M52.9 226.3 L54.6 227.0 L56.2 228.0M56.2 228.0 L57.8 229.0 L58.9 229.8M39.1 267.5 L37.4 269.5 L36.2 270.8M60.1 258.9 L61.7 257.2 L63.1 255.3M63.1 255.3 L64.3 253.3 L65.1 251.9M48.5 270.9 L50.1 272.4 L51.2 273.4M43.9 279.8 L43.3 281.3 L42.8 282.9M42.8 282.9 L42.2 284.4 L41.9 285.5M15.4 279.2 L16.4 279.2 L17.1 279.1M17.9 317.3 L19.7 317.2 L20.9 317.1" stroke-width="0.5"/></g><g opacity="0.8" fill="none" stroke="#0b0502" stroke-linecap="round" stroke-linejoin="round"><path d="M662.8 257.5 L661.0 256.5 L658.3 255.2" stroke-width="9.5"/><path d="M658.3 255.2 L655.3 253.6 L652.3 251.8" stroke-width="8.5"/><path d="M652.3 251.8 L649.8 249.9 L647.9 247.8" stroke-width="8.0"/><path d="M647.9 247.8 L646.3 245.3 L644.8 242.8 L643.4 240.3" stroke-width="7.5"/><path d="M661.8 188.8 L645.8 181.8M643.4 240.3 L641.9 237.9 L640.1 235.6" stroke-width="7.0"/><path d="M640.1 235.6 L638.3 233.3 L636.5 231.1" stroke-width="6.5"/><path d="M645.8 181.8 L645.3 181.5 L644.6 180.9M645.8 181.8 L645.0 179.4 L643.9 176.0M636.5 231.1 L635.0 229.3 L633.9 227.9M649.8 249.9 L648.1 250.4 L645.7 250.9" stroke-width="6.0"/><path d="M643.9 176.0 L642.5 172.0 L641.3 167.8M641.3 167.8 L640.3 163.8 L639.5 159.7M645.7 250.9 L642.9 251.7 L640.2 252.7M640.2 252.7 L637.9 253.9 L635.9 255.5" stroke-width="5.5"/><path d="M645.8 181.8 L643.7 182.1 L640.8 182.6 L637.3 183.1M639.5 159.7 L639.0 155.0 L638.5 150.5M638.5 150.5 L638.1 146.6 L637.9 143.9M633.9 227.9 L633.2 227.4 L632.4 226.7M633.9 227.9 L632.2 226.2 L629.9 223.8 L627.3 221.0M635.9 255.5 L634.2 257.3 L632.6 259.3 L631.2 261.5" stroke-width="5.0"/><path d="M644.6 180.9 L643.9 180.4 L643.2 179.8M637.3 183.1 L633.6 183.5 L629.9 183.8 L626.1 183.9M627.3 221.0 L624.5 218.2 L621.9 216.0 L619.5 214.2M631.2 261.5 L629.9 263.9 L628.8 266.7" stroke-width="4.5"/><path d="M626.1 183.9 L622.2 183.9 L618.1 183.8 L614.0 183.7M637.9 143.9 L637.6 143.2 L637.2 142.1M637.9 143.9 L638.1 141.9 L638.3 139.2 L638.7 136.0M637.9 143.9 L636.7 141.9 L635.1 139.1 L633.3 135.9 L631.5 132.7M640.3 163.8 L638.9 162.1 L636.9 159.5 L634.6 156.7M632.4 226.7 L631.6 225.9 L630.9 225.0M619.5 214.2 L617.2 212.6 L614.8 211.2 L612.4 210.0M633.9 227.9 L631.6 228.2 L628.4 228.4M628.8 266.7 L627.8 269.9 L627.0 273.1M627.0 273.1 L626.4 275.9 L625.9 277.9" stroke-width="4.0"/><path d="M638.7 136.0 L639.2 132.8 L639.9 129.9 L640.8 127.4M631.5 132.7 L629.9 129.9 L628.5 127.6 L627.1 125.6 L625.9 123.7M634.6 156.7 L632.2 153.9 L629.9 151.9 L627.6 150.5M629.9 183.8 L628.0 182.1 L625.3 179.6 L622.2 176.8M612.4 210.0 L609.9 209.0 L607.2 208.0 L604.5 207.3M628.4 228.4 L624.8 228.8 L621.1 229.3 L617.9 229.9M625.9 277.9 L625.6 278.6 L625.3 279.7M629.9 263.9 L627.7 264.5 L624.5 265.5" stroke-width="3.5"/><path d="M643.2 179.8 L642.6 179.1 L642.2 178.6M614.0 183.7 L609.9 183.8 L605.9 184.0 L601.9 184.3M637.2 142.1 L636.8 141.1 L636.5 140.0M640.8 127.4 L642.1 125.1 L643.5 122.8 L644.8 120.4M625.9 123.7 L624.8 121.8 L623.9 119.9 L623.1 117.8M627.6 150.5 L625.2 149.5 L622.8 148.9 L620.3 148.3M622.2 176.8 L618.9 174.0 L615.9 171.8 L613.1 170.2M613.1 170.2 L610.2 168.8 L607.4 167.7 L604.6 166.7M661.8 152.9 L660.7 150.9 L659.1 148.1M661.8 200.4 L659.3 200.1 L655.7 199.6M604.5 207.3 L601.6 206.6 L598.8 206.2 L595.9 206.0 L593.1 206.0M617.9 229.9 L615.3 230.9 L613.0 232.2 L610.8 233.6M625.9 277.9 L624.5 279.2 L622.4 281.1M622.4 281.1 L620.1 283.4 L617.8 285.7 L615.9 287.8M624.5 265.5 L620.9 266.5 L617.2 267.4" stroke-width="3.0"/><path d="M601.9 184.3 L597.9 184.6 L593.9 185.1 L589.9 185.8 L585.8 186.8M639.0 155.0 L639.8 154.3 L641.1 153.3M644.8 120.4 L645.8 117.9 L646.7 115.2 L647.5 112.4M647.5 112.4 L648.1 109.5 L648.5 106.6 L648.8 103.9 L648.9 101.4M623.1 117.8 L622.3 115.7 L621.8 113.6 L621.6 111.7 L621.9 109.9M621.9 109.9 L622.9 108.5 L624.5 107.4 L626.3 106.4 L628.2 105.3M623.9 119.9 L622.5 120.0 L620.4 120.3M620.3 148.3 L617.9 147.9 L615.5 147.5 L613.1 147.4M613.1 147.4 L610.7 147.4 L608.3 147.3 L605.9 146.9 L603.4 146.1M604.6 166.7 L601.9 165.8 L599.4 165.3 L596.9 165.0M659.1 148.1 L657.2 144.9 L655.4 142.0M655.7 199.6 L651.6 199.1 L647.5 198.6M647.5 198.6 L643.8 198.4 L640.8 198.5M630.9 225.0 L630.2 224.1 L629.8 223.4M593.1 206.0 L590.4 206.2 L587.6 206.6 L584.8 207.2M610.8 233.6 L608.5 234.9 L605.9 235.9M605.9 235.9 L602.9 236.5 L599.7 236.8M641.9 237.9 L642.7 236.3 L643.9 234.0M625.3 279.7 L624.9 280.7 L624.5 281.8M615.9 287.8 L614.4 289.8 L613.1 291.8 L612.0 293.8M612.0 293.8 L610.9 295.8 L609.9 297.8M617.2 267.4 L613.9 267.9 L611.0 267.8M611.0 267.8 L608.2 267.5 L605.4 266.9 L602.7 266.3M661.8 293.8 L659.6 293.5 L656.4 292.9" stroke-width="2.5"/><path d="M585.8 186.8 L581.4 188.1 L577.1 189.6 L573.2 190.8M637.3 183.1 L636.0 182.6 L634.1 181.9M636.5 140.0 L636.1 139.0 L635.9 138.3M648.9 101.4 L648.8 98.9 L648.6 96.4 L648.2 94.1M628.2 105.3 L629.9 103.9 L631.3 102.1 L632.6 100.0M620.4 120.3 L618.1 120.5 L615.8 120.4M615.8 120.4 L613.9 119.9 L612.5 118.8M613.9 119.9 L613.5 121.4 L613.1 123.7M613.1 123.7 L612.4 126.1 L611.4 128.4M603.4 146.1 L600.8 145.2 L598.2 144.1 L595.8 142.9M629.9 151.9 L628.5 152.8 L626.6 154.2M596.9 165.0 L594.5 164.9 L592.2 164.6 L589.9 163.8 L587.7 162.6M587.7 162.6 L585.6 160.9 L583.6 159.0 L581.7 157.3M601.9 165.8 L601.0 164.4 L599.8 162.4M589.9 163.8 L588.3 165.0 L585.9 166.6M655.4 142.0 L653.8 139.9 L652.6 138.7M640.8 198.5 L637.8 198.7 L635.1 199.1 L632.4 199.4M621.9 216.0 L620.2 216.3 L617.9 216.7M599.7 236.8 L596.4 237.0 L593.1 237.3 L589.9 237.9M643.9 234.0 L645.2 231.3 L646.1 228.5M627.8 269.9 L626.9 270.3 L625.7 271.0M609.9 297.8 L609.0 299.9 L608.4 301.9M602.7 266.3 L599.9 265.9 L596.8 265.6M609.9 297.8 L608.6 297.6 L606.6 297.4M656.4 292.9 L652.7 292.3 L649.0 291.9M661.8 319.8 L660.1 319.6 L657.7 319.4M657.7 319.4 L654.9 319.1 L652.2 318.9" stroke-width="2.0"/><path d="M573.2 190.8 L570.0 191.8 L567.4 192.4 L565.4 192.7M634.1 181.9 L632.3 181.1 L630.5 180.1M626.1 183.9 L625.5 185.1 L624.5 186.7M624.5 186.7 L623.5 188.3 L622.6 189.7M609.9 183.8 L608.6 183.4 L606.7 182.8M597.9 184.6 L597.3 185.8 L596.4 187.4M641.1 153.3 L642.2 152.2 L643.2 151.0M648.2 94.1 L647.8 92.0 L647.3 89.8 L646.6 87.7M642.1 125.1 L643.0 124.7 L644.4 124.3M632.6 100.0 L633.9 97.8 L635.0 95.7 L635.9 94.0 L636.4 92.6M628.5 127.6 L628.6 126.5 L628.8 125.0M612.5 118.8 L611.2 117.2 L610.1 115.4 L609.1 113.5M609.1 113.5 L607.9 111.9 L606.6 110.4M611.4 128.4 L609.9 129.9 L607.7 130.5M607.7 130.5 L604.8 130.7 L601.7 130.4 L598.6 130.1M621.9 109.9 L621.2 108.8 L620.3 107.3M620.3 107.3 L619.2 105.5 L618.4 103.7M595.8 142.9 L593.9 141.9 L592.5 140.8 L591.4 139.6M626.6 154.2 L624.4 155.7 L622.0 157.0M622.0 157.0 L619.9 157.8 L617.7 158.1M581.7 157.3 L580.0 155.9 L578.4 154.7 L577.0 153.8M622.2 176.8 L622.1 175.5 L622.2 173.7M599.8 162.4 L598.3 160.0 L597.0 157.8M597.0 157.8 L595.9 155.9 L595.2 154.3M585.9 166.6 L583.2 168.4 L580.4 170.2M580.4 170.2 L578.0 171.8 L575.7 173.2M648.8 103.9 L649.6 102.5 L650.6 100.5M650.6 100.5 L651.7 98.2 L652.9 95.9M652.6 138.7 L651.4 138.0 L650.3 137.8M661.8 129.9 L657.8 121.9M632.4 199.4 L629.9 199.6 L627.3 199.5M627.3 199.5 L624.7 199.4 L622.3 199.2M584.8 207.2 L581.9 208.0 L578.9 209.1 L575.5 210.5M617.9 216.7 L615.6 217.2 L613.3 217.8M609.9 209.0 L608.4 209.7 L606.2 210.6M589.9 237.9 L586.7 239.0 L583.4 240.5 L580.2 242.0M646.1 228.5 L646.2 225.9 L645.3 223.4M645.3 223.4 L643.4 220.6 L641.2 217.9M625.7 271.0 L624.5 271.6 L623.2 272.1M624.5 281.8 L624.2 282.8 L623.9 283.6M608.4 301.9 L607.7 304.0 L606.9 305.9 L605.9 307.8M605.9 307.8 L604.4 309.7 L602.6 311.5 L600.7 313.3M596.8 265.6 L593.5 265.4 L590.3 265.3M606.6 297.4 L604.4 297.0 L602.1 296.5M602.1 296.5 L599.9 295.8 L597.7 294.8M649.0 291.9 L645.8 291.8 L643.0 292.3M643.0 292.3 L640.2 293.2 L637.6 294.2M652.2 318.9 L649.8 318.8 L647.9 318.9M661.8 273.9 L649.8 271.9M661.8 329.8 L653.8 327.8M658.8 218.0 L658.3 216.8 L657.6 215.2M657.6 215.2 L656.8 213.4 L656.2 211.6" stroke-width="1.5"/><path d="M565.4 192.7 L563.8 192.8 L562.5 192.9 L561.6 193.0M630.5 180.1 L628.9 179.0 L627.7 178.3M622.6 189.7 L621.6 191.1 L620.5 192.4 L619.1 193.7M619.1 193.7 L617.6 194.9 L616.5 195.7M620.5 192.4 L619.7 192.5 L618.5 192.6M606.7 182.8 L604.9 182.2 L603.0 181.6M596.4 187.4 L595.7 189.1 L595.1 190.9M585.8 186.8 L585.2 187.9 L584.3 189.4M643.2 151.0 L644.2 149.6 L644.8 148.7M646.6 87.7 L645.9 85.8 L645.3 84.1 L644.8 83.0M644.4 124.3 L645.7 123.9 L647.1 123.7M646.7 115.2 L646.3 114.1 L645.6 112.5M636.4 92.6 L636.7 91.4 L636.9 90.4 L637.0 89.6 L637.1 89.0M628.8 125.0 L629.1 123.4 L629.6 121.9M623.1 117.8 L621.8 117.4 L620.0 116.8M620.0 116.8 L618.3 116.0 L616.8 114.9M606.6 110.4 L605.1 108.9 L603.6 107.6M603.6 107.6 L602.4 106.4 L601.5 105.5M615.8 120.4 L615.2 119.5 L614.4 118.2M598.6 130.1 L595.9 129.9 L593.5 129.7M593.5 129.7 L591.2 129.5 L589.0 129.3M589.0 129.3 L587.2 129.0 L585.9 128.9M612.4 126.1 L613.3 127.2 L614.5 128.6M618.4 103.7 L617.9 101.9 L617.9 100.2M617.9 100.2 L618.4 98.4 L618.9 96.6M618.9 96.6 L619.5 95.0 L619.9 94.0M591.4 139.6 L590.6 138.5 L590.0 137.6 L589.5 136.9M622.8 148.9 L622.5 147.8 L622.2 146.2M622.2 146.2 L621.8 144.6 L621.3 143.1M610.7 147.4 L609.8 148.2 L608.5 149.4M617.7 158.1 L615.4 157.9 L613.2 157.5M613.2 157.5 L611.3 157.1 L609.9 156.9M577.0 153.8 L575.7 153.0 L574.7 152.3 L574.0 151.9M622.2 173.7 L622.3 171.9 L622.8 170.1M613.1 170.2 L611.7 170.1 L609.8 170.0M609.8 170.0 L607.9 169.7 L606.0 169.3M604.6 166.7 L604.3 165.6 L604.0 164.0M604.0 164.0 L603.8 162.4 L603.8 160.8M595.2 154.3 L594.7 152.9 L594.4 151.6M594.4 151.6 L594.1 150.6 L593.9 149.9M575.7 173.2 L573.3 174.7 L571.2 175.9M571.2 175.9 L569.3 177.0 L568.0 177.8M652.9 95.9 L653.8 94.0 L654.6 92.3M654.6 92.3 L655.3 90.6 L655.9 89.1M655.9 89.1 L656.5 87.9 L656.8 87.0M650.3 137.8 L649.5 137.6 L648.8 137.5M657.2 144.9 L657.7 144.4 L658.5 143.6M661.8 80.0 L655.8 76.0M622.3 199.2 L620.3 198.9 L618.9 198.8M655.7 199.6 L655.2 198.9 L654.5 197.9M654.5 197.9 L653.9 196.9 L653.5 195.8M643.8 198.4 L642.9 199.1 L641.6 200.2M575.5 210.5 L572.3 212.1 L569.5 213.4 L567.6 214.4M613.3 217.8 L611.0 218.4 L609.4 218.9M606.2 210.6 L604.0 211.4 L601.7 212.0M580.2 242.0 L577.5 243.4 L575.6 244.3M615.3 230.9 L614.0 230.3 L612.2 229.4M612.2 229.4 L610.3 228.4 L608.5 227.5M602.9 236.5 L601.8 235.8 L600.3 234.7M641.2 217.9 L639.2 215.6 L637.9 214.0M645.2 231.3 L644.6 230.4 L643.7 229.2M623.2 272.1 L621.8 272.5 L620.9 272.7M600.7 313.3 L599.1 314.8 L597.9 315.8M620.1 283.4 L618.6 284.0 L616.6 284.9M616.6 284.9 L614.6 286.0 L612.7 287.2M613.1 291.8 L613.5 292.7 L613.9 293.9M590.3 265.3 L587.5 265.2 L585.5 265.1M611.0 267.8 L610.4 268.4 L609.5 269.2M609.5 269.2 L608.7 270.1 L607.8 270.9M597.7 294.8 L595.3 293.4 L593.0 292.0M593.0 292.0 L591.0 290.7 L589.5 289.8M637.6 294.2 L635.4 295.2 L633.9 295.8M647.9 318.9 L646.0 319.1 L644.3 319.4M644.3 319.4 L642.9 319.6 L641.9 319.8M656.2 211.6 L655.8 210.0 L655.9 208.6M655.9 208.6 L656.4 207.1 L656.9 205.9M656.9 205.9 L657.5 204.8 L657.8 204.0" stroke-width="1.0"/><path d="M618.5 192.6 L617.4 192.6 L616.2 192.5M616.2 192.5 L615.1 192.4 L614.3 192.2M603.0 181.6 L601.1 181.0 L599.8 180.6M595.1 190.9 L594.6 192.7 L594.3 194.0M584.3 189.4 L583.6 190.9 L583.1 192.5M583.1 192.5 L582.8 194.2 L582.5 195.4M647.1 123.7 L648.4 123.5 L649.4 123.3M645.6 112.5 L645.0 110.9 L644.3 109.3M644.3 109.3 L643.6 107.7 L643.1 106.6M629.6 121.9 L630.1 120.4 L630.5 119.3M616.8 114.9 L615.3 113.6 L614.3 112.7M614.4 118.2 L613.6 116.8 L612.8 115.5M612.8 115.5 L612.0 114.2 L611.4 113.2M614.5 128.6 L615.8 130.1 L617.0 131.6M617.0 131.6 L618.2 133.1 L619.0 134.2M621.3 143.1 L620.8 141.6 L620.4 140.5M608.5 149.4 L607.3 150.5 L606.0 151.6M606.0 151.6 L604.6 152.7 L603.7 153.5M622.8 170.1 L623.4 168.4 L623.9 167.2M606.0 169.3 L604.2 168.8 L602.9 168.4M603.8 160.8 L603.9 159.2 L604.0 158.0M658.5 143.6 L659.4 142.8 L660.2 142.1M660.2 142.1 L661.1 141.5 L661.8 141.0M653.5 195.8 L653.1 194.6 L652.9 193.8M641.6 200.2 L640.3 201.2 L639.0 202.2M639.0 202.2 L637.6 203.2 L636.7 203.9M601.7 212.0 L599.4 212.4 L597.8 212.7M608.5 227.5 L606.6 226.7 L605.3 226.0M600.3 234.7 L598.7 233.5 L597.3 232.2M597.3 232.2 L596.0 230.9 L595.1 229.9M643.7 229.2 L642.9 227.9 L642.3 226.5M642.3 226.5 L641.6 225.1 L641.2 224.1M612.7 287.2 L610.9 288.5 L609.6 289.4M613.9 293.9 L614.5 295.1 L615.0 296.3M615.0 296.3 L615.5 297.5 L615.9 298.3M607.8 270.9 L606.9 271.7 L606.3 272.3" stroke-width="0.5"/></g><path d="M-2 415.5 L30 411.5 L28.6 390 A32.8 32 0 0 1 94.2 390 L95.5 404 L102.5 403.5 L104.800 381.500 A26 26 0 0 1 156.800 381.500 L155.5 399 L162 398.5 C160.500 392 160.300 388 160.500 385 C160 368 172 358 187.5 358 C199 358 206 364 209.5 371.5 L220 397.5 C232 397 240 397 246 397.5 C270 398 300 400 330 403 C400 409 470 417 520 419 C580 419 620 414 662 410 L662 497 L-2 497Z" fill="#000"/><text x="86.1" y="65.4" font-size="43.6" font-weight="bold" fill="#120a05" textLength="490.1" lengthAdjust="spacingAndGlyphs" stroke="#120a05" stroke-width="1.6">TOTAL SPENDING ON HALLOWEEN</text><g transform="scale(5.7391)"><rect x="21.7" y="20.0" width="4.5" height="2.7" fill="#8a8a8a"/><rect x="21.7" y="23.3" width="4.5" height="2.7" fill="#f7a01c"/><rect x="21.7" y="26.6" width="4.5" height="2.7" fill="#c9c9c9"/><rect x="21.7" y="29.9" width="4.5" height="2.7" fill="#5a5a5a"/><rect x="21.7" y="33.2" width="4.5" height="2.7" fill="#8a8a8a"/><rect x="21.7" y="36.5" width="4.5" height="2.7" fill="#f7a01c"/><rect x="21.7" y="39.8" width="4.5" height="2.7" fill="#c9c9c9"/><rect x="21.7" y="43.1" width="4.5" height="2.7" fill="#5a5a5a"/><rect x="21.7" y="46.4" width="4.5" height="2.7" fill="#8a8a8a"/><rect x="35.2" y="24.2" width="4.5" height="2.7" fill="#1e9a48"/><rect x="35.2" y="27.5" width="4.5" height="2.7" fill="#1c62c4"/><rect x="35.2" y="30.8" width="4.5" height="2.7" fill="#a0282c"/><rect x="35.2" y="34.1" width="4.5" height="2.7" fill="#1e9a48"/><rect x="35.2" y="37.4" width="4.5" height="2.7" fill="#1c62c4"/><rect x="35.2" y="40.7" width="4.5" height="2.7" fill="#a0282c"/><rect x="35.2" y="44.0" width="4.5" height="2.7" fill="#1e9a48"/><rect x="35.2" y="47.3" width="4.5" height="2.7" fill="#1c62c4"/><rect x="48.4" y="23.3" width="11.5" height="2.7" fill="#f05a28"/><rect x="48.4" y="26.6" width="11.5" height="2.7" fill="#f05a28"/><rect x="48.4" y="29.9" width="11.5" height="2.7" fill="#f05a28"/><rect x="48.4" y="33.2" width="11.5" height="2.7" fill="#f05a28"/><rect x="48.4" y="36.5" width="11.5" height="2.7" fill="#f05a28"/><rect x="48.4" y="39.8" width="11.5" height="2.7" fill="#f05a28"/><rect x="48.4" y="43.1" width="11.5" height="2.7" fill="#f05a28"/><rect x="48.4" y="46.4" width="11.5" height="2.7" fill="#f05a28"/><rect x="68.2" y="26.0" width="8.2" height="2.7" fill="#f7901e"/><rect x="68.2" y="29.3" width="8.2" height="2.7" fill="#7a2aa0"/><rect x="68.2" y="32.6" width="8.2" height="2.7" fill="#f05a28"/><rect x="68.2" y="35.9" width="8.2" height="2.7" fill="#f7901e"/><rect x="68.2" y="39.2" width="8.2" height="2.7" fill="#7a2aa0"/><rect x="68.2" y="42.5" width="8.2" height="2.7" fill="#f05a28"/><rect x="68.2" y="45.8" width="8.2" height="2.7" fill="#f7901e"/><rect x="86.1" y="17.7" width="11.3" height="2.7" fill="#8ad0f0"/><rect x="86.1" y="21.0" width="11.3" height="2.7" fill="#f08ab0"/><rect x="86.1" y="24.3" width="11.3" height="2.7" fill="#b0e070"/><rect x="86.1" y="27.6" width="11.3" height="2.7" fill="#9a9af0"/><rect x="86.1" y="30.9" width="11.3" height="2.7" fill="#8ad0f0"/><rect x="86.1" y="34.2" width="11.3" height="2.7" fill="#f08ab0"/><rect x="86.1" y="37.5" width="11.3" height="2.7" fill="#b0e070"/><rect x="86.1" y="40.8" width="11.3" height="2.7" fill="#9a9af0"/><rect x="86.1" y="44.1" width="11.3" height="2.7" fill="#8ad0f0"/><rect x="86.1" y="47.4" width="11.3" height="2.7" fill="#f08ab0"/></g><text x="120.5" y="307.6" font-size="18.4" font-weight="bold" fill="#8a1a0c" textLength="37.3" lengthAdjust="spacingAndGlyphs" >2005</text><text x="198.0" y="307.6" font-size="18.4" font-weight="bold" fill="#8a1a0c" textLength="37.3" lengthAdjust="spacingAndGlyphs" >2007</text><text x="292.7" y="307.6" font-size="18.4" font-weight="bold" fill="#8a1a0c" textLength="37.3" lengthAdjust="spacingAndGlyphs" >2009</text><text x="396.0" y="307.6" font-size="18.4" font-weight="bold" fill="#8a1a0c" textLength="37.3" lengthAdjust="spacingAndGlyphs" >2011</text><text x="507.9" y="307.6" font-size="18.4" font-weight="bold" fill="#8a1a0c" textLength="37.3" lengthAdjust="spacingAndGlyphs" >2013</text><text x="221.5" y="344.3" font-size="16.1" font-weight="normal" fill="#6a3a12" textLength="221.6" lengthAdjust="spacingAndGlyphs" >$2.6 billion will be spent on candy</text><text x="221.5" y="361.6" font-size="16.1" font-weight="normal" fill="#6a3a12" textLength="221.6" lengthAdjust="spacingAndGlyphs" >and $1.1 will be spent on costumes</text></svg><div class="a" style="left:27px;top:604px;width:119px;height:90px;background:#fff;border:1px solid #c4c4c4;box-sizing:border-box"></div><svg class="a" style="left:29px;top:606px" width="115" height="72" viewBox="0 0 660 413.2"><defs>
<radialGradient id="t4bg" gradientUnits="userSpaceOnUse" cx="325" cy="250" r="272" gradientTransform="translate(325 250) scale(1 1.21) translate(-325 -250)">
<stop offset="0" stop-color="#fbb034"/><stop offset="0.47" stop-color="#f9a11c"/><stop offset="0.667" stop-color="#f7901e"/><stop offset="0.765" stop-color="#f47b20"/><stop offset="0.86" stop-color="#f36c22"/><stop offset="1" stop-color="#f15a24"/>
</radialGradient>
<radialGradient id="t4mo" gradientUnits="userSpaceOnUse" cx="365" cy="262" r="215">
<stop offset="0" stop-color="#feef90"/><stop offset="0.3" stop-color="#fee988"/><stop offset="0.6" stop-color="#fdde84" stop-opacity="0.85"/><stop offset="0.85" stop-color="#fcd58c" stop-opacity="0.35"/><stop offset="1" stop-color="#fbd3a0" stop-opacity="0"/>
</radialGradient>
<linearGradient id="t4mv" gradientUnits="userSpaceOnUse" x1="360" y1="285" x2="295" y2="500">
<stop offset="0" stop-color="#f6923a" stop-opacity="0"/><stop offset="0.4" stop-color="#f6923a" stop-opacity="0.18"/><stop offset="0.75" stop-color="#f68e36" stop-opacity="0.42"/><stop offset="1" stop-color="#f58a32" stop-opacity="0.62"/>
</linearGradient>
<filter id="t4bl" x="-5%" y="-5%" width="110%" height="110%"><feGaussianBlur stdDeviation="1.2"/></filter>
<filter id="t4tx" x="0" y="0" width="100%" height="100%"><feTurbulence type="fractalNoise" baseFrequency="0.035" numOctaves="3" seed="4" result="n"/><feColorMatrix in="n" type="matrix" values="0 0 0 0 0.96  0 0 0 0 0.62  0 0 0 0 0.25  0.9 0.9 0 0 -0.72" result="c"/><feComposite in="c" in2="SourceGraphic" operator="in"/></filter>
</defs><rect x="0" y="0" width="660" height="495" fill="url(#t4bg)"/><g filter="url(#t4bl)"><circle cx="321.6" cy="301.3" r="198.7" fill="#fbd2a2"/><circle cx="321.6" cy="301.3" r="198.7" fill="url(#t4mo)"/><circle cx="321.6" cy="301.3" r="198.7" fill="url(#t4mv)"/></g><circle cx="321.6" cy="301.3" r="197" fill="#000" filter="url(#t4tx)"/><g opacity="0.8" fill="none" stroke="#0b0502" stroke-linecap="round" stroke-linejoin="round"><path d="M-2.0 203.8 L1.7 202.6 L7.1 201.0M7.1 201.0 L13.2 199.1 L19.1 197.0M-2.0 252.3 L0.6 251.7 L4.3 250.9M4.3 250.9 L8.5 250.0 L12.6 249.0 L16.0 247.9" stroke-width="7.5"/><path d="M19.1 197.0 L24.0 194.8 L27.7 192.2M16.0 247.9 L18.5 246.8 L20.7 245.7 L22.6 244.5" stroke-width="7.0"/><path d="M27.7 192.2 L31.1 189.3 L33.9 186.3M33.9 186.3 L36.2 183.6 L37.9 181.8M22.6 244.5 L24.3 243.3 L26.0 241.9M26.0 241.9 L27.3 240.4 L28.5 238.7" stroke-width="6.5"/><path d="M28.5 238.7 L29.5 236.9 L30.6 235.3 L31.9 233.9" stroke-width="6.0"/><path d="M37.9 181.8 L38.4 181.1 L39.1 180.2M37.9 181.8 L39.0 179.3 L40.4 175.6M40.4 175.6 L42.1 171.5 L43.7 167.3M31.9 233.9 L33.8 232.8 L36.1 231.9 L38.5 231.1M38.5 231.1 L40.5 230.4 L41.9 229.9" stroke-width="5.5"/><path d="M43.7 167.3 L44.9 163.8 L45.8 160.9M45.8 160.9 L46.6 158.0 L47.1 155.5M-2.0 158.8 L-0.5 158.0 L1.5 156.8 L3.9 155.3 L6.2 153.7" stroke-width="5.0"/><path d="M47.1 155.5 L47.6 153.4 L47.9 151.9M6.2 153.7 L8.0 151.9 L9.4 149.8 L10.5 147.6 L11.5 145.2 L12.1 142.6M41.9 229.9 L42.7 229.5 L43.7 228.9M0.0 301.8 L0.4 303.6 L1.0 306.0" stroke-width="4.5"/><path d="M39.1 180.2 L39.7 179.2 L40.3 178.2M37.9 181.8 L41.0 182.3 L45.2 182.9M47.9 151.9 L47.9 151.1 L47.9 150.1M12.1 142.6 L12.4 139.9 L12.1 136.9 L11.3 133.7 L10.3 130.3M41.9 229.9 L44.3 230.5 L47.7 231.2M47.7 231.2 L51.7 232.0 L55.9 232.9 L59.9 233.9M26.0 241.9 L27.9 244.0 L30.7 246.9M-2.0 288.8 L-0.3 287.9 L2.1 286.6M1.0 306.0 L1.8 308.9 L2.7 311.6 L4.0 313.8" stroke-width="4.0"/><path d="M45.2 182.9 L50.2 183.7 L55.3 184.7M47.9 151.9 L49.6 149.9 L51.9 147.1M44.9 163.8 L46.9 162.7 L49.7 161.1 L53.0 159.2M43.7 228.9 L44.7 228.2 L45.6 227.4M59.9 233.9 L63.8 235.0 L67.9 236.1 L72.1 237.3M30.7 246.9 L34.0 250.2 L37.2 253.4 L39.9 255.9M2.1 286.6 L4.9 285.1 L7.7 283.4M4.0 313.8 L5.5 315.5 L7.4 316.8 L9.4 318.0" stroke-width="3.5"/><path d="M40.3 178.2 L40.7 177.1 L41.1 176.3M55.3 184.7 L59.9 185.8 L64.0 187.1M47.9 150.1 L47.8 149.1 L47.8 148.0M47.9 151.9 L46.9 150.2 L45.5 147.9M51.9 147.1 L54.7 143.9 L57.4 140.6M53.0 159.2 L56.5 157.5 L59.9 156.3 L63.4 155.5M63.4 155.5 L67.3 154.9 L71.1 154.7 L74.7 154.6M10.3 130.3 L9.2 127.0 L8.4 123.9 L7.7 120.9 L7.0 117.9 L6.5 115.0M24.0 196.0 L26.1 197.1 L29.0 198.8M29.0 198.8 L32.5 200.7 L36.2 202.5 L39.9 204.0M72.1 237.3 L76.1 238.6 L79.9 239.9M31.9 233.9 L31.6 232.0 L31.1 229.2M39.9 255.9 L42.0 257.7 L43.7 259.3 L45.4 260.5M7.7 283.4 L10.0 281.9 L11.9 280.3M9.4 318.0 L11.6 319.0 L14.0 319.8" stroke-width="3.0"/><path d="M64.0 187.1 L67.8 188.7 L71.7 190.4 L75.7 192.1M45.5 147.9 L43.8 145.2 L42.2 142.5M42.2 142.5 L40.9 139.9 L40.0 137.5M57.4 140.6 L59.9 137.9 L62.0 135.6M62.0 135.6 L64.0 133.5 L66.0 131.5 L67.9 129.6M74.7 154.6 L77.9 154.9 L80.4 155.6 L82.3 156.7M59.9 185.0 L61.4 183.5 L63.5 181.3M63.5 181.3 L66.1 178.8 L68.9 176.5M6.5 115.0 L6.1 112.3 L6.0 109.9 L6.2 107.9 L6.6 106.1M8.0 151.9 L9.6 152.8 L11.8 154.1M-2.0 180.8 L-0.2 178.9 L2.4 176.1M39.9 204.0 L43.7 205.1 L47.6 206.2 L51.7 207.0M51.7 207.0 L55.8 207.6 L59.9 208.0M45.6 227.4 L46.5 226.6 L47.2 226.0M79.9 239.9 L83.5 241.5 L87.1 243.2M31.1 229.2 L30.6 225.9 L30.1 222.7M41.9 229.9 L43.9 228.8 L46.6 227.1M46.6 227.1 L49.8 225.2 L53.0 223.4M59.9 233.9 L62.7 234.0 L66.6 234.0M45.4 260.5 L47.3 261.3 L49.9 261.9M49.9 261.9 L53.3 262.0 L57.1 261.6M39.9 255.9 L40.5 258.4 L41.2 261.9M41.2 261.9 L42.1 266.0 L43.1 270.1M11.9 280.3 L13.6 278.6 L15.2 276.9 L16.7 275.3M14.0 319.8 L16.6 320.5 L19.5 320.9" stroke-width="2.5"/><path d="M75.7 192.1 L79.9 193.8 L84.8 195.5M45.2 182.9 L46.0 183.9 L47.0 185.3M43.7 167.3 L44.4 167.2 L45.5 167.0M47.6 153.4 L47.4 152.4 L47.2 150.9M47.8 148.0 L47.8 147.0 L47.8 146.3M40.0 137.5 L39.1 135.1 L38.4 132.7 L37.8 130.3M67.9 129.6 L69.9 127.9 L72.1 126.2M51.9 145.9 L51.5 144.0 L51.0 141.5M51.0 141.5 L50.4 138.4 L50.0 135.2M82.3 156.7 L84.1 158.0 L85.9 159.2 L87.9 159.8 L90.2 159.9M90.2 159.9 L92.8 159.6 L95.5 159.0 L97.9 158.4M71.9 155.5 L73.0 154.4 L74.5 153.0M68.9 176.5 L71.9 174.8 L75.1 173.8M6.6 106.1 L7.2 104.6 L8.1 103.2 L9.2 101.9 L10.7 101.1M6.2 153.7 L6.1 152.4 L6.1 150.5M12.4 139.9 L13.4 137.6 L14.8 134.3M14.8 134.3 L16.5 130.5 L18.3 126.9M11.8 154.1 L14.4 155.6 L17.2 156.9M2.4 176.1 L5.4 173.0 L8.7 170.1M59.9 208.0 L63.8 208.0 L67.7 207.7M59.9 208.0 L62.7 208.9 L66.6 210.3M87.1 243.2 L90.4 244.9 L93.4 246.5 L95.8 247.9M30.1 222.7 L30.0 220.0 L30.1 217.5M53.0 223.4 L55.9 222.0 L58.5 220.8M66.6 234.0 L71.2 234.1 L75.8 234.1M75.8 234.1 L79.9 233.9 L83.4 233.6M57.1 261.6 L61.3 261.0 L65.7 260.4 L69.9 259.9M43.1 270.1 L43.9 273.9 L44.8 277.2M49.9 261.9 L51.3 263.6 L53.3 266.0M53.3 266.0 L55.5 268.8 L57.8 271.5M16.7 275.3 L18.0 273.9 L19.2 272.7M10.0 281.9 L11.4 282.1 L13.3 282.5M13.3 282.5 L15.6 283.0 L17.9 283.4M19.5 320.9 L22.6 321.2 L25.5 321.5 L28.0 321.8M1.8 308.9 L2.5 310.1 L3.5 311.8M12.0 318.8 L12.4 317.2 L12.8 314.9M12.8 314.9 L13.5 312.2 L14.5 309.7" stroke-width="2.0"/><path d="M84.8 195.5 L90.3 197.4 L95.8 199.2M95.8 199.2 L100.5 200.7 L103.8 201.8M47.0 185.3 L48.0 186.7 L48.9 188.1M45.5 167.0 L46.5 166.6 L47.5 166.1M47.2 150.9 L47.0 149.5 L46.6 148.1M37.8 130.3 L37.3 127.9 L37.0 125.4M37.0 125.4 L36.7 122.7 L36.5 120.1M72.1 126.2 L74.5 124.6 L76.8 123.1M54.7 143.9 L55.9 143.2 L57.6 142.3M50.0 135.2 L49.9 131.9 L50.4 128.3M97.9 158.4 L99.8 157.8 L101.4 157.4 L102.6 157.0M53.0 159.2 L54.2 159.3 L55.9 159.4M74.5 153.0 L76.3 151.3 L78.1 149.5M78.1 149.5 L79.9 147.9 L81.5 146.2M81.5 146.2 L83.2 144.3 L84.9 142.5 L86.5 141.0M75.1 173.8 L78.6 173.1 L82.3 172.8 L86.1 172.7M86.1 172.7 L89.9 172.8 L93.9 173.4M10.7 101.1 L12.6 100.7 L14.7 100.4 L16.6 99.6 L18.0 97.9 L18.8 95.0M6.1 150.5 L6.2 148.6 L6.5 146.9M6.5 146.9 L7.0 145.3 L7.4 143.6 L7.5 141.8M9.2 127.0 L10.2 126.3 L11.6 125.2M18.3 126.9 L20.0 123.9 L21.7 121.6M17.2 156.9 L20.0 157.8 L22.9 158.2M8.7 170.1 L12.0 167.8 L15.6 166.4M15.6 166.4 L19.7 165.4 L23.9 164.7M9.2 101.9 L8.9 100.2 L8.5 97.7M8.5 97.7 L8.2 94.9 L7.9 92.2M18.0 97.9 L19.1 97.3 L20.7 96.4M20.7 96.4 L22.5 95.5 L24.4 94.6M67.7 207.7 L71.5 207.2 L75.6 206.6 L79.9 206.0M79.9 206.0 L84.9 205.2 L90.7 204.3 L96.4 203.4M66.6 210.3 L71.1 211.9 L75.8 213.2M75.8 213.2 L79.9 214.0 L83.7 214.0M95.8 247.9 L97.6 249.1 L98.9 250.1 L99.7 251.0M47.7 231.2 L48.5 232.3 L49.7 234.0M49.7 234.0 L50.7 235.7 L51.7 237.4M59.9 233.9 L61.0 233.5 L62.5 232.8M30.1 217.5 L30.6 215.2 L31.1 213.1M58.5 220.8 L61.1 219.8 L63.6 219.0 L65.9 218.4M65.9 218.4 L67.9 218.0 L69.6 217.9M83.4 233.6 L86.9 233.1 L90.2 232.6 L93.2 232.2M93.2 232.2 L95.8 231.9 L98.1 232.0M69.9 259.9 L74.4 259.6 L79.2 259.4 L83.9 259.2M34.0 250.2 L34.4 251.8 L35.0 254.0M44.8 277.2 L45.9 280.4 L46.9 283.5 L47.6 286.7M47.6 286.7 L47.9 289.8 L47.6 293.4M57.8 271.5 L59.9 273.9 L61.7 275.9M61.7 275.9 L63.5 277.9 L65.2 279.7 L66.8 281.2M47.9 289.8 L48.7 290.7 L49.9 291.9M49.9 291.9 L51.2 293.2 L52.6 294.6M8.0 249.9 L8.3 248.3 L8.6 246.1M8.6 246.1 L9.1 243.4 L9.6 240.6M19.2 272.7 L20.2 271.6 L21.1 270.7M4.9 285.1 L5.3 284.4 L5.8 283.4M17.9 283.4 L20.0 283.9 L21.9 284.3M4.0 286.9 L4.5 287.6 L5.2 288.6M5.2 288.6 L6.1 289.8 L7.0 291.0M28.0 321.8 L30.1 322.1 L32.1 322.5 L33.9 322.8M3.5 311.8 L4.7 313.4 L6.1 314.7M11.6 319.0 L12.8 318.5 L14.5 318.0M14.5 309.7 L16.0 307.8 L18.4 306.5" stroke-width="1.5"/><path d="M48.9 188.1 L49.8 189.6 L50.4 190.7M67.8 188.7 L67.8 190.4 L67.7 192.8M67.7 192.8 L67.9 195.1 L68.3 197.4M79.9 193.8 L80.5 195.1 L81.4 197.0M103.8 201.8 L104.7 202.2 L105.9 202.8M47.5 166.1 L48.4 165.6 L49.0 165.2M46.6 148.1 L46.2 146.6 L45.9 145.7M36.5 120.1 L36.4 117.9 L36.3 116.3M43.8 145.2 L43.8 144.2 L43.9 142.8M76.8 123.1 L78.9 121.8 L80.3 120.9M57.6 142.3 L59.4 141.4 L61.2 140.6M61.2 140.6 L63.0 139.8 L64.2 139.3M62.0 135.6 L62.2 134.4 L62.5 132.7M50.4 128.3 L51.3 124.1 L52.3 120.0M52.3 120.0 L53.3 116.4 L53.9 113.9M102.6 157.0 L103.5 156.5 L104.3 156.1 L104.8 155.9M55.9 159.4 L57.6 159.6 L59.3 160.0M59.3 160.0 L60.9 160.4 L62.1 160.8M86.5 141.0 L87.9 139.9 L89.1 139.3M89.1 139.3 L90.3 139.2 L91.4 139.2M91.4 139.2 L92.2 139.4 L92.9 139.5M93.9 173.4 L98.3 174.4 L102.6 175.6M102.6 175.6 L106.2 176.7 L108.8 177.4M66.1 178.8 L66.1 177.3 L66.3 175.2M66.3 175.2 L66.5 173.0 L67.1 171.0M18.8 95.0 L19.4 90.9 L19.6 86.5 L19.8 82.6 L20.0 80.0M7.5 141.8 L7.5 139.9 L7.5 138.5M11.6 125.2 L13.1 124.3 L14.6 123.5M7.0 117.9 L6.0 117.4 L4.6 116.7M4.6 116.7 L3.2 116.0 L1.8 115.3M7.2 104.6 L6.0 103.5 L4.2 102.0M21.7 121.6 L23.7 119.6 L25.6 117.9M25.6 117.9 L27.2 116.5 L28.4 115.5M22.9 158.2 L26.2 158.3 L29.5 158.1M29.5 158.1 L32.4 157.9 L34.3 157.8M11.8 154.1 L12.6 153.7 L13.9 153.1M23.9 164.7 L27.4 164.2 L30.0 163.8M5.4 173.0 L5.2 172.3 L4.9 171.2M7.9 92.2 L8.0 90.0 L8.5 88.3M8.5 88.3 L9.4 86.8 L10.4 85.6M10.4 85.6 L11.4 84.7 L12.0 84.0M24.4 94.6 L26.0 94.0 L27.4 93.7M27.4 93.7 L28.8 93.7 L30.1 93.8M30.1 93.8 L31.2 93.9 L31.9 94.0M96.4 203.4 L101.4 202.6 L104.8 202.0M43.7 205.1 L45.0 204.9 L46.9 204.5M46.9 204.5 L48.8 204.0 L50.5 203.7M55.8 207.6 L57.1 208.7 L58.8 210.2M58.8 210.2 L60.6 211.7 L62.4 213.2M71.5 207.2 L72.6 206.4 L74.3 205.2M83.7 214.0 L87.7 213.6 L91.4 213.0M91.4 213.0 L94.6 212.4 L96.8 212.0M99.7 251.0 L100.3 251.8 L100.8 252.3M51.7 237.4 L52.5 239.3 L53.0 240.6M62.5 232.8 L64.0 232.0 L65.4 231.3M67.9 236.1 L69.2 235.6 L71.0 234.9M71.0 234.9 L72.7 234.0 L74.2 232.9M31.1 213.1 L31.6 211.3 L31.9 210.0M30.6 225.9 L30.1 225.5 L29.3 224.8M29.3 224.8 L28.6 224.2 L27.8 223.6M69.6 217.9 L71.2 218.0 L72.5 218.4M72.5 218.4 L73.5 218.7 L74.3 219.0M49.8 225.2 L51.1 225.7 L52.9 226.3M98.1 232.0 L100.2 232.2 L101.8 232.5M101.8 232.5 L103.2 232.8 L104.2 232.9M83.9 259.2 L88.0 259.0 L90.9 258.9M35.0 254.0 L35.5 256.3 L35.8 258.6M35.8 258.6 L36.0 260.9 L36.1 262.5M43.7 259.3 L43.0 260.9 L41.9 263.3M41.9 263.3 L40.7 265.5 L39.1 267.5M57.1 261.6 L58.4 260.5 L60.1 258.9M47.6 293.4 L46.9 297.2 L45.9 300.8M45.9 300.8 L44.9 304.0 L44.3 306.2M42.1 266.0 L43.4 266.8 L45.2 268.1M45.2 268.1 L46.9 269.4 L48.5 270.9M44.8 277.2 L44.4 278.3 L43.9 279.8M66.8 281.2 L68.3 282.3 L69.7 282.7M69.7 282.7 L71.1 282.7 L72.4 282.4M72.4 282.4 L73.5 282.1 L74.3 281.9M52.6 294.6 L53.9 295.8 L55.2 297.0M55.2 297.0 L56.6 298.1 L57.9 299.2M57.9 299.2 L59.1 300.2 L59.9 300.8M9.6 240.6 L10.0 237.9 L10.4 235.0M10.4 235.0 L10.9 231.8 L11.3 228.6M11.3 228.6 L11.7 225.9 L12.0 224.0M21.1 270.7 L21.8 270.0 L22.4 269.5M5.8 283.4 L6.2 282.5 L6.4 281.4M6.4 281.4 L6.5 280.3 L6.5 279.6M11.9 280.3 L12.5 280.0 L13.5 279.6M13.5 279.6 L14.4 279.3 L15.4 279.2M21.9 284.3 L23.8 284.8 L25.7 285.2M25.7 285.2 L27.2 285.6 L28.4 285.9M7.0 291.0 L8.0 291.8 L9.2 292.5M9.2 292.5 L10.5 293.0 L11.9 293.3M11.9 293.3 L13.1 293.6 L14.0 293.8M33.9 322.8 L35.3 323.0 L36.3 323.2M6.1 314.7 L7.6 316.0 L8.7 316.9M14.5 318.0 L16.2 317.5 L17.9 317.3M18.4 306.5 L21.5 305.5 L24.9 304.8M24.9 304.8 L27.9 304.3 L30.0 303.8" stroke-width="1.0"/><path d="M68.3 197.4 L68.9 199.7 L69.3 201.3M81.4 197.0 L82.1 199.0 L82.6 201.0M82.6 201.0 L82.8 203.1 L83.0 204.6M105.9 202.8 L107.2 203.4 L108.5 203.8M108.5 203.8 L109.8 204.3 L110.7 204.6M43.9 142.8 L44.1 141.4 L44.4 140.0M44.4 140.0 L44.8 138.6 L45.2 137.6M62.5 132.7 L62.7 131.0 L62.5 129.3M62.5 129.3 L62.2 127.6 L61.9 126.4M67.1 171.0 L67.8 169.0 L68.3 167.6M14.6 123.5 L16.2 122.8 L17.4 122.3M1.8 115.3 L0.4 114.6 L-0.6 114.1M4.2 102.0 L2.5 100.4 L1.2 98.5M1.2 98.5 L0.0 96.5 L-0.8 95.1M13.9 153.1 L15.1 152.5 L16.3 152.0M16.3 152.0 L17.6 151.6 L18.5 151.3M4.9 171.2 L4.5 170.2 L3.9 169.3M3.9 169.3 L3.3 168.4 L2.8 167.8M50.5 203.7 L52.2 203.2 L53.8 202.7 L55.6 201.9M55.6 201.9 L57.3 200.9 L58.5 200.3M62.4 213.2 L64.2 214.7 L65.4 215.7M74.3 205.2 L75.9 204.2 L77.7 203.4M77.7 203.4 L79.6 202.7 L80.9 202.2M65.4 231.3 L66.8 230.4 L67.8 229.8M74.2 232.9 L75.7 231.6 L76.7 230.7M27.8 223.6 L26.9 223.1 L26.3 222.8M52.9 226.3 L54.6 227.0 L56.2 228.0M56.2 228.0 L57.8 229.0 L58.9 229.8M39.1 267.5 L37.4 269.5 L36.2 270.8M60.1 258.9 L61.7 257.2 L63.1 255.3M63.1 255.3 L64.3 253.3 L65.1 251.9M48.5 270.9 L50.1 272.4 L51.2 273.4M43.9 279.8 L43.3 281.3 L42.8 282.9M42.8 282.9 L42.2 284.4 L41.9 285.5M15.4 279.2 L16.4 279.2 L17.1 279.1M17.9 317.3 L19.7 317.2 L20.9 317.1" stroke-width="0.5"/></g><g opacity="0.8" fill="none" stroke="#0b0502" stroke-linecap="round" stroke-linejoin="round"><path d="M662.8 257.5 L661.0 256.5 L658.3 255.2" stroke-width="9.5"/><path d="M658.3 255.2 L655.3 253.6 L652.3 251.8" stroke-width="8.5"/><path d="M652.3 251.8 L649.8 249.9 L647.9 247.8" stroke-width="8.0"/><path d="M647.9 247.8 L646.3 245.3 L644.8 242.8 L643.4 240.3" stroke-width="7.5"/><path d="M661.8 188.8 L645.8 181.8M643.4 240.3 L641.9 237.9 L640.1 235.6" stroke-width="7.0"/><path d="M640.1 235.6 L638.3 233.3 L636.5 231.1" stroke-width="6.5"/><path d="M645.8 181.8 L645.3 181.5 L644.6 180.9M645.8 181.8 L645.0 179.4 L643.9 176.0M636.5 231.1 L635.0 229.3 L633.9 227.9M649.8 249.9 L648.1 250.4 L645.7 250.9" stroke-width="6.0"/><path d="M643.9 176.0 L642.5 172.0 L641.3 167.8M641.3 167.8 L640.3 163.8 L639.5 159.7M645.7 250.9 L642.9 251.7 L640.2 252.7M640.2 252.7 L637.9 253.9 L635.9 255.5" stroke-width="5.5"/><path d="M645.8 181.8 L643.7 182.1 L640.8 182.6 L637.3 183.1M639.5 159.7 L639.0 155.0 L638.5 150.5M638.5 150.5 L638.1 146.6 L637.9 143.9M633.9 227.9 L633.2 227.4 L632.4 226.7M633.9 227.9 L632.2 226.2 L629.9 223.8 L627.3 221.0M635.9 255.5 L634.2 257.3 L632.6 259.3 L631.2 261.5" stroke-width="5.0"/><path d="M644.6 180.9 L643.9 180.4 L643.2 179.8M637.3 183.1 L633.6 183.5 L629.9 183.8 L626.1 183.9M627.3 221.0 L624.5 218.2 L621.9 216.0 L619.5 214.2M631.2 261.5 L629.9 263.9 L628.8 266.7" stroke-width="4.5"/><path d="M626.1 183.9 L622.2 183.9 L618.1 183.8 L614.0 183.7M637.9 143.9 L637.6 143.2 L637.2 142.1M637.9 143.9 L638.1 141.9 L638.3 139.2 L638.7 136.0M637.9 143.9 L636.7 141.9 L635.1 139.1 L633.3 135.9 L631.5 132.7M640.3 163.8 L638.9 162.1 L636.9 159.5 L634.6 156.7M632.4 226.7 L631.6 225.9 L630.9 225.0M619.5 214.2 L617.2 212.6 L614.8 211.2 L612.4 210.0M633.9 227.9 L631.6 228.2 L628.4 228.4M628.8 266.7 L627.8 269.9 L627.0 273.1M627.0 273.1 L626.4 275.9 L625.9 277.9" stroke-width="4.0"/><path d="M638.7 136.0 L639.2 132.8 L639.9 129.9 L640.8 127.4M631.5 132.7 L629.9 129.9 L628.5 127.6 L627.1 125.6 L625.9 123.7M634.6 156.7 L632.2 153.9 L629.9 151.9 L627.6 150.5M629.9 183.8 L628.0 182.1 L625.3 179.6 L622.2 176.8M612.4 210.0 L609.9 209.0 L607.2 208.0 L604.5 207.3M628.4 228.4 L624.8 228.8 L621.1 229.3 L617.9 229.9M625.9 277.9 L625.6 278.6 L625.3 279.7M629.9 263.9 L627.7 264.5 L624.5 265.5" stroke-width="3.5"/><path d="M643.2 179.8 L642.6 179.1 L642.2 178.6M614.0 183.7 L609.9 183.8 L605.9 184.0 L601.9 184.3M637.2 142.1 L636.8 141.1 L636.5 140.0M640.8 127.4 L642.1 125.1 L643.5 122.8 L644.8 120.4M625.9 123.7 L624.8 121.8 L623.9 119.9 L623.1 117.8M627.6 150.5 L625.2 149.5 L622.8 148.9 L620.3 148.3M622.2 176.8 L618.9 174.0 L615.9 171.8 L613.1 170.2M613.1 170.2 L610.2 168.8 L607.4 167.7 L604.6 166.7M661.8 152.9 L660.7 150.9 L659.1 148.1M661.8 200.4 L659.3 200.1 L655.7 199.6M604.5 207.3 L601.6 206.6 L598.8 206.2 L595.9 206.0 L593.1 206.0M617.9 229.9 L615.3 230.9 L613.0 232.2 L610.8 233.6M625.9 277.9 L624.5 279.2 L622.4 281.1M622.4 281.1 L620.1 283.4 L617.8 285.7 L615.9 287.8M624.5 265.5 L620.9 266.5 L617.2 267.4" stroke-width="3.0"/><path d="M601.9 184.3 L597.9 184.6 L593.9 185.1 L589.9 185.8 L585.8 186.8M639.0 155.0 L639.8 154.3 L641.1 153.3M644.8 120.4 L645.8 117.9 L646.7 115.2 L647.5 112.4M647.5 112.4 L648.1 109.5 L648.5 106.6 L648.8 103.9 L648.9 101.4M623.1 117.8 L622.3 115.7 L621.8 113.6 L621.6 111.7 L621.9 109.9M621.9 109.9 L622.9 108.5 L624.5 107.4 L626.3 106.4 L628.2 105.3M623.9 119.9 L622.5 120.0 L620.4 120.3M620.3 148.3 L617.9 147.9 L615.5 147.5 L613.1 147.4M613.1 147.4 L610.7 147.4 L608.3 147.3 L605.9 146.9 L603.4 146.1M604.6 166.7 L601.9 165.8 L599.4 165.3 L596.9 165.0M659.1 148.1 L657.2 144.9 L655.4 142.0M655.7 199.6 L651.6 199.1 L647.5 198.6M647.5 198.6 L643.8 198.4 L640.8 198.5M630.9 225.0 L630.2 224.1 L629.8 223.4M593.1 206.0 L590.4 206.2 L587.6 206.6 L584.8 207.2M610.8 233.6 L608.5 234.9 L605.9 235.9M605.9 235.9 L602.9 236.5 L599.7 236.8M641.9 237.9 L642.7 236.3 L643.9 234.0M625.3 279.7 L624.9 280.7 L624.5 281.8M615.9 287.8 L614.4 289.8 L613.1 291.8 L612.0 293.8M612.0 293.8 L610.9 295.8 L609.9 297.8M617.2 267.4 L613.9 267.9 L611.0 267.8M611.0 267.8 L608.2 267.5 L605.4 266.9 L602.7 266.3M661.8 293.8 L659.6 293.5 L656.4 292.9" stroke-width="2.5"/><path d="M585.8 186.8 L581.4 188.1 L577.1 189.6 L573.2 190.8M637.3 183.1 L636.0 182.6 L634.1 181.9M636.5 140.0 L636.1 139.0 L635.9 138.3M648.9 101.4 L648.8 98.9 L648.6 96.4 L648.2 94.1M628.2 105.3 L629.9 103.9 L631.3 102.1 L632.6 100.0M620.4 120.3 L618.1 120.5 L615.8 120.4M615.8 120.4 L613.9 119.9 L612.5 118.8M613.9 119.9 L613.5 121.4 L613.1 123.7M613.1 123.7 L612.4 126.1 L611.4 128.4M603.4 146.1 L600.8 145.2 L598.2 144.1 L595.8 142.9M629.9 151.9 L628.5 152.8 L626.6 154.2M596.9 165.0 L594.5 164.9 L592.2 164.6 L589.9 163.8 L587.7 162.6M587.7 162.6 L585.6 160.9 L583.6 159.0 L581.7 157.3M601.9 165.8 L601.0 164.4 L599.8 162.4M589.9 163.8 L588.3 165.0 L585.9 166.6M655.4 142.0 L653.8 139.9 L652.6 138.7M640.8 198.5 L637.8 198.7 L635.1 199.1 L632.4 199.4M621.9 216.0 L620.2 216.3 L617.9 216.7M599.7 236.8 L596.4 237.0 L593.1 237.3 L589.9 237.9M643.9 234.0 L645.2 231.3 L646.1 228.5M627.8 269.9 L626.9 270.3 L625.7 271.0M609.9 297.8 L609.0 299.9 L608.4 301.9M602.7 266.3 L599.9 265.9 L596.8 265.6M609.9 297.8 L608.6 297.6 L606.6 297.4M656.4 292.9 L652.7 292.3 L649.0 291.9M661.8 319.8 L660.1 319.6 L657.7 319.4M657.7 319.4 L654.9 319.1 L652.2 318.9" stroke-width="2.0"/><path d="M573.2 190.8 L570.0 191.8 L567.4 192.4 L565.4 192.7M634.1 181.9 L632.3 181.1 L630.5 180.1M626.1 183.9 L625.5 185.1 L624.5 186.7M624.5 186.7 L623.5 188.3 L622.6 189.7M609.9 183.8 L608.6 183.4 L606.7 182.8M597.9 184.6 L597.3 185.8 L596.4 187.4M641.1 153.3 L642.2 152.2 L643.2 151.0M648.2 94.1 L647.8 92.0 L647.3 89.8 L646.6 87.7M642.1 125.1 L643.0 124.7 L644.4 124.3M632.6 100.0 L633.9 97.8 L635.0 95.7 L635.9 94.0 L636.4 92.6M628.5 127.6 L628.6 126.5 L628.8 125.0M612.5 118.8 L611.2 117.2 L610.1 115.4 L609.1 113.5M609.1 113.5 L607.9 111.9 L606.6 110.4M611.4 128.4 L609.9 129.9 L607.7 130.5M607.7 130.5 L604.8 130.7 L601.7 130.4 L598.6 130.1M621.9 109.9 L621.2 108.8 L620.3 107.3M620.3 107.3 L619.2 105.5 L618.4 103.7M595.8 142.9 L593.9 141.9 L592.5 140.8 L591.4 139.6M626.6 154.2 L624.4 155.7 L622.0 157.0M622.0 157.0 L619.9 157.8 L617.7 158.1M581.7 157.3 L580.0 155.9 L578.4 154.7 L577.0 153.8M622.2 176.8 L622.1 175.5 L622.2 173.7M599.8 162.4 L598.3 160.0 L597.0 157.8M597.0 157.8 L595.9 155.9 L595.2 154.3M585.9 166.6 L583.2 168.4 L580.4 170.2M580.4 170.2 L578.0 171.8 L575.7 173.2M648.8 103.9 L649.6 102.5 L650.6 100.5M650.6 100.5 L651.7 98.2 L652.9 95.9M652.6 138.7 L651.4 138.0 L650.3 137.8M661.8 129.9 L657.8 121.9M632.4 199.4 L629.9 199.6 L627.3 199.5M627.3 199.5 L624.7 199.4 L622.3 199.2M584.8 207.2 L581.9 208.0 L578.9 209.1 L575.5 210.5M617.9 216.7 L615.6 217.2 L613.3 217.8M609.9 209.0 L608.4 209.7 L606.2 210.6M589.9 237.9 L586.7 239.0 L583.4 240.5 L580.2 242.0M646.1 228.5 L646.2 225.9 L645.3 223.4M645.3 223.4 L643.4 220.6 L641.2 217.9M625.7 271.0 L624.5 271.6 L623.2 272.1M624.5 281.8 L624.2 282.8 L623.9 283.6M608.4 301.9 L607.7 304.0 L606.9 305.9 L605.9 307.8M605.9 307.8 L604.4 309.7 L602.6 311.5 L600.7 313.3M596.8 265.6 L593.5 265.4 L590.3 265.3M606.6 297.4 L604.4 297.0 L602.1 296.5M602.1 296.5 L599.9 295.8 L597.7 294.8M649.0 291.9 L645.8 291.8 L643.0 292.3M643.0 292.3 L640.2 293.2 L637.6 294.2M652.2 318.9 L649.8 318.8 L647.9 318.9M661.8 273.9 L649.8 271.9M661.8 329.8 L653.8 327.8M658.8 218.0 L658.3 216.8 L657.6 215.2M657.6 215.2 L656.8 213.4 L656.2 211.6" stroke-width="1.5"/><path d="M565.4 192.7 L563.8 192.8 L562.5 192.9 L561.6 193.0M630.5 180.1 L628.9 179.0 L627.7 178.3M622.6 189.7 L621.6 191.1 L620.5 192.4 L619.1 193.7M619.1 193.7 L617.6 194.9 L616.5 195.7M620.5 192.4 L619.7 192.5 L618.5 192.6M606.7 182.8 L604.9 182.2 L603.0 181.6M596.4 187.4 L595.7 189.1 L595.1 190.9M585.8 186.8 L585.2 187.9 L584.3 189.4M643.2 151.0 L644.2 149.6 L644.8 148.7M646.6 87.7 L645.9 85.8 L645.3 84.1 L644.8 83.0M644.4 124.3 L645.7 123.9 L647.1 123.7M646.7 115.2 L646.3 114.1 L645.6 112.5M636.4 92.6 L636.7 91.4 L636.9 90.4 L637.0 89.6 L637.1 89.0M628.8 125.0 L629.1 123.4 L629.6 121.9M623.1 117.8 L621.8 117.4 L620.0 116.8M620.0 116.8 L618.3 116.0 L616.8 114.9M606.6 110.4 L605.1 108.9 L603.6 107.6M603.6 107.6 L602.4 106.4 L601.5 105.5M615.8 120.4 L615.2 119.5 L614.4 118.2M598.6 130.1 L595.9 129.9 L593.5 129.7M593.5 129.7 L591.2 129.5 L589.0 129.3M589.0 129.3 L587.2 129.0 L585.9 128.9M612.4 126.1 L613.3 127.2 L614.5 128.6M618.4 103.7 L617.9 101.9 L617.9 100.2M617.9 100.2 L618.4 98.4 L618.9 96.6M618.9 96.6 L619.5 95.0 L619.9 94.0M591.4 139.6 L590.6 138.5 L590.0 137.6 L589.5 136.9M622.8 148.9 L622.5 147.8 L622.2 146.2M622.2 146.2 L621.8 144.6 L621.3 143.1M610.7 147.4 L609.8 148.2 L608.5 149.4M617.7 158.1 L615.4 157.9 L613.2 157.5M613.2 157.5 L611.3 157.1 L609.9 156.9M577.0 153.8 L575.7 153.0 L574.7 152.3 L574.0 151.9M622.2 173.7 L622.3 171.9 L622.8 170.1M613.1 170.2 L611.7 170.1 L609.8 170.0M609.8 170.0 L607.9 169.7 L606.0 169.3M604.6 166.7 L604.3 165.6 L604.0 164.0M604.0 164.0 L603.8 162.4 L603.8 160.8M595.2 154.3 L594.7 152.9 L594.4 151.6M594.4 151.6 L594.1 150.6 L593.9 149.9M575.7 173.2 L573.3 174.7 L571.2 175.9M571.2 175.9 L569.3 177.0 L568.0 177.8M652.9 95.9 L653.8 94.0 L654.6 92.3M654.6 92.3 L655.3 90.6 L655.9 89.1M655.9 89.1 L656.5 87.9 L656.8 87.0M650.3 137.8 L649.5 137.6 L648.8 137.5M657.2 144.9 L657.7 144.4 L658.5 143.6M661.8 80.0 L655.8 76.0M622.3 199.2 L620.3 198.9 L618.9 198.8M655.7 199.6 L655.2 198.9 L654.5 197.9M654.5 197.9 L653.9 196.9 L653.5 195.8M643.8 198.4 L642.9 199.1 L641.6 200.2M575.5 210.5 L572.3 212.1 L569.5 213.4 L567.6 214.4M613.3 217.8 L611.0 218.4 L609.4 218.9M606.2 210.6 L604.0 211.4 L601.7 212.0M580.2 242.0 L577.5 243.4 L575.6 244.3M615.3 230.9 L614.0 230.3 L612.2 229.4M612.2 229.4 L610.3 228.4 L608.5 227.5M602.9 236.5 L601.8 235.8 L600.3 234.7M641.2 217.9 L639.2 215.6 L637.9 214.0M645.2 231.3 L644.6 230.4 L643.7 229.2M623.2 272.1 L621.8 272.5 L620.9 272.7M600.7 313.3 L599.1 314.8 L597.9 315.8M620.1 283.4 L618.6 284.0 L616.6 284.9M616.6 284.9 L614.6 286.0 L612.7 287.2M613.1 291.8 L613.5 292.7 L613.9 293.9M590.3 265.3 L587.5 265.2 L585.5 265.1M611.0 267.8 L610.4 268.4 L609.5 269.2M609.5 269.2 L608.7 270.1 L607.8 270.9M597.7 294.8 L595.3 293.4 L593.0 292.0M593.0 292.0 L591.0 290.7 L589.5 289.8M637.6 294.2 L635.4 295.2 L633.9 295.8M647.9 318.9 L646.0 319.1 L644.3 319.4M644.3 319.4 L642.9 319.6 L641.9 319.8M656.2 211.6 L655.8 210.0 L655.9 208.6M655.9 208.6 L656.4 207.1 L656.9 205.9M656.9 205.9 L657.5 204.8 L657.8 204.0" stroke-width="1.0"/><path d="M618.5 192.6 L617.4 192.6 L616.2 192.5M616.2 192.5 L615.1 192.4 L614.3 192.2M603.0 181.6 L601.1 181.0 L599.8 180.6M595.1 190.9 L594.6 192.7 L594.3 194.0M584.3 189.4 L583.6 190.9 L583.1 192.5M583.1 192.5 L582.8 194.2 L582.5 195.4M647.1 123.7 L648.4 123.5 L649.4 123.3M645.6 112.5 L645.0 110.9 L644.3 109.3M644.3 109.3 L643.6 107.7 L643.1 106.6M629.6 121.9 L630.1 120.4 L630.5 119.3M616.8 114.9 L615.3 113.6 L614.3 112.7M614.4 118.2 L613.6 116.8 L612.8 115.5M612.8 115.5 L612.0 114.2 L611.4 113.2M614.5 128.6 L615.8 130.1 L617.0 131.6M617.0 131.6 L618.2 133.1 L619.0 134.2M621.3 143.1 L620.8 141.6 L620.4 140.5M608.5 149.4 L607.3 150.5 L606.0 151.6M606.0 151.6 L604.6 152.7 L603.7 153.5M622.8 170.1 L623.4 168.4 L623.9 167.2M606.0 169.3 L604.2 168.8 L602.9 168.4M603.8 160.8 L603.9 159.2 L604.0 158.0M658.5 143.6 L659.4 142.8 L660.2 142.1M660.2 142.1 L661.1 141.5 L661.8 141.0M653.5 195.8 L653.1 194.6 L652.9 193.8M641.6 200.2 L640.3 201.2 L639.0 202.2M639.0 202.2 L637.6 203.2 L636.7 203.9M601.7 212.0 L599.4 212.4 L597.8 212.7M608.5 227.5 L606.6 226.7 L605.3 226.0M600.3 234.7 L598.7 233.5 L597.3 232.2M597.3 232.2 L596.0 230.9 L595.1 229.9M643.7 229.2 L642.9 227.9 L642.3 226.5M642.3 226.5 L641.6 225.1 L641.2 224.1M612.7 287.2 L610.9 288.5 L609.6 289.4M613.9 293.9 L614.5 295.1 L615.0 296.3M615.0 296.3 L615.5 297.5 L615.9 298.3M607.8 270.9 L606.9 271.7 L606.3 272.3" stroke-width="0.5"/></g><path d="M-2 415.5 L30 411.5 L28.6 390 A32.8 32 0 0 1 94.2 390 L95.5 404 L102.5 403.5 L104.800 381.500 A26 26 0 0 1 156.800 381.500 L155.5 399 L162 398.5 C160.500 392 160.300 388 160.500 385 C160 368 172 358 187.5 358 C199 358 206 364 209.5 371.5 L220 397.5 C232 397 240 397 246 397.5 C270 398 300 400 330 403 C400 409 470 417 520 419 C580 419 620 414 662 410 L662 497 L-2 497Z" fill="#000"/><text x="110.2" y="65.4" font-size="43.6" font-weight="bold" fill="#120a05" textLength="446.5" lengthAdjust="spacingAndGlyphs" stroke="#120a05" stroke-width="1.6">TOP 5 CHILDREN'S COSTUMES</text><g transform="scale(5.7391)"><circle cx="28.100" cy="28.300" r="8.400" fill="#b02a22"/><circle cx="28.100" cy="28.300" r="6.200" fill="#f2f2f2"/><circle cx="28.100" cy="28.300" r="4.600" fill="#b02a22"/><circle cx="27.600" cy="28.300" r="3.200" fill="#2a62c0"/><path d="M30 26l6-1.500l1.500 4l-6 2.500z" fill="#c9c9c9"/><circle cx="56.600" cy="28.300" r="8.400" fill="#f06adf"/><circle cx="63.500" cy="24.100" r="2.600" fill="#7ac8f0"/><path d="M50 31l6-1l1.500-5l1.500 5l5 .500l-7 2.500l-3 4l.500-4.500z" fill="#f7a01c"/><circle cx="85.600" cy="28.300" r="8.600" fill="#6b3f10"/><circle cx="81.500" cy="32" r="4.200" fill="#f7d070"/><circle cx="91" cy="25.500" r="3.400" fill="#e8c88a"/><circle cx="43.500" cy="54.400" r="8.400" fill="#0c0c0c"/><path d="M38 54l3.500 1.500l-3 .300zM49 54l-3.500 1.500l3 .300z" fill="#bbb"/><circle cx="70.700" cy="54.400" r="8.400" fill="#080808"/><rect x="27" y="39.0" width="1.600" height="3" fill="#1e9a48"/><rect x="55.5" y="39.0" width="1.600" height="3" fill="#c02a1c"/><rect x="84.5" y="39.0" width="1.600" height="3" fill="#1e9a48"/><rect x="41.5" y="64.5" width="1.600" height="3" fill="#c02a1c"/><rect x="69.5" y="64.5" width="1.600" height="3" fill="#1e9a48"/></g><text x="109.0" y="109.0" font-size="14.9" font-weight="normal" fill="#6a3a12" textLength="109.1" lengthAdjust="spacingAndGlyphs" >1. Action/Superhero</text><text x="298.4" y="109.0" font-size="14.9" font-weight="normal" fill="#6a3a12" textLength="63.2" lengthAdjust="spacingAndGlyphs" >2. Princess</text><text x="464.9" y="109.0" font-size="14.9" font-weight="normal" fill="#6a3a12" textLength="57.4" lengthAdjust="spacingAndGlyphs" >3. Animal</text><text x="218.1" y="258.3" font-size="14.9" font-weight="normal" fill="#6a3a12" textLength="63.1" lengthAdjust="spacingAndGlyphs" >4. Batman</text><text x="373.0" y="258.3" font-size="14.9" font-weight="normal" fill="#6a3a12" textLength="68.9" lengthAdjust="spacingAndGlyphs" >5. Star Wars</text><text x="510.8" y="330.0" font-size="14.9" font-weight="normal" fill="#6a3a12" textLength="118.8" lengthAdjust="spacingAndGlyphs" >Action & Superhero</text><text x="510.8" y="349.5" font-size="14.9" font-weight="normal" fill="#6a3a12" textLength="105.6" lengthAdjust="spacingAndGlyphs" >Batman Character</text><text x="510.8" y="369.0" font-size="14.9" font-weight="normal" fill="#6a3a12" textLength="112.2" lengthAdjust="spacingAndGlyphs" >Animal (Cat, Dog)</text><text x="510.8" y="388.5" font-size="14.9" font-weight="normal" fill="#6a3a12" textLength="39.6" lengthAdjust="spacingAndGlyphs" >Zombie</text><text x="510.8" y="408.1" font-size="14.9" font-weight="normal" fill="#6a3a12" textLength="59.4" lengthAdjust="spacingAndGlyphs" >Star Wars</text></svg>
<div class="a" style="left:326px;top:165px;width:662px;height:496px;background:#bcbcbc"></div><svg class="a" style="left:327px;top:166px" width="660" height="494.4" viewBox="0 0 660 495" preserveAspectRatio="none"><defs>
<radialGradient id="mbg" gradientUnits="userSpaceOnUse" cx="325" cy="250" r="272" gradientTransform="translate(325 250) scale(1 1.21) translate(-325 -250)">
<stop offset="0" stop-color="#fbb034"/><stop offset="0.47" stop-color="#f9a11c"/><stop offset="0.667" stop-color="#f7901e"/><stop offset="0.765" stop-color="#f47b20"/><stop offset="0.86" stop-color="#f36c22"/><stop offset="1" stop-color="#f15a24"/>
</radialGradient>
<radialGradient id="mmo" gradientUnits="userSpaceOnUse" cx="365" cy="262" r="215">
<stop offset="0" stop-color="#feef90"/><stop offset="0.3" stop-color="#fee988"/><stop offset="0.6" stop-color="#fdde84" stop-opacity="0.85"/><stop offset="0.85" stop-color="#fcd58c" stop-opacity="0.35"/><stop offset="1" stop-color="#fbd3a0" stop-opacity="0"/>
</radialGradient>
<linearGradient id="mmv" gradientUnits="userSpaceOnUse" x1="360" y1="285" x2="295" y2="500">
<stop offset="0" stop-color="#f6923a" stop-opacity="0"/><stop offset="0.4" stop-color="#f6923a" stop-opacity="0.18"/><stop offset="0.75" stop-color="#f68e36" stop-opacity="0.42"/><stop offset="1" stop-color="#f58a32" stop-opacity="0.62"/>
</linearGradient>
<filter id="mbl" x="-5%" y="-5%" width="110%" height="110%"><feGaussianBlur stdDeviation="1.2"/></filter>
<filter id="mtx" x="0" y="0" width="100%" height="100%"><feTurbulence type="fractalNoise" baseFrequency="0.035" numOctaves="3" seed="4" result="n"/><feColorMatrix in="n" type="matrix" values="0 0 0 0 0.96  0 0 0 0 0.62  0 0 0 0 0.25  0.9 0.9 0 0 -0.72" result="c"/><feComposite in="c" in2="SourceGraphic" operator="in"/></filter>
</defs><rect x="0" y="0" width="660" height="495" fill="url(#mbg)"/><g filter="url(#mbl)"><circle cx="321.6" cy="301.3" r="198.7" fill="#fbd2a2"/><circle cx="321.6" cy="301.3" r="198.7" fill="url(#mmo)"/><circle cx="321.6" cy="301.3" r="198.7" fill="url(#mmv)"/></g><circle cx="321.6" cy="301.3" r="197" fill="#000" filter="url(#mtx)"/><g fill="none" stroke="#0b0502" stroke-linecap="round" stroke-linejoin="round"><path d="M-2.0 203.8 L1.7 202.6 L7.1 201.0M-2.0 252.3 L0.6 251.7 L4.3 250.9" stroke-width="7.75"/><path d="M7.1 201.0 L13.2 199.1 L19.1 197.0M4.3 250.9 L8.5 250.0 L12.6 249.0 L16.0 247.9" stroke-width="7.25"/><path d="M19.1 197.0 L24.0 194.8 L27.7 192.2M16.0 247.9 L18.5 246.8 L20.7 245.7 L22.6 244.5" stroke-width="7.0"/><path d="M27.7 192.2 L31.1 189.3 L33.9 186.3M22.6 244.5 L24.3 243.3 L26.0 241.9" stroke-width="6.75"/><path d="M33.9 186.3 L36.2 183.6 L37.9 181.8M26.0 241.9 L27.3 240.4 L28.5 238.7" stroke-width="6.25"/><path d="M28.5 238.7 L29.5 236.9 L30.6 235.3 L31.9 233.9" stroke-width="6.0"/><path d="M37.9 181.8 L39.0 179.3 L40.4 175.6" stroke-width="5.75"/><path d="M37.9 181.8 L38.4 181.1 L39.1 180.2M31.9 233.9 L33.8 232.8 L36.1 231.9 L38.5 231.1" stroke-width="5.5"/><path d="M40.4 175.6 L42.1 171.5 L43.7 167.3M38.5 231.1 L40.5 230.4 L41.9 229.9" stroke-width="5.25"/><path d="M43.7 167.3 L44.9 163.8 L45.8 160.9" stroke-width="5.0"/><path d="M45.8 160.9 L46.6 158.0 L47.1 155.5M-2.0 158.8 L-0.5 158.0 L1.5 156.8 L3.9 155.3 L6.2 153.7" stroke-width="4.75"/><path d="M47.1 155.5 L47.6 153.4 L47.9 151.9M41.9 229.9 L42.7 229.6 L43.8 229.1M0.0 301.8 L0.4 303.6 L1.0 306.0" stroke-width="4.5"/><path d="M39.1 180.2 L39.7 179.2 L40.3 178.2M37.9 181.8 L41.0 182.3 L45.2 182.9M6.2 153.7 L8.0 151.9 L9.4 149.8 L10.5 147.6 L11.5 145.2 L12.1 142.6M41.9 229.9 L44.3 230.5 L47.7 231.2M-2.0 288.8 L-0.3 287.9 L2.1 286.6" stroke-width="4.25"/><path d="M47.9 151.9 L48.2 151.2 L48.7 150.3M26.0 241.9 L27.9 244.0 L30.7 246.9M1.0 306.0 L1.8 308.9 L2.7 311.6 L4.0 313.8" stroke-width="4.0"/><path d="M45.2 182.9 L50.2 183.7 L55.3 184.7M12.1 142.6 L12.4 139.9 L12.1 136.9 L11.3 133.7 L10.3 130.3M47.7 231.2 L51.7 232.0 L55.9 232.9 L59.9 233.9M2.1 286.6 L4.9 285.1 L7.7 283.4" stroke-width="3.75"/><path d="M47.9 151.9 L49.6 149.9 L51.9 147.1M44.9 163.8 L46.9 162.7 L49.7 161.1 L53.0 159.2M43.8 229.1 L44.9 228.6 L46.0 228.0M30.7 246.9 L34.0 250.2 L37.2 253.4 L39.9 255.9M4.0 313.8 L5.5 315.5 L7.4 316.8 L9.4 318.0" stroke-width="3.5"/><path d="M55.3 184.7 L59.9 185.8 L64.0 187.1M53.0 159.2 L56.5 157.5 L59.9 156.3 L63.4 155.5M10.3 130.3 L9.2 127.0 L8.4 123.9 L7.7 120.9 L7.0 117.9 L6.5 115.0M24.0 196.0 L26.1 197.1 L29.0 198.8M59.9 233.9 L63.8 235.0 L67.9 236.1 L72.1 237.3M7.7 283.4 L10.0 281.9 L11.9 280.3" stroke-width="3.25"/><path d="M48.7 150.3 L49.1 149.4 L49.5 148.4M47.9 151.9 L46.9 150.2 L45.5 147.9M51.9 147.1 L54.7 143.9 L57.4 140.6M29.0 198.8 L32.5 200.7 L36.2 202.5 L39.9 204.0M39.9 255.9 L42.0 257.7 L43.7 259.3 L45.4 260.5M9.4 318.0 L11.6 319.0 L14.0 319.8" stroke-width="3.0"/><path d="M40.3 178.2 L40.7 177.1 L41.1 176.3M64.0 187.1 L67.8 188.7 L71.7 190.4 L75.7 192.1M57.4 140.6 L59.9 137.9 L62.0 135.6M63.4 155.5 L67.3 154.9 L71.1 154.7 L74.7 154.6M6.5 115.0 L6.1 112.3 L6.0 109.9 L6.2 107.9 L6.6 106.1M72.1 237.3 L76.1 238.6 L79.9 239.9M31.9 233.9 L31.6 232.0 L31.1 229.2M45.4 260.5 L47.3 261.3 L49.9 261.9M11.9 280.3 L13.6 278.6 L15.2 276.9 L16.7 275.3" stroke-width="2.75"/><path d="M45.5 147.9 L43.8 145.2 L42.2 142.5M74.7 154.6 L77.9 154.9 L80.4 155.6 L82.3 156.7M59.9 185.0 L61.4 183.5 L63.5 181.3M-2.0 180.8 L-0.2 178.9 L2.4 176.1M39.9 204.0 L43.7 205.1 L47.6 206.2 L51.7 207.0M79.9 239.9 L83.5 241.5 L87.1 243.2M31.1 229.2 L30.6 225.9 L30.1 222.7M41.9 229.9 L43.9 228.8 L46.6 227.1M39.9 255.9 L40.5 258.4 L41.2 261.9M14.0 319.8 L16.6 320.5 L19.5 320.9" stroke-width="2.5"/><path d="M75.7 192.1 L79.9 193.8 L84.8 195.5M42.2 142.5 L40.9 139.9 L40.0 137.5M62.0 135.6 L64.0 133.5 L66.0 131.5 L67.9 129.6M63.5 181.3 L66.1 178.8 L68.9 176.5M6.6 106.1 L7.2 104.6 L8.1 103.2 L9.2 101.9 L10.7 101.1M6.2 153.7 L6.5 152.2 L6.9 150.1M8.0 151.9 L9.6 152.8 L11.8 154.1M51.7 207.0 L55.8 207.6 L59.9 208.0M46.0 228.0 L47.0 227.3 L47.7 226.9M46.6 227.1 L49.8 225.2 L53.0 223.4M59.9 233.9 L62.7 234.0 L66.6 234.0M49.9 261.9 L53.3 262.0 L57.1 261.6M41.2 261.9 L42.1 266.0 L43.1 270.1" stroke-width="2.25"/><path d="M45.2 182.9 L46.0 183.9 L47.0 185.3M49.5 148.4 L49.9 147.4 L50.2 146.8M40.0 137.5 L39.1 135.1 L38.4 132.7 L37.8 130.3M67.9 129.6 L69.9 127.9 L72.1 126.2M51.9 145.9 L51.5 144.0 L51.0 141.5M82.3 156.7 L84.1 158.0 L85.9 159.2 L87.9 159.8 L90.2 159.9M71.9 155.5 L73.0 154.4 L74.5 153.0M68.9 176.5 L71.9 174.8 L75.1 173.8M12.4 139.9 L11.1 138.7 L9.2 137.0M12.4 139.9 L13.4 137.6 L14.8 134.3M11.8 154.1 L14.4 155.6 L17.2 156.9M2.4 176.1 L5.4 173.0 L8.7 170.1M59.9 208.0 L63.8 208.0 L67.7 207.7M59.9 208.0 L62.7 208.9 L66.6 210.3M87.1 243.2 L90.4 244.9 L93.4 246.5 L95.8 247.9M30.1 222.7 L30.0 220.0 L30.1 217.5M53.0 223.4 L55.9 222.0 L58.5 220.8M66.6 234.0 L71.2 234.1 L75.8 234.1M43.1 270.1 L43.9 273.9 L44.8 277.2M49.9 261.9 L51.3 263.6 L53.3 266.0M53.3 266.0 L55.5 268.8 L57.8 271.5M16.7 275.3 L18.0 273.9 L19.2 272.7M10.0 281.9 L11.4 282.1 L13.3 282.5M19.5 320.9 L22.6 321.2 L25.5 321.5 L28.0 321.8M12.0 318.8 L12.4 317.2 L12.8 314.9" stroke-width="2.0"/><path d="M84.8 195.5 L90.3 197.4 L95.8 199.2M43.7 167.3 L44.3 167.0 L45.3 166.4M37.8 130.3 L37.3 127.9 L37.0 125.4M51.0 141.5 L50.4 138.4 L50.0 135.2M90.2 159.9 L92.8 159.6 L95.5 159.0 L97.9 158.4M74.5 153.0 L76.3 151.3 L78.1 149.5M75.1 173.8 L78.6 173.1 L82.3 172.8 L86.1 172.7M10.7 101.1 L12.6 100.7 L14.7 100.4 L16.6 99.6 L18.0 97.9 L18.8 95.0M6.9 150.1 L7.4 148.0 L8.2 146.2M14.8 134.3 L16.5 130.5 L18.3 126.9M8.7 170.1 L12.0 167.8 L15.6 166.4M67.7 207.7 L71.5 207.2 L75.6 206.6 L79.9 206.0M66.6 210.3 L71.1 211.9 L75.8 213.2M58.5 220.8 L61.1 219.8 L63.6 219.0 L65.9 218.4M75.8 234.1 L79.9 233.9 L83.4 233.6M57.1 261.6 L61.3 261.0 L65.7 260.4 L69.9 259.9M44.8 277.2 L45.9 280.4 L46.9 283.5 L47.6 286.7M57.8 271.5 L59.9 273.9 L61.7 275.9M13.3 282.5 L15.6 283.0 L17.9 283.4M12.8 314.9 L13.5 312.2 L14.5 309.7" stroke-width="1.75"/><path d="M47.0 185.3 L48.0 186.7 L48.9 188.1M45.3 166.4 L46.3 166.0 L47.3 165.7M72.1 126.2 L74.5 124.6 L76.8 123.1M50.0 135.2 L49.9 131.9 L50.4 128.3M97.9 158.4 L99.8 157.8 L101.4 157.4 L102.6 157.0M53.0 159.2 L54.1 157.9 L55.6 156.1M78.1 149.5 L79.9 147.9 L81.5 146.2M86.1 172.7 L89.9 172.8 L93.9 173.4M8.2 146.2 L9.1 144.5 L10.0 142.8 L11.0 140.9M9.2 137.0 L7.2 135.4 L5.1 134.0M9.2 127.0 L10.3 125.5 L11.9 123.2M18.3 126.9 L20.0 123.9 L21.7 121.6M17.2 156.9 L20.0 157.8 L22.9 158.2M9.2 101.9 L8.9 100.2 L8.5 97.7M8.5 97.7 L8.2 94.9 L7.9 92.2M18.0 97.9 L19.1 97.3 L20.7 96.4M95.8 247.9 L97.6 249.1 L98.9 250.1 L99.7 251.0M59.9 233.9 L60.2 235.3 L60.5 237.2M30.1 217.5 L30.6 215.2 L31.1 213.1M65.9 218.4 L67.9 218.0 L69.6 217.9M83.4 233.6 L86.9 233.1 L90.2 232.6 L93.2 232.2M69.9 259.9 L74.4 259.6 L79.2 259.4 L83.9 259.2M47.6 286.7 L47.9 289.8 L47.6 293.4M61.7 275.9 L63.5 277.9 L65.2 279.7 L66.8 281.2M47.9 289.8 L48.7 290.7 L49.9 291.9M8.0 249.9 L8.3 248.3 L8.6 246.1M8.6 246.1 L9.1 243.4 L9.6 240.6M19.2 272.7 L20.2 271.6 L21.1 270.7M4.9 285.1 L5.6 285.8 L6.5 286.8M17.9 283.4 L20.0 283.9 L21.9 284.3M4.0 286.9 L4.5 287.6 L5.2 288.6M5.2 288.6 L6.1 289.8 L7.0 291.0M28.0 321.8 L30.1 322.1 L32.1 322.5 L33.9 322.8M1.8 308.9 L3.0 309.9 L4.6 311.3M14.5 309.7 L16.0 307.8 L18.4 306.5" stroke-width="1.5"/><path d="M95.8 199.2 L100.5 200.7 L103.8 201.8M67.8 188.7 L67.8 190.4 L67.7 192.8M37.0 125.4 L36.7 122.7 L36.5 120.1M51.9 147.1 L52.0 146.0 L52.2 144.5M57.4 140.6 L58.4 140.8 L59.7 141.0M50.4 128.3 L51.3 124.1 L52.3 120.0M55.6 156.1 L57.0 154.1 L58.0 152.0M63.4 155.5 L64.7 155.9 L66.6 156.4M81.5 146.2 L83.2 144.3 L84.9 142.5 L86.5 141.0M86.5 141.0 L87.9 139.9 L89.1 139.3M10.0 142.8 L10.6 142.1 L11.5 141.1M21.7 121.6 L23.7 119.6 L25.6 117.9M22.9 158.2 L26.2 158.3 L29.5 158.1M15.6 166.4 L19.7 165.4 L23.9 164.7M7.9 92.2 L8.0 90.0 L8.5 88.3M20.7 96.4 L22.5 95.5 L24.4 94.6M79.9 206.0 L84.9 205.2 L90.7 204.3 L96.4 203.4M32.5 200.7 L34.3 200.5 L36.8 200.3M43.7 205.1 L44.6 206.3 L45.9 208.1M75.8 213.2 L79.9 214.0 L83.7 214.0M93.2 232.2 L95.8 231.9 L98.1 232.0M42.0 257.7 L41.8 259.2 L41.6 261.3M41.2 261.9 L42.2 262.5 L43.5 263.4M66.8 281.2 L68.3 282.3 L69.7 282.7M49.9 291.9 L51.2 293.2 L52.6 294.6M9.6 240.6 L10.0 237.9 L10.4 235.0M21.9 284.3 L23.8 284.8 L25.7 285.2M7.0 291.0 L8.0 291.8 L9.2 292.5M4.6 311.3 L6.3 312.8 L8.0 314.2M18.4 306.5 L21.5 305.5 L24.9 304.8" stroke-width="1.25"/><path d="M48.9 188.1 L49.8 189.6 L50.4 190.7M67.7 192.8 L67.9 195.1 L68.3 197.4M79.9 193.8 L80.7 193.4 L81.8 192.8M103.8 201.8 L104.8 202.0 L106.1 202.3M47.3 165.7 L48.4 165.5 L49.2 165.4M36.5 120.1 L36.4 117.9 L36.3 116.3M43.8 145.2 L44.1 144.4 L44.6 143.1M76.8 123.1 L78.9 121.8 L80.3 120.9M52.2 144.5 L52.4 142.9 L52.8 141.5M59.7 141.0 L61.0 141.2 L62.3 141.3M66.0 131.5 L65.9 130.4 L65.8 128.9M102.6 157.0 L103.5 156.5 L104.3 156.1 L104.8 155.9M66.6 156.4 L68.4 157.1 L70.2 158.0M77.9 154.9 L78.5 154.2 L79.4 153.3M89.1 139.3 L90.3 139.2 L91.4 139.2M93.9 173.4 L98.3 174.4 L102.6 175.6M66.1 178.8 L65.8 177.9 L65.5 176.6M78.6 173.1 L79.6 172.1 L80.9 170.5M18.8 95.0 L19.4 90.9 L19.6 86.5 L19.8 82.6 L20.0 80.0M11.0 140.9 L12.0 138.9 L12.6 137.6M11.5 141.1 L12.4 140.1 L13.4 139.1M5.1 134.0 L3.0 132.6 L1.4 131.7M11.9 123.2 L13.3 120.8 L14.5 118.4M7.2 104.6 L6.3 103.3 L5.0 101.5M23.9 164.7 L27.4 164.2 L30.0 163.8M8.5 88.3 L9.4 86.8 L10.4 85.6M24.4 94.6 L26.0 94.0 L27.4 93.7M27.4 93.7 L28.8 93.7 L30.1 93.8M96.4 203.4 L101.4 202.6 L104.8 202.0M36.8 200.3 L39.3 200.0 L41.8 199.4M45.9 208.1 L47.4 209.6 L49.1 210.9M55.8 207.6 L56.9 206.9 L58.5 205.8M67.7 207.7 L68.6 208.1 L70.0 208.7M83.7 214.0 L87.7 213.6 L91.4 213.0M99.7 251.0 L100.3 251.8 L100.8 252.3M60.5 237.2 L60.8 239.1 L61.2 241.1M67.9 236.1 L69.1 237.2 L70.7 238.8M76.1 238.6 L77.0 237.8 L78.2 236.7M83.5 241.5 L84.3 242.5 L85.4 244.1M31.1 213.1 L31.6 211.3 L31.9 210.0M69.6 217.9 L71.2 218.0 L72.5 218.4M98.1 232.0 L100.2 232.2 L101.8 232.5M83.9 259.2 L88.0 259.0 L90.9 258.9M41.6 261.3 L41.2 263.4 L40.6 265.5M57.1 261.6 L57.8 262.6 L58.8 263.9M47.6 293.4 L46.9 297.2 L45.9 300.8M43.5 263.4 L44.7 264.3 L45.9 265.3M43.9 273.9 L43.7 274.8 L43.3 276.2M69.7 282.7 L71.1 282.7 L72.4 282.4M52.6 294.6 L53.9 295.8 L55.2 297.0M55.2 297.0 L56.6 298.1 L57.9 299.2M10.4 235.0 L10.9 231.8 L11.3 228.6M21.1 270.7 L21.8 270.0 L22.4 269.5M6.5 286.8 L7.5 287.9 L8.4 288.9M13.6 278.6 L13.5 277.7 L13.4 276.5M9.2 292.5 L10.5 293.0 L11.9 293.3M33.9 322.8 L35.3 323.0 L36.3 323.2" stroke-width="1.0"/><path d="M81.8 192.8 L82.9 192.1 L83.9 191.4M106.1 202.3 L107.5 202.7 L108.8 203.0M44.6 143.1 L45.1 141.9 L45.6 140.6M38.4 132.7 L37.6 132.2 L36.4 131.5M36.3 116.3 L36.5 115.6 L36.6 114.5M52.8 141.5 L53.3 140.0 L53.7 139.0M62.3 141.3 L63.7 141.4 L64.6 141.4M65.8 128.9 L65.8 127.4 L65.6 125.9M80.3 120.9 L81.0 120.5 L81.9 119.8M52.3 120.0 L53.3 116.4 L53.9 113.9M50.0 135.2 L50.6 134.5 L51.4 133.5M58.0 152.0 L58.7 149.7 L59.2 148.1M79.4 153.3 L80.2 152.4 L81.0 151.4M90.2 159.9 L91.0 160.9 L92.2 162.3M104.8 155.9 L105.6 155.4 L106.8 154.7M91.4 139.2 L92.2 139.4 L92.9 139.5M79.9 147.9 L79.9 146.9 L80.1 145.5M102.6 175.6 L106.2 176.7 L108.8 177.4M65.5 176.6 L65.0 175.4 L64.3 174.3M80.9 170.5 L82.1 168.9 L83.0 167.1M12.6 137.6 L12.6 137.1 L12.4 136.4M14.5 118.4 L15.5 115.8 L16.2 114.0M5.0 101.5 L3.6 99.9 L1.9 98.4M16.6 99.6 L17.7 99.7 L19.3 99.8M19.3 99.8 L20.9 99.9 L22.5 100.1M20.0 80.0 L20.0 78.9 L20.1 77.3M25.6 117.9 L27.2 116.5 L28.4 115.5M16.5 130.5 L16.2 129.7 L15.7 128.7M29.5 158.1 L32.4 157.9 L34.3 157.8M14.4 155.6 L14.8 156.5 L15.2 157.8M22.9 158.2 L23.5 157.5 L24.3 156.4M10.4 85.6 L11.4 84.7 L12.0 84.0M8.2 94.9 L7.6 94.5 L6.8 94.0M30.1 93.8 L31.2 93.9 L31.9 94.0M49.1 210.9 L50.9 212.1 L52.2 212.9M58.5 205.8 L60.1 204.9 L61.8 204.3M70.0 208.7 L71.5 209.2 L73.0 209.4M84.9 205.2 L86.2 206.0 L88.1 207.1M104.8 202.0 L105.9 202.1 L107.4 202.2M91.4 213.0 L94.6 212.4 L96.8 212.0M71.1 211.9 L71.9 211.4 L72.9 210.7M61.2 241.1 L61.5 243.0 L61.7 244.4M70.7 238.8 L72.2 240.5 L73.4 242.4M78.2 236.7 L79.5 235.7 L80.9 234.9M85.4 244.1 L86.5 245.7 L87.5 247.3M100.8 252.3 L101.6 252.9 L102.6 253.7M30.6 225.9 L30.0 225.2 L29.2 224.2M29.2 224.2 L28.5 223.1 L27.9 221.9M30.1 217.5 L31.2 217.2 L32.6 216.7M31.9 210.0 L32.0 209.3 L32.2 208.3M72.5 218.4 L73.5 218.7 L74.3 219.0M49.8 225.2 L49.7 224.4 L49.5 223.2M101.8 232.5 L103.2 232.8 L104.2 232.9M40.6 265.5 L40.0 267.5 L39.5 268.9M58.8 263.9 L59.8 265.2 L60.9 266.5M69.9 259.9 L70.5 258.9 L71.4 257.6M71.4 257.6 L72.3 256.1 L72.9 254.6M90.9 258.9 L91.8 259.1 L93.2 259.4M45.9 300.8 L44.9 304.0 L44.3 306.2M43.3 276.2 L42.8 277.5 L42.2 278.7M72.4 282.4 L73.5 282.1 L74.3 281.9M57.9 299.2 L59.1 300.2 L59.9 300.8M11.3 228.6 L11.7 225.9 L12.0 224.0M8.4 288.9 L9.3 290.0 L10.0 290.7M13.4 276.5 L13.1 275.3 L12.6 274.1M22.4 269.5 L22.7 268.8 L23.2 267.9M25.7 285.2 L27.2 285.6 L28.4 285.9M11.9 293.3 L13.1 293.6 L14.0 293.8M8.0 314.2 L9.7 315.7 L10.9 316.7M25.5 321.5 L25.6 322.3 L25.8 323.5M36.3 323.2 L37.2 323.3 L38.3 323.4M24.9 304.8 L27.9 304.3 L30.0 303.8M13.5 312.2 L14.4 311.4 L15.7 310.3" stroke-width="0.75"/><path d="M68.3 197.4 L68.9 199.7 L69.3 201.3M69.3 201.3 L69.6 201.7 L69.9 202.3M83.9 191.4 L84.9 190.7 L85.7 190.2M103.8 201.8 L104.3 202.7 L104.9 204.0M104.9 204.0 L105.6 205.3 L106.4 206.5M108.8 203.0 L110.1 203.5 L111.0 203.7M45.6 140.6 L46.1 139.4 L46.5 138.6M36.4 131.5 L35.2 130.8 L33.9 130.3M33.9 130.3 L32.6 129.8 L31.7 129.5M36.5 120.1 L37.2 119.7 L38.0 119.1M38.0 119.1 L38.9 118.6 L39.7 117.9M36.6 114.5 L36.7 113.4 L36.5 112.3M36.5 112.3 L36.3 111.2 L36.1 110.5M65.6 125.9 L65.4 124.4 L65.3 123.4M81.9 119.8 L83.0 119.3 L84.1 119.0M84.1 119.0 L85.2 118.8 L86.0 118.6M51.4 133.5 L52.4 132.6 L53.5 131.9M52.3 120.0 L52.8 119.6 L53.4 118.9M53.4 118.9 L54.1 118.2 L54.7 117.5M53.9 113.9 L53.9 113.2 L53.8 112.1M53.8 112.1 L53.8 111.1 L54.0 110.1M70.2 158.0 L71.8 159.0 L73.0 159.7M81.0 151.4 L81.8 150.3 L82.3 149.6M92.2 162.3 L93.4 163.6 L94.8 164.7M106.8 154.7 L107.9 154.0 L109.1 153.4M109.1 153.4 L110.2 152.7 L111.0 152.2M80.1 145.5 L80.3 144.1 L80.7 142.7M92.9 139.5 L93.5 139.4 L94.5 139.2M94.5 139.2 L95.5 139.1 L96.5 139.1M64.3 174.3 L63.6 173.2 L63.1 172.4M83.0 167.1 L83.8 165.2 L84.3 163.9M93.9 173.4 L94.2 174.7 L94.7 176.5M94.7 176.5 L95.3 178.4 L96.2 180.1M108.8 177.4 L109.7 177.6 L110.9 177.8M110.9 177.8 L112.1 178.1 L113.3 178.2M13.4 139.1 L14.3 138.1 L14.9 137.4M12.4 136.4 L12.3 135.6 L12.2 134.9M12.2 134.9 L12.1 134.2 L12.1 133.7M16.2 114.0 L16.0 113.5 L15.7 112.7M15.7 112.7 L15.5 111.9 L15.2 111.2M1.9 98.4 L0.2 97.0 L-1.0 96.0M-1.0 96.0 L-1.4 96.0 L-2.1 96.0M-2.1 96.0 L-2.8 96.1 L-3.4 96.3M22.5 100.1 L24.1 100.3 L25.2 100.5M19.4 90.9 L18.7 90.1 L17.7 89.0M17.7 89.0 L16.8 87.9 L15.8 86.8M20.1 77.3 L20.3 75.7 L20.6 74.1M20.6 74.1 L20.9 72.5 L21.2 71.4M15.7 128.7 L15.2 127.6 L14.8 126.5M14.8 126.5 L14.3 125.3 L14.0 124.6M21.7 121.6 L22.6 121.3 L23.9 120.8M23.9 120.8 L25.3 120.5 L26.6 120.4M28.4 115.5 L28.9 115.1 L29.8 114.5M29.8 114.5 L30.6 113.9 L31.4 113.3M15.2 157.8 L15.5 159.2 L15.6 160.6M15.6 160.6 L15.6 162.0 L15.6 162.9M24.3 156.4 L25.0 155.3 L25.6 154.1M34.3 157.8 L35.0 158.0 L36.0 158.1M36.0 158.1 L37.0 158.3 L37.9 158.7M27.4 164.2 L28.3 163.5 L29.5 162.4M29.5 162.4 L30.7 161.3 L32.0 160.4M30.0 163.8 L30.7 163.7 L31.8 163.5M31.8 163.5 L32.9 163.4 L33.9 163.2M6.8 94.0 L6.1 93.5 L5.2 93.1M10.4 85.6 L10.2 84.7 L9.8 83.4M9.8 83.4 L9.6 82.1 L9.5 80.7M12.0 84.0 L12.5 83.5 L13.1 82.9M13.1 82.9 L13.9 82.3 L14.6 81.8M26.0 94.0 L26.4 93.1 L27.0 91.9M27.0 91.9 L27.7 90.7 L28.4 89.6M31.9 94.0 L32.6 93.9 L33.4 93.8M33.4 93.8 L34.3 93.7 L35.2 93.6M41.8 199.4 L44.3 198.7 L46.0 198.2M46.0 198.2 L46.5 198.5 L47.1 198.8M52.2 212.9 L52.2 213.4 L52.2 214.1M61.8 204.3 L63.6 203.9 L64.9 203.6M73.0 209.4 L74.5 209.6 L75.6 209.6M88.1 207.1 L89.9 208.2 L91.5 209.5M107.4 202.2 L108.9 202.2 L110.4 202.0M110.4 202.0 L111.9 201.7 L112.9 201.5M72.9 210.7 L74.0 210.1 L75.2 209.6M75.2 209.6 L76.3 209.2 L77.2 208.9M87.7 213.6 L88.2 214.2 L88.8 215.1M88.8 215.1 L89.5 215.8 L90.4 216.5M96.8 212.0 L97.6 211.7 L98.6 211.4M98.6 211.4 L99.7 211.1 L100.7 210.9M73.4 242.4 L74.6 244.4 L75.4 245.8M80.9 234.9 L82.5 234.3 L83.5 233.8M87.5 247.3 L88.4 249.0 L89.0 250.1M93.4 246.5 L93.9 247.4 L94.7 248.7M94.7 248.7 L95.3 250.0 L95.8 251.4M100.3 251.8 L100.4 252.6 L100.4 253.8M100.4 253.8 L100.3 254.9 L100.2 256.1M102.6 253.7 L103.8 254.4 L105.0 254.9M105.0 254.9 L106.2 255.4 L107.1 255.7M27.9 221.9 L27.3 220.8 L26.9 219.9M32.6 216.7 L34.1 216.2 L35.6 215.6M35.6 215.6 L37.0 215.0 L38.0 214.6M32.2 208.3 L32.4 207.4 L32.7 206.5M32.7 206.5 L33.1 205.6 L33.4 205.0M49.5 223.2 L49.4 222.0 L49.5 220.9M49.5 220.9 L49.8 219.7 L50.0 218.9M73.5 218.7 L73.9 219.4 L74.5 220.3M74.5 220.3 L75.0 221.2 L75.4 222.2M74.3 219.0 L75.0 219.1 L76.1 219.3M76.1 219.3 L77.1 219.4 L78.2 219.4M83.4 233.6 L84.1 234.0 L85.0 234.6M85.0 234.6 L85.9 235.2 L86.7 236.0M95.8 231.9 L96.6 232.7 L97.7 233.7M97.7 233.7 L98.8 234.6 L100.1 235.3M104.2 232.9 L105.0 233.0 L106.2 233.2M106.2 233.2 L107.3 233.4 L108.4 233.7M60.9 266.5 L62.0 267.8 L62.8 268.7M72.9 254.6 L73.5 253.1 L73.9 252.0M93.2 259.4 L94.6 259.8 L95.8 260.4M95.8 260.4 L97.0 261.2 L97.9 261.7M45.9 265.3 L47.0 266.4 L47.8 267.2M42.2 278.7 L41.5 279.9 L41.0 280.8M46.9 297.2 L47.7 298.1 L49.0 299.5M49.0 299.5 L50.3 300.8 L51.7 302.0M44.3 306.2 L43.9 307.0 L43.3 308.0M43.3 308.0 L42.6 309.0 L41.8 309.9M68.3 282.3 L68.3 283.1 L68.3 284.3M68.3 284.3 L68.4 285.6 L68.4 286.8M74.3 281.9 L75.0 281.8 L76.1 281.7M76.1 281.7 L77.1 281.6 L78.1 281.4M59.9 300.8 L60.4 301.2 L61.2 301.6M61.2 301.6 L62.0 302.1 L62.8 302.4M9.6 240.6 L10.1 240.0 L10.9 239.1M10.9 239.1 L11.8 238.1 L12.6 237.2M10.9 231.8 L10.5 231.0 L9.9 230.0M9.9 230.0 L9.3 228.8 L8.9 227.7M12.0 224.0 L12.2 223.3 L12.5 222.4M12.5 222.4 L12.9 221.5 L13.4 220.6M12.6 274.1 L12.1 273.0 L11.7 272.3M23.2 267.9 L23.6 267.0 L24.1 266.1M24.1 266.1 L24.5 265.1 L24.7 264.4M17.9 283.4 L18.3 284.0 L18.8 284.8M18.8 284.8 L19.3 285.6 L19.9 286.3M27.2 285.6 L27.8 286.0 L28.5 286.7M28.5 286.7 L29.3 287.3 L30.2 287.8M28.4 285.9 L29.0 286.0 L29.9 286.1M29.9 286.1 L30.8 286.3 L31.6 286.6M8.0 291.8 L8.2 292.6 L8.5 293.6M8.5 293.6 L8.7 294.6 L8.8 295.7M14.0 293.8 L14.6 293.9 L15.4 293.9M15.4 293.9 L16.3 293.8 L17.1 293.6M25.8 323.5 L26.1 324.7 L26.5 325.8M26.5 325.8 L27.1 326.8 L27.4 327.6M38.3 323.4 L39.5 323.6 L40.6 323.9M40.6 323.9 L41.8 324.3 L42.5 324.5M15.7 310.3 L17.0 309.3 L18.5 308.4M18.5 308.4 L20.0 307.5 L21.0 306.9M24.9 304.8 L25.5 304.0 L26.5 302.7M26.5 302.7 L27.4 301.5 L28.3 300.3M30.0 303.8 L30.6 303.7 L31.6 303.6M31.6 303.6 L32.6 303.5 L33.5 303.2" stroke-width="0.5"/><path d="M69.9 202.3 L70.2 202.9 L70.4 203.5M70.4 203.5 L70.6 204.1 L70.7 204.5M106.4 206.5 L107.4 207.6 L108.0 208.3M39.7 117.9 L40.4 117.2 L40.9 116.7M53.5 131.9 L54.6 131.3 L55.4 130.9M54.7 117.5 L55.2 116.8 L55.6 116.2M54.0 110.1 L54.3 109.1 L54.5 108.4M94.8 164.7 L96.4 165.6 L97.5 166.3M80.7 142.7 L81.2 141.4 L81.6 140.5M96.5 139.1 L97.5 139.1 L98.2 139.1M96.2 180.1 L97.1 181.8 L97.8 182.9M113.3 178.2 L114.6 178.4 L115.4 178.5M15.2 111.2 L14.9 110.4 L14.6 109.9M-3.4 96.3 L-4.1 96.5 L-4.5 96.7M15.8 86.8 L14.9 85.6 L14.3 84.8M26.6 120.4 L28.0 120.4 L28.9 120.4M31.4 113.3 L32.2 112.7 L32.7 112.2M25.6 154.1 L26.2 152.9 L26.5 152.0M37.9 158.7 L38.9 159.0 L39.5 159.3M32.0 160.4 L33.3 159.4 L34.2 158.8M33.9 163.2 L35.0 163.0 L35.8 162.9M5.2 93.1 L4.4 92.7 L3.8 92.5M9.5 80.7 L9.5 79.4 L9.5 78.4M14.6 81.8 L15.4 81.3 L15.9 81.0M28.4 89.6 L29.2 88.5 L29.7 87.7M35.2 93.6 L36.1 93.5 L36.7 93.5M47.1 198.8 L47.7 199.1 L48.4 199.4M48.4 199.4 L49.1 199.7 L49.5 199.8M52.2 214.1 L52.3 214.8 L52.5 215.5M52.5 215.5 L52.7 216.2 L52.8 216.7M91.5 209.5 L93.1 210.9 L94.2 211.9M90.4 216.5 L91.3 217.1 L91.9 217.5M100.7 210.9 L101.8 210.6 L102.6 210.5M95.8 251.4 L96.3 252.8 L96.6 253.8M100.2 256.1 L100.0 257.3 L99.8 258.1M75.4 222.2 L75.8 223.2 L76.0 223.9M78.2 219.4 L79.2 219.2 L80.0 219.1M86.7 236.0 L87.4 236.8 L87.9 237.4M100.1 235.3 L101.4 235.9 L102.3 236.3M108.4 233.7 L109.5 234.2 L110.2 234.4M51.7 302.0 L53.2 303.2 L54.2 304.0M41.8 309.9 L40.8 310.7 L40.1 311.2M68.4 286.8 L68.4 288.0 L68.4 288.9M78.1 281.4 L79.2 281.2 L79.9 281.0M62.8 302.4 L63.6 302.7 L64.2 302.9M12.6 237.2 L13.4 236.3 L14.0 235.7M8.9 227.7 L8.5 226.5 L8.2 225.7M13.4 220.6 L14.0 219.8 L14.4 219.2M19.9 286.3 L20.6 287.0 L21.1 287.4M30.2 287.8 L31.1 288.2 L31.7 288.5M31.6 286.6 L32.5 287.0 L33.1 287.3M8.8 295.7 L8.8 296.8 L8.8 297.5M17.1 293.6 L17.9 293.3 L18.5 293.1M21.0 306.9 L21.4 306.9 L22.0 306.8M22.0 306.8 L22.5 306.8 L23.1 306.7M23.1 306.7 L23.7 306.6 L24.1 306.5M28.3 300.3 L29.2 299.0 L29.8 298.1M33.5 303.2 L34.5 302.8 L35.1 302.6" stroke-width="0.25"/></g><g fill="none" stroke="#0b0502" stroke-linecap="round" stroke-linejoin="round"><path d="M662.8 257.5 L661.0 256.5 L658.3 255.2" stroke-width="9.25"/><path d="M658.3 255.2 L655.3 253.6 L652.3 251.8" stroke-width="8.75"/><path d="M652.3 251.8 L649.8 249.9 L647.9 247.8" stroke-width="8.25"/><path d="M647.9 247.8 L646.3 245.3 L644.8 242.8 L643.4 240.3" stroke-width="7.75"/><path d="M661.8 188.8 L645.8 181.8M643.4 240.3 L641.9 237.9 L640.1 235.6" stroke-width="7.0"/><path d="M640.1 235.6 L638.3 233.3 L636.5 231.1" stroke-width="6.5"/><path d="M645.8 181.8 L645.0 179.4 L643.9 176.0M636.5 231.1 L635.0 229.3 L633.9 227.9M649.8 249.9 L648.1 250.4 L645.7 250.9" stroke-width="6.0"/><path d="M645.8 181.8 L645.3 181.5 L644.6 180.9M643.9 176.0 L642.5 172.0 L641.3 167.8" stroke-width="5.75"/><path d="M641.3 167.8 L640.3 163.8 L639.5 159.7M645.7 250.9 L642.9 251.7 L640.2 252.7" stroke-width="5.5"/><path d="M639.5 159.7 L639.0 155.0 L638.5 150.5M633.9 227.9 L633.5 227.3 L632.9 226.3M633.9 227.9 L632.2 226.2 L629.9 223.8 L627.3 221.0M640.2 252.7 L637.9 253.9 L635.9 255.5" stroke-width="5.25"/><path d="M638.5 150.5 L638.1 146.6 L637.9 143.9M635.9 255.5 L634.2 257.3 L632.6 259.3 L631.2 261.5" stroke-width="5.0"/><path d="M645.8 181.8 L643.7 182.1 L640.8 182.6 L637.3 183.1" stroke-width="4.75"/><path d="M627.3 221.0 L624.5 218.2 L621.9 216.0 L619.5 214.2M631.2 261.5 L629.9 263.9 L628.8 266.7" stroke-width="4.5"/><path d="M644.6 180.9 L643.9 180.4 L643.2 179.8M637.3 183.1 L633.6 183.5 L629.9 183.8 L626.1 183.9M637.9 143.9 L638.0 143.1 L638.1 142.0M628.8 266.7 L627.8 269.9 L627.0 273.1" stroke-width="4.25"/><path d="M637.9 143.9 L638.1 141.9 L638.3 139.2 L638.7 136.0M637.9 143.9 L636.7 141.9 L635.1 139.1 L633.3 135.9 L631.5 132.7M640.3 163.8 L638.9 162.1 L636.9 159.5 L634.6 156.7M632.9 226.3 L632.4 225.2 L632.0 224.2M619.5 214.2 L617.2 212.6 L614.8 211.2 L612.4 210.0M633.9 227.9 L631.6 228.2 L628.4 228.4M627.0 273.1 L626.4 275.9 L625.9 277.9" stroke-width="4.0"/><path d="M626.1 183.9 L622.2 183.9 L618.1 183.8 L614.0 183.7" stroke-width="3.75"/><path d="M638.7 136.0 L639.2 132.8 L639.9 129.9 L640.8 127.4M631.5 132.7 L629.9 129.9 L628.5 127.6 L627.1 125.6 L625.9 123.7M634.6 156.7 L632.2 153.9 L629.9 151.9 L627.6 150.5M629.9 183.8 L628.0 182.1 L625.3 179.6 L622.2 176.8M612.4 210.0 L609.9 209.0 L607.2 208.0 L604.5 207.3M628.4 228.4 L624.8 228.8 L621.1 229.3 L617.9 229.9M629.9 263.9 L627.7 264.5 L624.5 265.5" stroke-width="3.5"/><path d="M614.0 183.7 L609.9 183.8 L605.9 184.0 L601.9 184.3M638.1 142.0 L638.2 140.9 L638.1 139.8M622.2 176.8 L618.9 174.0 L615.9 171.8 L613.1 170.2M625.9 277.9 L625.9 278.6 L625.9 279.8M625.9 277.9 L624.5 279.2 L622.4 281.1" stroke-width="3.25"/><path d="M643.2 179.8 L642.6 179.1 L642.2 178.6M640.8 127.4 L642.1 125.1 L643.5 122.8 L644.8 120.4M625.9 123.7 L624.8 121.8 L623.9 119.9 L623.1 117.8M627.6 150.5 L625.2 149.5 L622.8 148.9 L620.3 148.3M661.8 200.4 L659.3 200.1 L655.7 199.6M617.9 229.9 L615.3 230.9 L613.0 232.2 L610.8 233.6M622.4 281.1 L620.1 283.4 L617.8 285.7 L615.9 287.8M624.5 265.5 L620.9 266.5 L617.2 267.4" stroke-width="3.0"/><path d="M601.9 184.3 L597.9 184.6 L593.9 185.1 L589.9 185.8 L585.8 186.8M644.8 120.4 L645.8 117.9 L646.7 115.2 L647.5 112.4M623.1 117.8 L622.3 115.7 L621.8 113.6 L621.6 111.7 L621.9 109.9M620.3 148.3 L617.9 147.9 L615.5 147.5 L613.1 147.4M613.1 170.2 L610.2 168.8 L607.4 167.7 L604.6 166.7M661.8 152.9 L660.7 150.9 L659.1 148.1M632.0 224.2 L631.6 223.2 L631.3 222.4M604.5 207.3 L601.6 206.6 L598.8 206.2 L595.9 206.0 L593.1 206.0M610.8 233.6 L608.5 234.9 L605.9 235.9M617.2 267.4 L613.9 267.9 L611.0 267.8" stroke-width="2.75"/><path d="M623.9 119.9 L622.5 120.0 L620.4 120.3M604.6 166.7 L601.9 165.8 L599.4 165.3 L596.9 165.0M659.1 148.1 L657.2 144.9 L655.4 142.0M655.7 199.6 L651.6 199.1 L647.5 198.6M641.9 237.9 L642.7 236.3 L643.9 234.0M625.9 279.8 L625.9 280.9 L626.0 282.0M615.9 287.8 L614.4 289.8 L613.1 291.8 L612.0 293.8M661.8 293.8 L659.6 293.5 L656.4 292.9" stroke-width="2.5"/><path d="M585.8 186.8 L581.4 188.1 L577.1 189.6 L573.2 190.8M637.3 183.1 L636.0 182.6 L634.1 181.9M638.1 139.8 L638.0 138.7 L637.8 138.0M647.5 112.4 L648.1 109.5 L648.5 106.6 L648.8 103.9 L648.9 101.4M621.9 109.9 L622.9 108.5 L624.5 107.4 L626.3 106.4 L628.2 105.3M620.4 120.3 L618.1 120.5 L615.8 120.4M613.1 147.4 L610.7 147.4 L608.3 147.3 L605.9 146.9 L603.4 146.1M647.5 198.6 L643.8 198.4 L640.8 198.5M593.1 206.0 L590.4 206.2 L587.6 206.6 L584.8 207.2M605.9 235.9 L602.9 236.5 L599.7 236.8M612.0 293.8 L610.9 295.8 L609.9 297.8M611.0 267.8 L608.2 267.5 L605.4 266.9 L602.7 266.3M661.8 319.8 L660.1 319.6 L657.7 319.4" stroke-width="2.25"/><path d="M615.8 120.4 L613.9 119.9 L612.5 118.8M613.9 119.9 L613.5 121.4 L613.1 123.7M613.1 123.7 L612.4 126.1 L611.4 128.4M629.9 151.9 L628.5 152.8 L626.6 154.2M596.9 165.0 L594.5 164.9 L592.2 164.6 L589.9 163.8 L587.7 162.6M589.9 163.8 L588.3 165.0 L585.9 166.6M655.4 142.0 L653.8 139.9 L652.6 138.7M640.8 198.5 L637.8 198.7 L635.1 199.1 L632.4 199.4M643.9 234.0 L645.2 231.3 L646.1 228.5M609.9 297.8 L609.0 299.9 L608.4 301.9M602.7 266.3 L599.9 265.9 L596.8 265.6M656.4 292.9 L652.7 292.3 L649.0 291.9" stroke-width="2.0"/><path d="M573.2 190.8 L570.0 191.8 L567.4 192.4 L565.4 192.7M634.1 181.9 L632.3 181.1 L630.5 180.1M626.1 183.9 L625.5 185.1 L624.5 186.7M648.9 101.4 L648.8 98.9 L648.6 96.4 L648.2 94.1M628.2 105.3 L629.9 103.9 L631.3 102.1 L632.6 100.0M611.4 128.4 L609.9 129.9 L607.7 130.5M603.4 146.1 L600.8 145.2 L598.2 144.1 L595.8 142.9M626.6 154.2 L624.4 155.7 L622.0 157.0M587.7 162.6 L585.6 160.9 L583.6 159.0 L581.7 157.3M601.9 165.8 L601.0 164.4 L599.8 162.4M585.9 166.6 L583.2 168.4 L580.4 170.2M632.4 199.4 L629.9 199.6 L627.3 199.5M584.8 207.2 L581.9 208.0 L578.9 209.1 L575.5 210.5M627.3 221.0 L626.1 220.7 L624.5 220.4M599.7 236.8 L596.4 237.0 L593.1 237.3 L589.9 237.9M628.4 228.4 L627.8 229.3 L626.9 230.5M646.1 228.5 L646.2 225.9 L645.3 223.4M626.0 282.0 L626.2 283.1 L626.3 283.9M608.4 301.9 L607.7 304.0 L606.9 305.9 L605.9 307.8M609.9 297.8 L608.6 297.6 L606.6 297.4M649.0 291.9 L645.8 291.8 L643.0 292.3M657.7 319.4 L654.9 319.1 L652.2 318.9" stroke-width="1.75"/><path d="M624.5 186.7 L623.5 188.3 L622.6 189.7M609.9 183.8 L609.2 183.0 L608.1 181.9M648.2 94.1 L647.8 92.0 L647.3 89.8 L646.6 87.7M638.7 136.0 L640.1 135.0 L642.1 133.6M632.6 100.0 L633.9 97.8 L635.0 95.7 L635.9 94.0 L636.4 92.6M635.1 139.1 L633.3 138.9 L630.6 138.7M612.5 118.8 L611.2 117.2 L610.1 115.4 L609.1 113.5M607.7 130.5 L604.8 130.7 L601.7 130.4 L598.6 130.1M621.9 109.9 L621.2 108.8 L620.3 107.3M620.3 107.3 L619.2 105.5 L618.4 103.7M595.8 142.9 L593.9 141.9 L592.5 140.8 L591.4 139.6M581.7 157.3 L580.0 155.9 L578.4 154.7 L577.0 153.8M599.8 162.4 L598.3 160.0 L597.0 157.8M648.8 103.9 L649.6 102.5 L650.6 100.5M650.6 100.5 L651.7 98.2 L652.9 95.9M652.6 138.7 L651.4 138.0 L650.3 137.8M661.8 129.9 L657.8 121.9M624.5 220.4 L622.9 220.1 L621.3 220.0M619.5 214.2 L619.2 212.7 L618.7 210.5M607.2 208.0 L606.0 208.6 L604.2 209.4M589.9 237.9 L586.7 239.0 L583.4 240.5 L580.2 242.0M626.9 230.5 L626.0 231.7 L624.9 232.8M617.9 229.9 L616.7 229.3 L615.0 228.3M596.8 265.6 L593.5 265.4 L590.3 265.3M606.6 297.4 L604.4 297.0 L602.1 296.5M652.2 318.9 L649.8 318.8 L647.9 318.9M658.8 218.0 L658.3 216.8 L657.6 215.2M657.6 215.2 L656.8 213.4 L656.2 211.6" stroke-width="1.5"/><path d="M630.5 180.1 L628.9 179.0 L627.7 178.3M608.1 181.9 L607.2 180.6 L606.4 179.3M593.9 185.1 L593.0 184.1 L591.7 182.6M643.5 122.8 L643.1 121.1 L642.5 118.8M630.6 138.7 L628.0 138.4 L625.4 138.1M609.1 113.5 L607.9 111.9 L606.6 110.4M598.6 130.1 L595.9 129.9 L593.5 129.7M618.4 103.7 L617.9 101.9 L617.9 100.2M634.6 156.7 L632.9 156.6 L630.4 156.4M625.2 149.5 L624.5 148.2 L623.5 146.4M622.0 157.0 L619.9 157.8 L617.7 158.1M615.9 171.8 L615.8 170.2 L615.7 167.8M597.0 157.8 L595.9 155.9 L595.2 154.3M580.4 170.2 L578.0 171.8 L575.7 173.2M652.9 95.9 L653.8 94.0 L654.6 92.3M627.3 199.5 L624.7 199.4 L622.3 199.2M575.5 210.5 L572.3 212.1 L569.5 213.4 L567.6 214.4M618.7 210.5 L618.1 208.5 L617.1 206.6M604.2 209.4 L602.4 210.1 L600.5 210.6M615.0 228.3 L613.2 227.5 L611.3 227.0M645.3 223.4 L643.4 220.6 L641.2 217.9M605.9 307.8 L604.4 309.7 L602.6 311.5 L600.7 313.3M620.9 266.5 L619.6 265.7 L617.8 264.5M602.1 296.5 L599.9 295.8 L597.7 294.8M643.0 292.3 L640.2 293.2 L637.6 294.2M647.9 318.9 L646.0 319.1 L644.3 319.4M661.8 273.9 L649.8 271.9M661.8 329.8 L653.8 327.8M656.2 211.6 L655.8 210.0 L655.9 208.6" stroke-width="1.25"/><path d="M565.4 192.7 L563.8 192.8 L562.5 192.9 L561.6 193.0M622.6 189.7 L621.6 191.1 L620.5 192.4 L619.1 193.7M620.5 192.4 L619.7 192.5 L618.5 192.6M591.7 182.6 L590.2 181.3 L588.6 180.1M646.6 87.7 L645.9 85.8 L645.3 84.1 L644.8 83.0M642.1 133.6 L644.1 132.2 L646.2 130.9M642.5 118.8 L641.7 116.5 L640.7 114.3M647.5 112.4 L648.4 111.4 L649.8 110.0M636.4 92.6 L636.7 91.4 L636.9 90.4 L637.0 89.6 L637.1 89.0M624.8 121.8 L625.3 120.4 L626.0 118.3M606.6 110.4 L605.1 108.9 L603.6 107.6M593.5 129.7 L591.2 129.5 L589.0 129.3M617.9 100.2 L618.4 98.4 L618.9 96.6M591.4 139.6 L590.6 138.5 L590.0 137.6 L589.5 136.9M630.4 156.4 L628.0 156.0 L625.7 155.3M623.5 146.4 L622.6 144.5 L621.8 142.6M613.1 147.4 L612.4 146.8 L611.4 146.0M617.7 158.1 L615.4 157.9 L613.2 157.5M577.0 153.8 L575.7 153.0 L574.7 152.3 L574.0 151.9M615.7 167.8 L615.6 165.4 L615.3 163.1M594.5 164.9 L593.4 164.4 L591.9 163.6M595.2 154.3 L594.7 152.9 L594.4 151.6M575.7 173.2 L573.3 174.7 L571.2 175.9M654.6 92.3 L655.3 90.6 L655.9 89.1M650.3 137.8 L649.5 137.6 L648.8 137.5M661.8 80.0 L655.8 76.0M622.3 199.2 L620.3 198.9 L618.9 198.8M655.7 199.6 L655.3 198.3 L654.5 196.5M643.8 198.4 L643.2 199.0 L642.2 199.9M621.3 220.0 L619.6 219.9 L618.5 219.8M595.9 206.0 L594.7 206.9 L593.1 208.3M580.2 242.0 L577.5 243.4 L575.6 244.3M624.9 232.8 L623.8 233.9 L623.0 234.6M605.9 235.9 L605.5 237.1 L604.9 238.9M596.4 237.0 L595.2 236.3 L593.5 235.3M641.2 217.9 L639.2 215.6 L637.9 214.0M600.7 313.3 L599.1 314.8 L597.9 315.8M612.0 293.8 L612.1 294.7 L612.3 295.9M590.3 265.3 L587.5 265.2 L585.5 265.1M617.8 264.5 L615.9 263.4 L613.9 262.6M611.0 267.8 L610.1 268.7 L608.7 270.0M602.7 266.3 L602.0 265.7 L601.0 264.8M597.7 294.8 L595.3 293.4 L593.0 292.0M637.6 294.2 L635.4 295.2 L633.9 295.8M655.9 208.6 L656.4 207.1 L656.9 205.9" stroke-width="1.0"/><path d="M619.1 193.7 L617.6 194.9 L616.5 195.7M618.5 192.6 L617.4 192.6 L616.2 192.5M606.4 179.3 L605.7 177.9 L605.2 177.0M561.6 193.0 L560.5 193.3 L559.1 193.7M646.2 130.9 L648.4 129.6 L649.9 128.8M649.9 128.8 L650.0 128.2 L650.3 127.4M640.7 114.3 L639.5 112.2 L638.7 110.7M649.8 110.0 L651.3 108.7 L653.0 107.7M648.8 98.9 L648.0 98.2 L646.7 97.2M644.8 83.0 L644.8 82.0 L644.6 80.7M625.4 138.1 L622.7 137.8 L620.9 137.6M626.0 118.3 L626.9 116.4 L628.2 114.6M621.8 113.6 L620.5 113.1 L618.7 112.2M618.7 112.2 L617.0 111.3 L615.5 110.1M637.1 89.0 L637.0 88.0 L636.9 86.7M603.6 107.6 L602.4 106.4 L601.5 105.5M609.1 113.5 L608.2 113.5 L607.0 113.4M589.0 129.3 L587.2 129.0 L585.9 128.9M611.4 128.4 L611.6 129.4 L611.8 130.8M618.9 96.6 L619.5 95.0 L619.9 94.0M625.7 155.3 L623.4 154.5 L621.8 153.8M611.4 146.0 L610.4 145.1 L609.4 144.2M603.4 146.1 L602.4 146.7 L600.9 147.5M589.5 136.9 L588.8 136.3 L587.8 135.5M613.2 157.5 L611.3 157.1 L609.9 156.9M624.4 155.7 L624.5 156.4 L624.7 157.4M604.6 166.7 L603.6 167.3 L602.1 168.1M602.1 168.1 L600.7 169.0 L599.3 170.0M591.9 163.6 L590.4 162.9 L588.9 162.2M574.0 151.9 L573.2 151.3 L572.2 150.4M594.4 151.6 L594.1 150.6 L593.9 149.9M571.2 175.9 L569.3 177.0 L568.0 177.8M583.2 168.4 L582.5 168.0 L581.4 167.5M655.9 89.1 L656.5 87.9 L656.8 87.0M657.2 144.9 L656.6 144.5 L655.9 144.0M655.9 144.0 L655.1 143.5 L654.2 143.1M648.8 137.5 L648.2 137.5 L647.2 137.5M657.8 121.9 L657.6 121.4 L657.4 120.6M654.5 196.5 L653.7 194.8 L652.7 193.2M642.2 199.9 L641.2 200.7 L640.1 201.4M618.9 198.8 L618.1 198.7 L616.9 198.7M617.1 206.6 L615.9 204.7 L615.0 203.5M600.5 210.6 L598.6 211.0 L597.2 211.3M593.1 208.3 L591.5 209.7 L590.2 211.4M587.6 206.6 L586.2 205.9 L584.2 204.8M584.2 204.8 L582.3 203.6 L580.6 202.2M567.6 214.4 L566.7 214.8 L565.4 215.5M611.3 227.0 L609.4 226.7 L608.0 226.5M604.9 238.9 L604.3 240.6 L603.6 242.3M593.5 235.3 L591.7 234.4 L590.0 233.4M575.6 244.3 L574.8 244.8 L573.7 245.5M645.2 231.3 L646.4 231.2 L648.2 231.0M612.3 295.9 L612.5 297.1 L612.7 298.3M608.4 301.9 L607.4 302.7 L606.1 303.9M597.9 315.8 L597.2 316.2 L596.1 316.7M608.7 270.0 L607.5 271.3 L606.5 272.8M601.0 264.8 L600.0 264.1 L598.9 263.5M585.5 265.1 L584.7 265.2 L583.6 265.3M593.0 292.0 L591.0 290.7 L589.5 289.8M604.4 297.0 L604.0 296.4 L603.4 295.5M652.7 292.3 L652.1 291.4 L651.3 290.2M644.3 319.4 L642.9 319.6 L641.9 319.8M656.9 205.9 L657.5 204.8 L657.8 204.0" stroke-width="0.75"/><path d="M616.2 192.5 L615.1 192.4 L614.3 192.2M616.5 195.7 L616.3 196.1 L616.0 196.6M616.0 196.6 L615.8 197.2 L615.5 197.8M588.6 180.1 L586.9 179.1 L585.7 178.4M565.4 192.7 L565.1 193.7 L564.6 195.1M564.6 195.1 L564.2 196.5 L563.9 198.0M559.1 193.7 L557.6 194.2 L556.3 195.0M556.3 195.0 L555.1 195.9 L554.2 196.5M650.3 127.4 L650.5 126.6 L650.6 125.7M638.7 110.7 L638.3 110.5 L637.7 110.2M637.7 110.2 L637.2 109.8 L636.6 109.4M653.0 107.7 L654.8 106.9 L656.1 106.3M646.7 97.2 L645.5 96.2 L644.2 95.2M644.2 95.2 L642.9 94.3 L642.0 93.6M645.3 84.1 L646.1 83.3 L647.2 82.1M647.2 82.1 L648.3 80.9 L649.2 79.5M644.6 80.7 L644.6 79.4 L644.9 78.1M644.9 78.1 L645.2 76.8 L645.5 75.9M628.2 114.6 L629.6 113.0 L630.6 111.8M615.5 110.1 L614.1 108.8 L613.0 107.8M633.9 97.8 L635.0 97.5 L636.5 97.2M636.5 97.2 L638.1 96.9 L639.7 96.8M636.9 86.7 L636.8 85.3 L636.6 84.0M636.6 84.0 L636.4 82.7 L636.3 81.8M607.0 113.4 L605.7 113.2 L604.6 112.8M601.5 105.5 L601.0 105.1 L600.1 104.5M600.1 104.5 L599.3 104.0 L598.3 103.6M611.8 130.8 L612.2 132.2 L612.9 133.5M601.7 130.4 L601.3 129.7 L600.8 128.6M600.8 128.6 L600.3 127.5 L600.0 126.3M591.2 129.5 L590.3 130.1 L589.1 130.8M589.1 130.8 L588.0 131.6 L586.8 132.5M585.9 128.9 L585.2 129.0 L584.1 129.2M584.1 129.2 L583.1 129.4 L582.1 129.7M618.4 103.7 L618.8 102.9 L619.5 101.8M619.5 101.8 L620.2 100.7 L621.0 99.7M619.9 94.0 L620.2 93.4 L620.7 92.7M620.7 92.7 L621.2 91.9 L621.7 91.2M621.8 142.6 L621.0 140.6 L620.5 139.2M620.5 139.2 L620.6 138.7 L620.7 138.0M620.7 138.0 L620.9 137.3 L621.1 136.6M609.4 144.2 L608.4 143.2 L607.8 142.5M600.9 147.5 L599.6 148.5 L598.4 149.6M598.4 149.6 L597.2 150.9 L596.5 151.7M595.8 142.9 L596.0 142.1 L596.1 140.9M596.1 140.9 L596.3 139.8 L596.5 138.6M587.8 135.5 L586.8 134.7 L585.7 134.0M585.7 134.0 L584.6 133.4 L583.8 132.9M624.7 157.4 L624.9 158.4 L625.0 159.5M625.0 159.5 L625.1 160.5 L625.1 161.2M615.4 157.9 L614.5 157.5 L613.2 156.8M613.2 156.8 L611.9 156.2 L610.7 155.5M609.9 156.9 L609.2 156.9 L608.3 157.0M608.3 157.0 L607.4 157.1 L606.5 157.4M615.3 163.1 L615.0 160.7 L614.8 159.1M599.3 170.0 L597.9 170.9 L596.9 171.6M588.9 162.2 L587.3 161.4 L586.2 161.0M581.7 157.3 L580.4 157.5 L578.6 157.7M578.6 157.7 L576.7 157.8 L574.9 157.7M572.2 150.4 L571.1 149.6 L570.1 148.7M570.1 148.7 L569.0 147.9 L568.2 147.3M597.0 157.8 L597.3 157.3 L597.8 156.6M597.8 156.6 L598.3 155.9 L598.8 155.2M593.9 149.9 L593.8 149.2 L593.7 148.3M593.7 148.3 L593.5 147.4 L593.3 146.6M581.4 167.5 L580.4 166.9 L579.3 166.4M575.7 173.2 L575.6 174.1 L575.4 175.3M575.4 175.3 L575.2 176.6 L575.0 177.8M568.0 177.8 L567.4 178.2 L566.6 178.8M566.6 178.8 L565.9 179.4 L565.2 180.2M655.9 89.1 L656.4 88.8 L657.1 88.3M657.1 88.3 L657.8 87.8 L658.4 87.3M656.8 87.0 L657.1 86.4 L657.5 85.6M657.5 85.6 L657.9 84.7 L658.2 83.9M654.2 143.1 L653.3 142.7 L652.7 142.4M651.4 138.0 L651.0 137.2 L650.4 136.1M650.4 136.1 L649.9 135.0 L649.3 133.8M647.2 137.5 L646.3 137.6 L645.4 137.8M645.4 137.8 L644.5 138.0 L643.9 138.2M657.8 121.9 L657.3 121.8 L656.5 121.5M656.5 121.5 L655.8 121.3 L655.0 121.0M657.4 120.6 L657.1 119.8 L656.9 119.0M656.9 119.0 L656.8 118.2 L656.7 117.6M655.8 76.0 L655.4 75.4 L654.7 74.7M654.7 74.7 L653.9 74.0 L653.1 73.4M655.8 76.0 L655.4 75.6 L654.9 75.0M654.9 75.0 L654.3 74.4 L653.7 73.9M652.7 193.2 L651.5 191.7 L650.7 190.6M640.1 201.4 L639.0 202.1 L638.2 202.6M620.3 198.9 L619.7 199.2 L618.8 199.5M618.8 199.5 L617.9 199.8 L617.1 200.3M616.9 198.7 L615.8 198.7 L614.7 198.8M614.7 198.8 L613.6 199.0 L612.8 199.2M590.2 211.4 L589.0 213.2 L588.2 214.5M588.2 214.5 L588.1 214.9 L588.0 215.6M580.6 202.2 L579.0 200.7 L577.8 199.6M572.3 212.1 L572.2 213.0 L572.1 214.3M572.1 214.3 L572.1 215.6 L572.3 216.9M565.4 215.5 L564.2 216.3 L563.1 217.2M563.1 217.2 L562.1 218.2 L561.4 219.0M603.6 242.3 L602.8 243.9 L602.3 245.1M590.0 233.4 L588.2 232.5 L587.0 231.8M587.0 231.8 L586.5 231.9 L585.9 232.1M583.4 240.5 L582.7 241.5 L581.7 242.9M581.7 242.9 L580.7 244.3 L579.5 245.6M573.7 245.5 L572.5 246.1 L571.3 246.6M571.3 246.6 L570.1 247.0 L569.2 247.3M648.2 231.0 L649.9 230.9 L651.7 231.2M651.7 231.2 L653.4 231.6 L654.6 231.9M641.2 217.9 L640.6 217.6 L639.8 217.3M639.8 217.3 L638.9 217.0 L638.0 216.7M637.9 214.0 L637.5 213.4 L636.9 212.6M636.9 212.6 L636.2 211.8 L635.6 211.1M612.7 298.3 L612.9 299.4 L613.1 300.3M606.1 303.9 L604.8 305.0 L603.5 306.2M603.5 306.2 L602.2 307.4 L601.3 308.3M596.1 316.7 L595.1 317.3 L594.1 317.9M594.1 317.9 L593.1 318.5 L592.4 319.0M613.9 262.6 L611.8 261.9 L610.4 261.5M610.4 261.5 L609.9 261.6 L609.4 261.9M609.4 261.9 L608.8 262.1 L608.1 262.3M606.5 272.8 L605.6 274.3 L604.9 275.4M604.9 275.4 L605.0 275.8 L605.1 276.4M598.9 263.5 L597.7 262.9 L596.8 262.6M583.6 265.3 L582.4 265.4 L581.3 265.5M581.3 265.5 L580.1 265.6 L579.3 265.6M603.4 295.5 L602.7 294.6 L601.9 293.9M593.0 292.0 L592.4 292.2 L591.6 292.5M591.6 292.5 L590.9 292.9 L590.2 293.3M589.5 289.8 L589.0 289.5 L588.2 288.9M588.2 288.9 L587.4 288.4 L586.6 288.0M651.3 290.2 L650.5 289.0 L649.6 287.8M649.6 287.8 L648.6 286.7 L648.0 285.9M640.2 293.2 L639.8 293.7 L639.2 294.5M639.2 294.5 L638.6 295.3 L638.1 296.1M633.9 295.8 L633.2 296.0 L632.2 296.3M632.2 296.3 L631.3 296.7 L630.3 297.0M641.9 319.8 L641.2 319.9 L640.3 320.0M640.3 320.0 L639.4 320.1 L638.4 320.1M649.8 271.9 L649.1 271.3 L648.2 270.5M648.2 270.5 L647.2 269.7 L646.4 268.8M649.8 271.9 L649.3 271.7 L648.4 271.5M648.4 271.5 L647.6 271.3 L646.8 271.3M653.8 327.8 L653.7 327.2 L653.6 326.3M653.6 326.3 L653.5 325.4 L653.4 324.5M653.8 327.8 L653.3 327.8 L652.4 327.8M652.4 327.8 L651.6 327.8 L650.8 327.7M656.2 211.6 L655.6 211.2 L654.7 210.8M654.7 210.8 L653.9 210.3 L653.1 209.8M657.8 204.0 L658.1 203.4 L658.5 202.7M658.5 202.7 L659.0 201.9 L659.4 201.2" stroke-width="0.5"/><path d="M615.5 197.8 L615.2 198.4 L615.0 198.8M563.9 198.0 L563.7 199.4 L563.5 200.4M650.6 125.7 L650.8 124.9 L650.8 124.3M636.6 109.4 L636.1 108.9 L635.8 108.6M649.2 79.5 L650.0 78.1 L650.6 77.1M639.7 96.8 L641.3 96.8 L642.4 96.8M604.6 112.8 L603.5 112.3 L602.7 111.9M598.3 103.6 L597.4 103.3 L596.7 103.1M612.9 133.5 L613.6 134.8 L614.2 135.6M600.0 126.3 L599.7 125.1 L599.6 124.3M586.8 132.5 L585.7 133.4 L584.9 134.0M582.1 129.7 L581.1 130.1 L580.4 130.3M621.0 99.7 L621.9 98.7 L622.4 98.0M621.7 91.2 L622.2 90.4 L622.5 89.8M621.1 136.6 L621.4 136.0 L621.7 135.5M596.5 138.6 L596.7 137.4 L596.8 136.6M610.7 155.5 L609.4 154.9 L608.5 154.4M606.5 157.4 L605.6 157.7 L605.0 157.9M574.9 157.7 L573.1 157.4 L571.8 157.1M598.8 155.2 L599.4 154.5 L599.7 154.1M593.3 146.6 L592.9 145.7 L592.7 145.1M579.3 166.4 L578.3 166.0 L577.5 165.6M575.0 177.8 L574.7 179.0 L574.5 179.8M565.2 180.2 L564.7 181.0 L564.3 181.6M658.4 87.3 L659.0 86.7 L659.5 86.3M658.2 83.9 L658.5 83.0 L658.8 82.4M649.3 133.8 L648.8 132.7 L648.4 131.9M655.0 121.0 L654.3 120.7 L653.8 120.5M653.1 73.4 L652.2 72.9 L651.5 72.6M653.7 73.9 L653.1 73.3 L652.7 72.9M617.1 200.3 L616.3 200.8 L615.7 201.1M588.0 215.6 L587.9 216.3 L588.0 216.9M588.0 216.9 L588.1 217.6 L588.2 218.1M572.3 216.9 L572.7 218.2 L572.9 219.1M585.9 232.1 L585.2 232.3 L584.7 232.6M584.7 232.6 L584.1 233.0 L583.7 233.2M579.5 245.6 L578.2 246.7 L577.3 247.6M638.0 216.7 L637.0 216.6 L636.4 216.5M635.6 211.1 L634.9 210.4 L634.4 209.9M608.1 262.3 L607.5 262.5 L607.1 262.6M605.1 276.4 L605.3 277.0 L605.5 277.6M605.5 277.6 L605.8 278.1 L606.0 278.5M601.9 293.9 L601.0 293.2 L600.4 292.7M590.2 293.3 L589.5 293.8 L589.1 294.2M586.6 288.0 L585.7 287.6 L585.1 287.3M638.1 296.1 L637.7 296.9 L637.4 297.5M630.3 297.0 L629.4 297.4 L628.7 297.7M638.4 320.1 L637.5 320.2 L636.9 320.2M646.4 268.8 L645.5 267.8 L644.9 267.2M646.8 271.3 L645.9 271.2 L645.3 271.2M653.4 324.5 L653.4 323.6 L653.4 323.0M650.8 327.7 L650.0 327.5 L649.5 327.4M653.1 209.8 L652.4 209.2 L651.8 208.8M659.4 201.2 L659.9 200.4 L660.3 199.9" stroke-width="0.25"/></g><path d="M-2 415.5 L30 411.5 L28.6 390 A32.8 32 0 0 1 94.2 390 L95.5 404 L102.5 403.5 L104.800 381.500 A26 26 0 0 1 156.800 381.500 L155.5 399 L162 398.5 C160.500 392 160.300 388 160.500 385 C160 368 172 358 187.5 358 C199 358 206 364 209.5 371.5 L220 397.5 C232 397 240 397 246 397.5 C270 398 300 400 330 403 C400 409 470 417 520 419 C580 419 620 414 662 410 L662 497 L-2 497Z" fill="#000"/><text x="117.89999999999999" y="110.60000000000002" font-size="66" font-weight="bold" fill="#5f1a08" textLength="409.3" lengthAdjust="spacingAndGlyphs" stroke="#5f1a08" stroke-width="1.2">171 MILLION</text><text x="115.69999999999999" y="108.60000000000002" font-size="66" font-weight="bold" fill="none" textLength="409.3" lengthAdjust="spacingAndGlyphs" stroke="#ee7412" stroke-width="0.7">171 MILLION</text><text x="125" y="136.60000000000002" font-size="17" font-weight="normal" fill="#f04e23" textLength="410.0" lengthAdjust="spacingAndGlyphs" stroke="#f04e23" stroke-width="0.15">Americans plan to celebrate Halloween this year</text><rect x="122" y="149" width="409" height="2.6" fill="#651d0a"/><rect x="122" y="247.60000000000002" width="409" height="2.6" fill="#651d0a"/><text x="125" y="189.39999999999998" font-size="20" font-weight="normal" fill="#a67c1e" textLength="125.0" lengthAdjust="spacingAndGlyphs" >Spending an</text><text x="125" y="218.7" font-size="28.5" font-weight="normal" fill="#9f7212" textLength="118.5" lengthAdjust="spacingAndGlyphs" >average</text><text x="261.8" y="227.39999999999998" font-size="88" font-weight="bold" fill="#e8690b" textLength="270.2" lengthAdjust="spacingAndGlyphs" stroke="#e8690b" stroke-width="1.5">$82.93</text><text x="260.8" y="226.49999999999997" font-size="88" font-weight="bold" fill="none" textLength="270.2" lengthAdjust="spacingAndGlyphs" stroke="#fbd9a0" stroke-width="0.9" stroke-opacity="0.8">$82.93</text><text x="260.1" y="225.89999999999998" font-size="88" font-weight="bold" fill="none" textLength="270.2" lengthAdjust="spacingAndGlyphs" stroke="#7a2c0c" stroke-width="0.7">$82.93</text><text x="120.80000000000001" y="332.6" font-size="88" font-weight="bold" fill="#f4441a" textLength="176.4" lengthAdjust="spacingAndGlyphs" stroke="#f4441a" stroke-width="1.2">67%</text><text x="118.00000000000001" y="330.6" font-size="88" font-weight="bold" fill="none" textLength="176.4" lengthAdjust="spacingAndGlyphs" stroke="#8a3510" stroke-width="0.8" stroke-opacity="0.85">67%</text><text x="316.20000000000005" y="296.1" font-size="25" font-weight="normal" fill="#e8690b" textLength="212.8" lengthAdjust="spacingAndGlyphs" >will be spent on</text><text x="316.20000000000005" y="325.5" font-size="21.5" font-weight="normal" fill="#e8690b" textLength="214.4" lengthAdjust="spacingAndGlyphs" >costumes and candy.</text></svg>
<div class="a" id="stline"></div><div class="a" id="stgap"></div><div class="a" id="status"></div>

<svg class="a" style="left:0;top:0" width="1143" height="160" viewBox="0 0 1143 160" fill="none">
<!-- title bar: save -->
<path d="M22.900 8.900h14.100v14h-14.100zM25.500 10.500v3.700h9.200v-3.700zM25 18.400v4.500h2.600v-3h4.800v3h2.600v-4.500z" fill="#fff" fill-rule="evenodd"/>
<path d="M28.600 20.600h2v2.300h-2z" fill="#b7472a"/>
<!-- undo (faded) -->
<g stroke="#d58f7b" stroke-width="1.900" fill="none" stroke-linejoin="miter">
<path d="M53.200 13.600h7.200a4.200 4.200 0 0 1 0 8.400h-2.600"/>
<path d="M57.300 9.600L53.200 13.600l4.100 4"/>
</g>
<path d="M72.400 14.200h4.400l-2.200 2.400z" fill="#d58f7b"/>
<!-- redo faded -->
<g stroke="#d58f7b" stroke-width="1.900" fill="none">
<path d="M98.200 11.400a5.400 5.400 0 1 1 -6.600 -.8"/>
<path d="M94.300 9.600h4.400v4.400"/>
</g>
<!-- slideshow from beginning -->
<g stroke="#fff" stroke-width="1.300" fill="none" stroke-linejoin="round">
<path d="M115 9.700h16.200" stroke-width="1.600"/>
<path d="M118 10v10h4.500"/>
<circle cx="126.500" cy="16.500" r="4.400" stroke-width="1.100"/>
<path d="M125.200 14.200l3.600 2.300l-3.600 2.300z" fill="#fff" stroke="none"/>
<path d="M123 20.200v3M118 23.400h10" stroke-width="1.100"/>
</g>
<!-- customize QAT -->
<path d="M148.900 15.500h5.400" stroke="#fff" stroke-width="1.200"/>
<path d="M148.700 17.700h5.800l-2.900 3.100z" fill="#fff"/>
<!-- window controls -->
<g stroke="#fff" stroke-width="1" fill="none">
<path d="M974.500 11.500h12v9h-12z"/>
<path d="M974.500 13.500h12" />
<path d="M980.500 19v-3.800M978.300 17.200l2.200-2.200l2.200 2.200"/>
<path d="M1022 16.500h10"/>
<path d="M1068.500 11.500h9.500v9h-9.500z"/>
<path d="M1114.300 11.300l9.600 9.400M1123.900 11.300l-9.600 9.400" stroke-width="1.100"/>
</g>
<!-- lightbulb -->
<g stroke="#fff" stroke-width="1.1" fill="none">
<path d="M649.3 50.2c-1.2-1.2-2.1-2.4-2.1-4.1a4.4 4.4 0 0 1 8.8 0c0 1.7-.9 2.9-2.1 4.1v1.6h-4.6z"/>
<path d="M649.6 53.6h4"/>
</g>
<!-- share person -->
<g stroke="#fff" stroke-width="1.3" fill="none">
<circle cx="1076.6" cy="44.6" r="3.5"/>
<path d="M1070.4 55.2c0-4.2 2.6-6.4 6.2-6.4c1.4 0 2.6.3 3.6 1"/>
<path d="M1082.2 49.8v6.4M1079 53h6.4"/>
</g>

<!-- ============ RIBBON ============ -->
<!-- Paste icon -->
<rect x="14" y="71" width="24" height="25" rx="1.600" fill="#eac47c"/>
<path d="M19 74.800v-3.300h4c0-4.400 6-4.400 6 0h4v3.300z" fill="#737373"/>
<circle cx="26" cy="70.800" r="1.100" fill="#f1f1f1"/>
<path d="M29.100 80.100h8.100l4.100 4.200v12.700h-12.200z" fill="#fff" stroke="#6e6e6e" stroke-width="1.200"/>
<path d="M37.200 80.100v4.200h4.100" stroke="#6e6e6e" stroke-width="1" fill="none"/>
<path d="M23 123.200h5l-2.500 2.800z" fill="#666"/>
<!-- scissors -->
<g stroke="#5a5a5a" stroke-width="1.900" stroke-linecap="round">
<path d="M53.700 67.800l7.600 9M62.300 67.800l-7.600 9"/>
</g>
<circle cx="54.200" cy="79.200" r="2.300" stroke="#3e74b8" stroke-width="1.300"/>
<circle cx="61.800" cy="79.200" r="2.300" stroke="#3e74b8" stroke-width="1.300"/>
<!-- copy -->
<g stroke="#6e6e6e" stroke-width="1" fill="#fff">
<path d="M50.500 91.500h5l2.500 2.500v8h-7.500z"/>
<path d="M56.500 94.500h5.500l3 3v7h-8.500z"/>
</g>
<path d="M52 95.500h3M52 98h3M58.500 98.500h4.500M58.500 100.500h4.500M58.500 102.500h4.500" stroke="#3e74b8" stroke-width="0.900"/>
<path d="M72 97.300h5l-2.500 2.600z" fill="#666"/>
<!-- format painter -->
<path d="M50 120l5.500-2l5.800 5l-4.300 4.800z" fill="#eac47c"/>
<path d="M55.200 118.600l3-2.800l5 4.400l-2.600 3.200z" fill="#5f5f5f"/>
<path d="M59.400 116.200l4.600-2.600l2.200 2.600l-4.200 3z" fill="#6e6e6e"/>
<!-- launcher clipboard -->
<g stroke="#8a8a8a" stroke-width="1" fill="none">
<path d="M81.500 142.500h-6v6"/><path d="M78 145l3.500 3.500M81.700 145.800v2.900h-2.900"/>
<path d="M436.500 142.500h-6v6"/><path d="M433 145l3.500 3.500M436.700 145.800v2.900h-2.900"/>
<path d="M629.500 142.500h-6v6"/><path d="M626 145l3.500 3.500M629.700 145.800v2.900h-2.900"/>
<path d="M978.500 142.500h-6v6"/><path d="M975 145l3.500 3.500M978.700 145.800v2.900h-2.900"/>
</g>
<!-- new slide icon -->
<rect x="98.500" y="70.500" width="27" height="22" rx="1.500" fill="#fff" stroke="#7e7e7e"/>
<rect x="102.600" y="74" width="19.400" height="5.400" fill="#d0d0d0"/>
<path d="M102 84.500h1.600M105 84.500h17M102 87.500h1.600M105 87.500h17" stroke="#9c9c9c" stroke-width="1"/>
<g stroke="#f0c366" stroke-width="1.900" stroke-linecap="butt">
<path d="M101.800 65.600v4M101.800 74.400v4M95.400 72h4M104.200 72h4M97.300 67.500l2.800 2.800M103.500 73.700l2.800 2.800M106.300 67.500l-2.800 2.800M100.100 73.700l-2.800 2.800"/>
</g>
<circle cx="101.800" cy="72" r="2.100" fill="#f8f1e0"/>
<path d="M122.600 123.200h5l-2.500 2.800z" fill="#666"/>
<!-- layout icon -->
<rect x="136.500" y="68.500" width="15" height="13" fill="#fff" stroke="#6e6e6e"/>
<path d="M138.500 71h11" stroke="#c4c4c4" stroke-width="1.200"/>
<rect x="138.500" y="73.300" width="5" height="6.200" fill="#c6c6c6"/>
<path d="M145 74h4.500M145 76.500h4.500M145 79h4.500" stroke="#9a9a9a" stroke-width="0.900"/>
<path d="M193.600 73h5l-2.500 2.600z" fill="#666"/>
<!-- reset icon -->
<rect x="137.500" y="94" width="14" height="10.500" fill="#fff" stroke="#6e6e6e"/>
<rect x="139.500" y="98.500" width="4.500" height="4" fill="#c6c6c6"/>
<path d="M141 96.500h8.500" stroke="#d0d0d0" stroke-width="1.200"/>
<path d="M145.500 99.500h4M145.500 102h4" stroke="#9a9a9a" stroke-width="0.900"/>
<path d="M138.200 97c.8-3.400 4-5.200 7-3.800c1 .5 1.700 1.200 2.200 2" stroke="#3e74b8" stroke-width="1.700"/>
<path d="M135.800 93.400l.6 5l4.600-1.800z" fill="#3e74b8"/>
<!-- section icon -->
<g stroke="#f0b050" stroke-width="0.900">
<path d="M139.300 113v7.200M135.700 116.600h7.200M136.800 114.100l5 5M141.800 114.100l-5 5"/>
</g>
<circle cx="139.300" cy="116.600" r="1.200" fill="#fbf0dc"/>
<path d="M143 116.500h8.500v3h-8.500" stroke="#e0601c" stroke-width="1.200"/>
<rect x="142.500" y="121.500" width="9" height="7" fill="#fff" stroke="#6e6e6e"/>
<path d="M144.500 124.500h5" stroke="#c4c4c4" stroke-width="1.600"/>
<path d="M197 119.200h5l-2.500 2.600z" fill="#666"/>

<!-- FONT group -->
<defs><pattern id="dots" width="7" height="6" patternUnits="userSpaceOnUse"><rect width="7" height="6" fill="#fff"/><rect x="1" y="1" width="1" height="1" fill="#e4e4e4"/><rect x="4" y="0" width="1" height="1" fill="#e4e4e4"/><rect x="3" y="3" width="1" height="1" fill="#e4e4e4"/><rect x="6" y="2" width="1" height="1" fill="#e4e4e4"/><rect x="0" y="4" width="1" height="1" fill="#e4e4e4"/><rect x="5" y="5" width="1" height="1" fill="#e4e4e4"/></pattern></defs>
<rect x="218.500" y="71.500" width="96.500" height="22" fill="url(#dots)" stroke="#c2c2c2"/>
<rect x="302.500" y="72" width="12" height="21" fill="#e4e4e4"/>
<path d="M306 81h5l-2.500 2.600z" fill="#b4b4b4"/>
<rect x="316.500" y="71.500" width="45.500" height="22" fill="url(#dots)" stroke="#c2c2c2"/>
<rect x="348.500" y="72" width="13" height="21" fill="#e4e4e4"/>
<path d="M352 81h5l-2.500 2.600z" fill="#b4b4b4"/>
<path d="M376 77.800h5l-2.500-2.800z" fill="#a6a6a6"/>
<path d="M398 75.200h5l-2.500 2.800z" fill="#a6a6a6"/>
<!-- clear formatting eraser -->
<path d="M424.500 83.500l5-6.500l4 3l-5 6.500z" fill="#c9c9c9"/>
<path d="M422 85.500l2.500-2l4 3l-1.500 2h-3z" fill="#dcdcdc"/>
<!-- row2 arrows -->
<path d="M350.800 112.200h5l-2.500 2.600z" fill="#b4b4b4"/>
<path d="M383.800 112.200h5l-2.500 2.600z" fill="#b4b4b4"/>
<path d="M427.800 112.200h5l-2.500 2.600z" fill="#b4b4b4"/>
<path d="M332 118h14M334.500 115.800l-2.500 2.200l2.500 2.200M343.500 115.800l2.500 2.200l-2.500 2.200" stroke="#a6a6a6" stroke-width="1"/>
<path d="M268.500 119.500h8.500" stroke="#a6a6a6" stroke-width="1"/>
<path d="M309 113.800h16.500" stroke="#a6a6a6" stroke-width="1"/>

<!-- PARAGRAPH group -->
<g fill="#a6a6a6"><circle cx="451.500" cy="75.400" r="1.300"/><circle cx="451.500" cy="81.400" r="1.300"/><circle cx="451.500" cy="87.500" r="1.300"/></g>
<g stroke="#a6a6a6" stroke-width="1">
<path d="M455 75.400h8.300M455 81.400h8.300M455 87.500h8.300"/>
<path d="M489 75.400h9M489 81.400h9M489 87.500h9"/>
<!-- decrease indent -->
<path d="M520 75h15.600M527 79h8.600M527 83.200h8.600M520 87.500h15.600"/>
<path d="M520.500 81.200h5M522.500 79l-2.300 2.200l2.300 2.200"/>
<!-- increase indent -->
<path d="M542 75h15.600M549 79h8.600M549 83.200h8.600M542 87.500h15.600"/>
<path d="M542 81.200h5M545 79l2.300 2.200l-2.300 2.200"/>
<!-- line spacing -->
<path d="M570 75v14.500M567.800 77.200l2.200-2.200l2.200 2.200M567.800 87.300l2.200 2.200l2.200-2.200"/>
<path d="M574.500 77h7.500M574.500 80.300h7.500M574.500 83.600h7.500M574.500 87h7.500"/>
<!-- text direction -->
<path d="M601 68v14.500M599.200 80.500l1.800 2l1.800-2M604.500 68v14.500M602.700 80.500l1.800 2l1.800-2"/>
<path d="M609.500 77v5.500M607.700 80.500l1.800 2l1.800-2M613.500 77v5.500M611.700 80.500l1.800 2l1.800-2"/>
<!-- align text -->
<path d="M603 91.500h-2.500v14h2.500M613 91.500h2.500v14h-2.500"/>
<path d="M608 91v5.500M606 93l2-2l2 2M608 106v-5.500M606 104l2 2l2-2M603 97.500h10M603 99.500h10"/>
<!-- align rows -->
<path d="M450 108.500h14M450 111.700h10M450 114.900h14M450 118.100h10"/>
<path d="M472 108.500h14M474 111.700h10M472 114.900h14M474 118.100h10"/>
<path d="M494 108.500h14M498 111.700h10M494 114.900h14M498 118.100h10"/>
<path d="M516.500 108.500h14M516.500 111.700h14M516.500 114.900h14M516.500 118.100h14"/>
<path d="M547 108.500h5.500M554.500 108.500h5.500M547 111.700h5.500M554.500 111.700h5.500M547 114.900h5.500M554.500 114.900h5.500M547 118.100h5.500M554.500 118.100h5.500"/>
</g>
<g fill="#b4b4b4">
<path d="M470.700 81h5l-2.500 2.600z"/><path d="M504.500 81h5l-2.500 2.600z"/><path d="M586.800 81h5l-2.500 2.600z"/>
<path d="M619.700 73.500h5l-2.500 2.600z"/><path d="M619.700 97h5l-2.500 2.600z"/><path d="M619.700 120h5l-2.500 2.600z"/>
<path d="M565.700 112.200h5l-2.500 2.600z"/>
</g>
<!-- smartart -->
<path d="M600 113.500h10l5 6h-11z" fill="#b9b9b9"/>
<path d="M600 119.500h4v5h-4z" fill="#c9c9c9"/>
<rect x="606" y="119.500" width="10" height="9" fill="#f6f6f6" stroke="#a6a6a6"/>
<path d="M608 122.500h1.500M611 122.500h3M608 125.500h1.500M611 125.500h3" stroke="#a6a6a6"/>

<!-- DRAWING group -->
<rect x="640.500" y="66.500" width="136" height="62" fill="#fff" stroke="#c6c6c6"/>
<rect x="763" y="67" width="13.500" height="20.500" fill="#e1e1e1"/>
<path d="M762.500 66.500v62M762.500 87.500h14M762.500 106.500h14" stroke="#c6c6c6"/>
<path d="M767 78.500h5l-2.500-2.800z" fill="#c0c0c0"/>
<path d="M767 96h5l-2.500 2.800z" fill="#666"/>
<path d="M766.500 115h6" stroke="#666" stroke-width="1.100"/><path d="M767 117.600h5l-2.500 2.800z" fill="#666"/>
<g stroke="#5f5f5f" stroke-width="1" fill="none">
<rect x="643.500" y="70.500" width="14" height="12"/>
<path d="M664 70.500l14 13"/>
<path d="M684.500 70.500l13 12.500M697.700 79.500v3.800h-3.800"/>
<rect x="703.500" y="71.700" width="15.300" height="10.600"/>
<ellipse cx="730.600" cy="77" rx="7.300" ry="5.300"/>
<rect x="743.500" y="71.700" width="15.300" height="10.600" rx="3"/>
<path d="M651.600 90.300l6.600 13h-13.200z"/>
<path d="M663.500 91.800h7.500v10.500h7.500"/>
<path d="M684 91.800h7v10.500h6.500M695.300 100l2.400 2.300l-2.400 2.300"/>
<path d="M703.500 93.600h7v-3.800l7 7l-7 7v-3.800h-7z"/>
<path d="M727 89.800h7.200v7h3.600l-7.200 7l-7.200-7h3.600z"/>
<path d="M746 102.300q-1.800 0-1.800-1.800v-4.500q0-4.200 4.200-4.200h5.600c-1.600 3.600.400 5.800 4.200 5.200v3.500q0 1.800-1.800 1.800z"/>
<path d="M649.300 109.400c-3 2.400-3.400 4.800-.8 5.800s5.200 2.600 4.200 5.400s-4.400 1.200-3.200-1.200s3.600.600 2.800 3.800"/>
<path d="M664 111.700c8 0 14.500 4 14.500 11"/>
<path d="M683.800 118.600c2.200-8.400 6.200-9.600 8.600-1.400s4.200 6.400 6.800 5.400"/>
<path d="M712.200 111c-1.700 0-2 .900-2 2.200v1.600c0 1-.6 1.600-1.500 1.600c.9 0 1.500.6 1.500 1.600v1.600c0 1.300.300 2.200 2 2.200"/>
<path d="M729.800 111c1.700 0 2 .900 2 2.200v1.600c0 1 .6 1.600 1.500 1.600c-.9 0-1.500.6-1.500 1.600v1.600c0 1.300-.300 2.200-2 2.200"/>
<path d="M751 110.400l2 4.800l5.200.4l-4 3.400l1.300 5.100l-4.500-2.800l-4.500 2.800l1.300-5.100l-4-3.400l5.200-.4z"/>
</g>
<path d="M645.500 79.200h10M645.500 80.900h10M651.500 74.300h4M651.500 76.200h4" stroke="#9c9c9c" stroke-width="0.800"/>
<!-- arrange -->
<rect x="793.500" y="72.500" width="18.500" height="17.500" fill="#edc87e"/>
<rect x="789.500" y="68.500" width="11.500" height="11.500" fill="#fff" stroke="#7a7a7a"/>
<rect x="804.500" y="83.500" width="11.500" height="11.500" fill="#fff" stroke="#7a7a7a"/>
<path d="M801 123.200h5l-2.500 2.600z" fill="#666"/>
<!-- quick styles -->
<rect x="835.500" y="69.500" width="25.300" height="25.500" rx="5.500" fill="url(#dots)" stroke="#c2c2c2"/>
<path d="M864.200 75.800v5.400l-8.600 8.800l-3-2.900z" fill="#b4b4b4"/>
<path d="M851.600 88l3 3c-1.200 3.600-5 6.400-12.800 6.600c4-2 6.600-5.400 9.800-9.600z" fill="#b4b4b4"/>
<path d="M862 123.200h5l-2.500 2.800z" fill="#b4b4b4"/>
<!-- shape fill bucket -->
<g stroke="#b0b0b0" stroke-width="1" fill="none">
<path d="M876.500 70.800l5.500-4.300l6 6.800l-6.500 4.800z" fill="#f6f6f6"/>
<path d="M879 69v-3"/>
<path d="M887.600 74.200c.8 1.400 1.200 2.400.6 3.200c-.6.600-1.400.2-1.300-.8z" fill="#b0b0b0"/>
<!-- outline pencil -->
<path d="M883.500 89.500h-9.500v10.500h13v-4"/>
</g>
<rect x="873.500" y="78.800" width="15" height="2.600" fill="#e2e2e2"/>
<path d="M879.500 97.500l1-3.500l7-6.500l2.500 2.500l-7 6.500z" fill="#b0b0b0"/>
<!-- effects -->
<path d="M874.500 121.500l3-6.500h10.500l-2.500 6.500z" fill="#f9f9f9" stroke="#b0b0b0"/>
<path d="M874.500 122v2.500h11l2.500-6.500v-2.500l-2.500 6.500z" fill="#b0b0b0"/>
<g fill="#b4b4b4"><path d="M945.700 73h5l-2.500 2.600z"/><path d="M969.500 96h5l-2.500 2.600z"/><path d="M965 119h5l-2.500 2.600z"/></g>
<!-- EDITING -->
<circle cx="1000.300" cy="72.800" r="3.800" stroke="#3e74b8" stroke-width="1.500"/>
<path d="M997.500 75.800l-5 4.600" stroke="#3e74b8" stroke-width="2" stroke-linecap="round"/>
<path d="M993 99.500v2.600h2.600M993 102l2.500-2.500" stroke="#3e74b8" stroke-width="1" />
<path d="M996.800 114v11.500l2.800-2.600l2 4l1.600-.8l-2-4h3.800z" fill="#fff" stroke="#4a4a4a" stroke-width="1" stroke-linejoin="round"/>
<g fill="#555"><path d="M1061 96.500h5l-2.500 2.600z"/><path d="M1044 119.300h5l-2.500 2.600z"/></g>
<path d="M1124 147.200l3.800-3.600l3.800 3.600" stroke="#555" stroke-width="1.400"/>
</svg>

<svg class="a" style="left:0;top:154px" width="1143" height="547" viewBox="0 154 1143 547" fill="none">
<!-- left panel scrollbar -->
<rect x="166" y="156" width="15" height="520" fill="#dadada"/>
<rect x="166.500" y="156.500" width="14" height="14" fill="#fff" stroke="#ababab"/>
<path d="M170.500 165h6l-3-3.500z" fill="#606060"/>
<rect x="166.500" y="170.500" width="14" height="231" fill="#fff" stroke="#ababab"/>
<rect x="166.500" y="661.500" width="14" height="14" fill="#fff" stroke="#ababab"/>
<path d="M170.500 667h6l-3 3.500z" fill="#606060"/>
<path d="M185.500 154v522" stroke="#c4c4c4"/>
<!-- right scrollbar -->
<rect x="1126" y="156" width="15" height="463" fill="#dadada"/>
<rect x="1126.500" y="156.500" width="14" height="14" fill="#fff" stroke="#ababab"/>
<path d="M1130.500 165h6l-3-3.500z" fill="#606060"/>
<rect x="1126.500" y="214.500" width="14" height="42" fill="#fff" stroke="#ababab"/>
<rect x="1126.500" y="604.500" width="14" height="14" fill="#fff" stroke="#ababab"/>
<path d="M1130.500 610h6l-3 3.500z" fill="#606060"/>
<g fill="#606060">
<path d="M1129.800 628h7l-3.500-4z"/><path d="M1129.800 632.500h7l-3.500-4z"/>
<path d="M1129.800 641h7l-3.500 4z"/><path d="M1129.800 645.500h7l-3.500 4z"/>
</g>
<!-- stars -->
<g fill="#5a5a5a">
<path id="s1" d="M16 188.200l1.400 3.100l3.400.3l-2.600 2.200l.8 3.300l-3-1.800l-3 1.800l.8-3.300l-2.600-2.200l3.400-.3z"/>
<path d="M16 296.200l1.400 3.100l3.400.3l-2.600 2.200l.8 3.300l-3-1.800l-3 1.800l.8-3.300l-2.600-2.200l3.400-.3z"/>
<path d="M16 404.200l1.400 3.100l3.400.3l-2.600 2.200l.8 3.300l-3-1.800l-3 1.800l.8-3.300l-2.600-2.200l3.400-.3z"/>
<path d="M16 512.200l1.400 3.100l3.400.3l-2.600 2.200l.8 3.300l-3-1.800l-3 1.800l.8-3.300l-2.600-2.200l3.400-.3z"/>
<path d="M16 620.200l1.400 3.100l3.400.3l-2.600 2.200l.8 3.300l-3-1.800l-3 1.800l.8-3.300l-2.600-2.200l3.400-.3z"/>
</g>
<path d="M9.500 190.500h2M9.500 298.500h2M9.500 406.500h2M9.500 514.500h2M9.500 622.500h2" stroke="#5a5a5a" stroke-width="1"/>
<!-- STATUS BAR -->
<rect x="780" y="679" width="37.700" height="21" fill="#cfcfcf"/>
<g stroke="#5e5e5e" stroke-width="1">
<!-- spellcheck -->
<path d="M91.500 682.500h6.500v11h-6.500zM98 682.500h4M98 693.500h6.500v-4" fill="none"/>
<path d="M98 693.500l0 2.500" />
<path d="M104.500 682.800l2 2l-5.600 5.800l-2.600.700l.700-2.600z" fill="#f1f1f1"/>
<!-- notes -->
<path d="M626.400 688.500h7.200M624 691.500h11M624 694.500h5.400"/>
<path d="M630.800 683l2.800 3.200h-5.600z" fill="#5e5e5e" stroke="none"/>
<!-- comments -->
<path d="M691.500 683.500h11v8.500h-4.500l-2.800 3v-3h-3.700z" fill="#5e5e5e"/>
<!-- normal view -->
<rect x="792.500" y="682.500" width="13" height="12"/>
<path d="M796 682.500v12M796 691h9.500"/>
<rect x="799" y="685.200" width="3.600" height="2.200" stroke-width="0.900"/>
<!-- sorter -->
<rect x="830.500" y="682.700" width="4.600" height="3.800"/><rect x="838.900" y="682.700" width="4.600" height="3.800"/>
<rect x="830.500" y="690.500" width="4.600" height="3.800"/><rect x="838.900" y="690.500" width="4.600" height="3.800"/>
<!-- reading view -->
<path d="M868.500 683c2.300-1 4.300-.800 6 .500c1.700-1.300 3.700-1.500 6-.500v10.500c-2.300-1-4.300-.800-6 .500c-1.700-1.300-3.700-1.500-6-.500zM874.500 683.500v11.500"/>
<path d="M870 685.500h3M870 687.500h3M870 689.500h3M870 691.500h3M876 685.500h3M876 687.500h3M876 689.500h3M876 691.500h3" stroke-width="0.800"/>
<!-- slideshow -->
<path d="M906 684h13" stroke-width="1.600"/>
<path d="M907.500 684.500v6.500h10v-6.500M912.500 691v3M910 694.500h5"/>
<path d="M910 687.500h5" stroke-width="0.800" stroke="#9a9a9a"/>
<!-- zoom -->
<path d="M937.500 689.500h6" stroke-width="1.600"/>
<path d="M947 689.500h103" stroke="#9a9a9a"/>
<path d="M998.500 687v5" stroke="#9a9a9a"/>
<path d="M1053 689.500h8M1057 685.500v8" stroke-width="1.600"/>
<!-- fit -->
<rect x="1112.500" y="683.500" width="11" height="11"/>
<path d="M1118 685v2.500M1118 693v-2.500M1114 689h2.500M1122 689h-2.500" />
</g>
<rect x="980.500" y="682.500" width="3" height="12" fill="#5e5e5e"/>
</svg>

<div class="a" id="txt" style="left:0;top:0;width:1143px;height:701px;will-change:transform"><span class="t" style="left:454.0px;top:11.0px;font-size:12px;color:#ffffff;letter-spacing:-0.23px;">peek_at_halloween_19363.pptx - PowerPoint</span><span class="t" style="left:22.5px;top:40.0px;font-size:12px;color:#ffffff;letter-spacing:-0.46px;">File</span><span class="t" style="left:78.5px;top:40.0px;font-size:12px;color:#b7472a;letter-spacing:0.12px;">Home</span><span class="t" style="left:139.5px;top:40.0px;font-size:12px;color:#ffffff;letter-spacing:-0.09px;">Insert</span><span class="t" style="left:198.5px;top:40.0px;font-size:12px;color:#ffffff;letter-spacing:-0.39px;">Design</span><span class="t" style="left:263.5px;top:40.0px;font-size:12px;color:#ffffff;letter-spacing:-0.11px;">Transitions</span><span class="t" style="left:350.0px;top:40.0px;font-size:12px;color:#ffffff;letter-spacing:0.11px;">Animations</span><span class="t" style="left:440.0px;top:40.0px;font-size:12px;color:#ffffff;letter-spacing:-0.35px;">Slide Show</span><span class="t" style="left:526.0px;top:40.0px;font-size:12px;color:#ffffff;letter-spacing:-0.48px;">Review</span><span class="t" style="left:592.0px;top:40.0px;font-size:12px;color:#ffffff;letter-spacing:-0.20px;">View</span><span class="t" style="left:663.5px;top:40.0px;font-size:12px;color:#ffffff;letter-spacing:0.05px;">Tell me what you want to do...</span><span class="t" style="left:973.0px;top:40.0px;font-size:12px;color:#ffffff;letter-spacing:0.01px;">Office Tutorials</span><span class="t" style="left:1090.0px;top:40.0px;font-size:12px;color:#ffffff;letter-spacing:-0.81px;">Share</span><span class="t" style="left:12.0px;top:100.5px;font-size:12px;color:#444444;letter-spacing:-0.54px;">Paste</span><span class="t" style="left:100.5px;top:100.5px;font-size:12px;color:#444444;letter-spacing:-0.34px;">New</span><span class="t" style="left:95.0px;top:118.0px;font-size:12px;color:#444444;letter-spacing:-0.34px;">Slide</span><span class="t" style="left:155.5px;top:67.5px;font-size:12px;color:#444444;letter-spacing:-0.17px;">Layout</span><span class="t" style="left:155.5px;top:90.5px;font-size:12px;color:#444444;letter-spacing:-0.87px;">Reset</span><span class="t" style="left:155.5px;top:113.5px;font-size:12px;color:#444444;letter-spacing:-0.29px;">Section</span><span class="t" style="left:10.5px;top:137.0px;font-size:12px;color:#666666;letter-spacing:-0.15px;">Clipboard</span><span class="t" style="left:135.5px;top:137.0px;font-size:12px;color:#666666;letter-spacing:-0.70px;">Slides</span><span class="t" style="left:307.0px;top:137.0px;font-size:12px;color:#666666;letter-spacing:-0.13px;">Font</span><span class="t" style="left:502.5px;top:137.0px;font-size:12px;color:#666666;letter-spacing:-0.39px;">Paragraph</span><span class="t" style="left:780.0px;top:137.0px;font-size:12px;color:#666666;letter-spacing:-0.29px;">Drawing</span><span class="t" style="left:1012.0px;top:137.0px;font-size:12px;color:#666666;letter-spacing:-0.10px;">Editing</span><span class="t" style="left:782.5px;top:100.5px;font-size:12px;color:#444444;letter-spacing:-0.17px;">Arrange</span><span class="t" style="left:834.0px;top:100.5px;font-size:12px;color:#a6a6a6;letter-spacing:-0.14px;">Quick</span><span class="t" style="left:829.0px;top:118.0px;font-size:12px;color:#a6a6a6;letter-spacing:-0.20px;">Styles</span><span class="t" style="left:892.5px;top:67.0px;font-size:12px;color:#a6a6a6;letter-spacing:-0.39px;">Shape Fill</span><span class="t" style="left:892.5px;top:90.0px;font-size:12px;color:#a6a6a6;letter-spacing:-0.16px;">Shape Outline</span><span class="t" style="left:892.5px;top:113.0px;font-size:12px;color:#a6a6a6;letter-spacing:-0.38px;">Shape Effects</span><span class="t" style="left:1010.5px;top:67.0px;font-size:12px;color:#444444;letter-spacing:-0.34px;">Find</span><span class="t" style="left:1010.5px;top:90.0px;font-size:12px;color:#444444;letter-spacing:-0.50px;">Replace</span><span class="t" style="left:1010.5px;top:113.0px;font-size:12px;color:#444444;letter-spacing:-0.48px;">Select</span><span class="t" style="left:8.0px;top:681.4px;font-size:12px;color:#444444;letter-spacing:-0.29px;">Slide 2 of 10</span><span class="t" style="left:640.5px;top:681.0px;font-size:12px;color:#444444;letter-spacing:-0.47px;">Notes</span><span class="t" style="left:707.5px;top:681.0px;font-size:12px;color:#444444;letter-spacing:-0.56px;">Comments</span><span class="t" style="left:1076.0px;top:681.0px;font-size:12px;color:#444444;letter-spacing:-1.01px;">68%</span><span class="t" style="left:13.0px;top:170.0px;font-size:16px;color:#555555;letter-spacing:0.00px;">1</span><span class="t" style="left:13.0px;top:278.0px;font-size:16px;color:#c8472c;letter-spacing:0.00px;">2</span><span class="t" style="left:13.0px;top:386.0px;font-size:16px;color:#555555;letter-spacing:0.00px;">3</span><span class="t" style="left:13.0px;top:494.0px;font-size:16px;color:#555555;letter-spacing:0.00px;">4</span><span class="t" style="left:13.0px;top:602.0px;font-size:16px;color:#555555;letter-spacing:0.00px;">5</span><span class="t" style="left:368.6px;top:74.6px;font-size:14px;color:#a6a6a6;letter-spacing:0.00px;">A</span><span class="t" style="left:391.0px;top:76.0px;font-size:11px;color:#a6a6a6;letter-spacing:0.00px;">A</span><span class="t" style="left:224.7px;top:104.5px;font-size:12px;color:#a6a6a6;letter-spacing:0.00px;font-weight:bold;">B</span><span class="t" style="left:247.5px;top:104.5px;font-size:13px;color:#a6a6a6;letter-spacing:0.00px;font-style:italic;font-family:'Liberation Serif',serif;font-weight:bold;">I</span><span class="t" style="left:268.3px;top:104.2px;font-size:12px;color:#a6a6a6;letter-spacing:0.00px;">U</span><span class="t" style="left:291.3px;top:104.5px;font-size:12px;color:#9a9a9a;letter-spacing:0.00px;font-weight:bold;text-shadow:1.500px 1.500px 1px #cfcfcf;">S</span><span class="t" style="left:309.1px;top:104.5px;font-size:11px;color:#a6a6a6;letter-spacing:-0.58px;">abc</span><span class="t" style="left:331.3px;top:102.3px;font-size:11px;color:#a6a6a6;letter-spacing:0.62px;">AV</span><span class="t" style="left:364.3px;top:104.5px;font-size:13px;color:#a6a6a6;letter-spacing:-0.60px;">Aa</span><span class="t" style="left:409.4px;top:104.2px;font-size:15px;color:#a6a6a6;letter-spacing:0.00px;">A</span><span class="t" style="left:420.0px;top:72.0px;font-size:12px;color:#b4b4b4;letter-spacing:0.00px;">A</span><span class="t" style="left:484.0px;top:67.4px;font-size:5.5px;color:#a6a6a6;letter-spacing:0.00px;">1</span><span class="t" style="left:484.0px;top:73.4px;font-size:5.5px;color:#a6a6a6;letter-spacing:0.00px;">2</span><span class="t" style="left:484.0px;top:79.5px;font-size:5.5px;color:#a6a6a6;letter-spacing:0.00px;">3</span><span class="t" style="left:609.0px;top:63.5px;font-size:10px;color:#a6a6a6;letter-spacing:0.00px;">A</span><span class="t" style="left:990.6px;top:85.5px;font-size:10px;color:#444444;letter-spacing:0.00px;">a</span><span class="t" style="left:995.8px;top:85.5px;font-size:10px;color:#8e3fae;letter-spacing:0.00px;">b</span><span class="t" style="left:996.5px;top:92.8px;font-size:10px;color:#444444;letter-spacing:0.00px;">a</span><span class="t" style="left:1001.8px;top:92.8px;font-size:10px;color:#3e74b8;letter-spacing:0.00px;">c</span><span class="t" style="left:645.2px;top:67.2px;font-size:7px;color:#3e74b8;letter-spacing:0.00px;font-weight:bold;">A</span></div>
<div class="a bl"></div><div class="a br"></div><div class="a bb"></div>
</div></body></html>
